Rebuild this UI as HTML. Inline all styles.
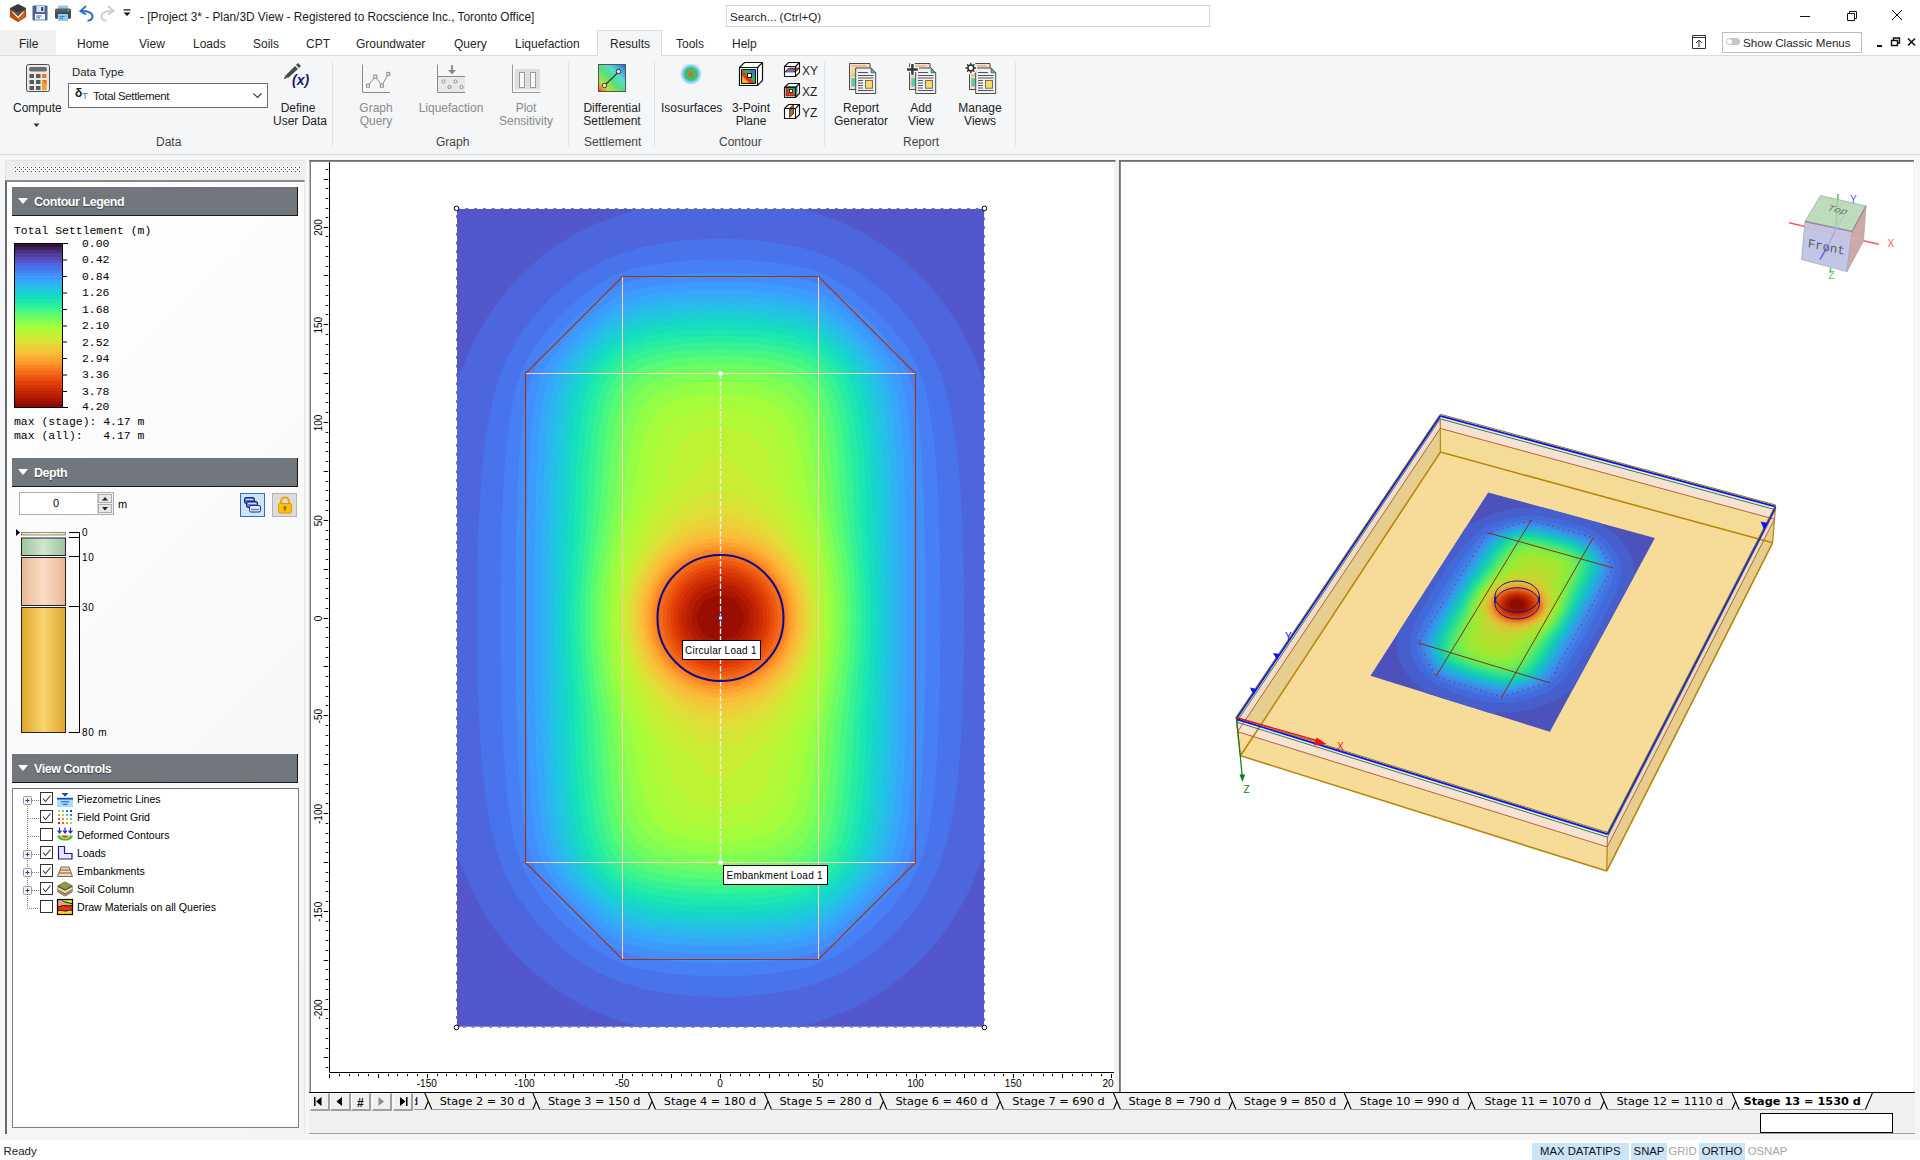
<!DOCTYPE html>
<html><head><meta charset="utf-8"><title>Settle3 - Project 3</title>
<style>
*{box-sizing:border-box;margin:0;padding:0}
html,body{width:1920px;height:1160px;overflow:hidden;background:#fff}
body{position:relative;font-family:"Liberation Sans",sans-serif;font-size:12px;color:#1e1e1e}
.a{position:absolute}
.t{position:absolute;white-space:nowrap;line-height:14px}
svg{position:absolute;overflow:visible}
#title{left:0;top:0;width:1920px;height:32px;background:#fff}
#tabs{left:0;top:32px;width:1920px;height:24px;background:#fff}
#ribbon{left:0;top:55px;width:1920px;height:105px;background:#f5f6f7;border-top:1px solid #dadbdc}
.rl{font-size:12px;text-align:center;line-height:13px;color:#222}
.dis{color:#8a8a8a}
.grp{color:#444}
.hdr{left:12px;width:286px;height:29px;background:#72767d;border-bottom:1px solid #1b1b1b;border-right:1px solid #111;color:#fff;font-weight:bold;font-size:12.500px;letter-spacing:-0.45px;line-height:30px;padding-left:22px;text-shadow:0 1px 1px rgba(0,0,0,.45)}
.hdr:before{content:"";position:absolute;left:6px;top:11px;border:5px solid transparent;border-top:6px solid #fff;border-bottom:0}
.mono{font-family:"Liberation Mono",monospace;font-size:11.45px;line-height:12px;color:#000;white-space:pre}
.tree{font-size:11px;color:#000;line-height:14px}
.stab{font-family:"DejaVu Sans","Liberation Sans",sans-serif;font-size:11.300px;line-height:14px;color:#000;white-space:nowrap;position:absolute;top:1095px}
</style></head><body>
<div id="title" class="a">
<svg style="left:9px;top:3px" width="130" height="22" viewBox="0 0 130 22">
 <!-- app logo -->
 <path d="M9 1 L17 5 L17 14 L9 19 L1 14 L1 5Z" fill="#3a3a3a"/>
 <path d="M1.5 6 L9 14.5 L16.500 6 L16.500 14 L9 18.500 L1.500 14Z" fill="#e8590c"/>
 <path d="M1.500 6 L9 14.500 L9 18.500 L1.500 14Z" fill="#c84a08"/>
 <path d="M3.500 7.500 L9 13 L14.500 7.500 L14.500 9.500 L9 15.500 L3.500 9.500Z" fill="#f0f0f0"/>
 <path d="M3.500 7 L9 9.500 L14.500 7 L14.500 8 L9 13.200 L3.500 8Z" fill="#555"/>
 <!-- save -->
 <rect x="23.500" y="2.500" width="15" height="15" rx="1" fill="#52638c"/>
 <rect x="27.500" y="3" width="8" height="6" fill="#d8e2f2"/><rect x="32.200" y="4" width="2" height="4" fill="#2d3a5e"/>
 <rect x="26" y="11" width="10" height="6.500" fill="#f2f6fb"/><rect x="26" y="16" width="10" height="1.500" fill="#8ec3f0"/>
 <rect x="27.500" y="12.500" width="5" height="1" fill="#52638c"/><rect x="27.500" y="14.300" width="3.500" height="1" fill="#52638c"/>
 <!-- print -->
 <rect x="49" y="2.500" width="10" height="4" fill="#8ec8f6"/>
 <rect x="46" y="5.500" width="16" height="10" rx="1.500" fill="#5b5b5b"/><rect x="46" y="9" width="16" height="6.500" rx="1" fill="#4a4a4a"/>
 <circle cx="59" cy="7.300" r="1" fill="#1fbf5f"/>
 <rect x="49" y="11" width="10" height="7" fill="#8ec8f6"/><rect x="50.500" y="13" width="5" height="1" fill="#2f7fd1"/><rect x="50.500" y="15" width="3.500" height="1" fill="#2f7fd1"/>
 <!-- undo -->
 <path d="M77 3 L71.500 8 L77 11.500 M72 8 C79 7.500 84 10 83.500 14 C83 16.500 81 17.500 78.500 17.800" fill="none" stroke="#2f72c4" stroke-width="2"/>
 <!-- redo -->
 <path d="M99 3 L104.500 8 L99 11.500 M104 8 C97 7.500 92 10 92.500 14 C93 16.500 95 17.500 97.500 17.800" fill="none" stroke="#cfcfcf" stroke-width="2"/>
 <!-- qat arrow -->
 <rect x="114.500" y="6.300" width="7" height="1.200" fill="#111"/><path d="M114.500 9.500 h7 l-3.500 3.500z" fill="#111"/>
</svg>
<div class="t" style="left:140px;top:10px;font-size:11.850px;color:#1a1a1a" id="ttl">- [Project 3* - Plan/3D View - Registered to Rocscience Inc., Toronto Office]</div>
<div class="a" style="left:726px;top:5px;width:484px;height:22px;border:1px solid #d2d2d2;background:#fff"></div>
<div class="t" style="left:730px;top:10px;font-size:11.600px;color:#222" id="srch">Search... (Ctrl+Q)</div>
<svg style="left:1790px;top:4px" width="124" height="24" viewBox="0 0 124 24">
 <path d="M10 12.500 h10" stroke="#111" stroke-width="1"/>
 <path d="M57.500 9.500 h7 v7 h-7z M59.500 9.500 v-2 h7 v7 h-2" fill="none" stroke="#111" stroke-width="1"/>
 <path d="M102 6 l10 10 M112 6 l-10 10" stroke="#111" stroke-width="1"/>
</svg>
</div>
<div id="tabs" class="a">
<div class="a" style="left:0;top:-2px;width:56px;height:26px;background:#f0f0f0"></div>
<div class="a" style="left:597px;top:-2px;width:65px;height:27px;background:#f5f6f7;border:1px solid #dadbdc;border-bottom:0;z-index:2"></div>
<div class="t mt" style="left:19px">File</div>
<div class="t mt" style="left:77px">Home</div>
<div class="t mt" style="left:139px">View</div>
<div class="t mt" style="left:193px">Loads</div>
<div class="t mt" style="left:253px">Soils</div>
<div class="t mt" style="left:306px">CPT</div>
<div class="t mt" style="left:356px">Groundwater</div>
<div class="t mt" style="left:454px">Query</div>
<div class="t mt" style="left:515px">Liquefaction</div>
<div class="t mt" style="left:610px;z-index:3">Results</div>
<div class="t mt" style="left:676px">Tools</div>
<div class="t mt" style="left:732px">Help</div>
<svg style="left:1690px;top:1px" width="18" height="18" viewBox="0 0 18 18"><path d="M2.500 2.500 h13 v13 h-13z M2.500 4.500 h13 M9 14 v-7 M6 10 l3 -3 l3 3" fill="none" stroke="#333" stroke-width="1"/></svg>
<div class="a" style="left:1722px;top:0px;width:140px;height:21px;border:1px solid #bdbdbd;background:#fff"></div>
<div class="a" style="left:1726px;top:6px;width:14px;height:7px;border-radius:4px;background:#c8c8c8"></div><div class="a" style="left:1727px;top:7px;width:5px;height:5px;border-radius:3px;background:#fff"></div>
<div class="t" style="left:1743px;top:4px;font-size:11.600px" id="scm">Show Classic Menus</div>
<svg style="left:1872px;top:2px" width="46" height="16" viewBox="0 0 46 16">
 <rect x="5" y="11" width="5" height="2" fill="#111"/>
 <path d="M19.500 6.500 h6 v5 h-6z M21.500 6.500 v-2.500 h6 v5 h-2" fill="none" stroke="#111" stroke-width="1.400"/>
 <path d="M36 4.500 l7 7 M43 4.500 l-7 7" stroke="#111" stroke-width="1.600"/>
</svg>
</div>
<style>.mt{top:5px;font-size:12px;color:#262626}</style>
<div id="ribbon" class="a">
<div class="a" style="left:0;top:1px;width:1920px;height:0">
<div class="a" style="left:0;top:97px;width:1920px;height:1px;background:#dcdcde"></div>
<!-- group separators -->
<div class="a sep" style="left:332px"></div><div class="a sep" style="left:568px"></div><div class="a sep" style="left:654px"></div><div class="a sep" style="left:824px"></div><div class="a sep" style="left:1015px"></div>
<style>.sep{top:5px;width:1px;height:84px;background:#e1e2e4}</style>
<!-- Compute -->
<svg style="left:26px;top:7px" width="24" height="28" viewBox="0 0 24 28">
 <rect x="0.500" y="0.500" width="23" height="27" rx="2" fill="#e9e9e9" stroke="#4d4d4d"/>
 <rect x="3" y="3" width="18" height="4.500" rx="2" fill="#6d6d6d"/>
 <g fill="#5a5a5a"><rect x="3.500" y="10" width="4.500" height="4"/><rect x="10" y="10" width="4.500" height="4"/><rect x="3.500" y="16" width="4.500" height="4"/><rect x="10" y="16" width="4.500" height="4"/><rect x="3.500" y="22" width="4.500" height="4"/><rect x="10" y="22" width="4.500" height="4"/></g>
 <rect x="16" y="10" width="4.500" height="4" fill="#ee7a1e"/><rect x="16" y="16" width="4.500" height="10" fill="#f3a032"/><path d="M16 16h4.500v5z" fill="#e8701a"/>
</svg>
<div class="t rl" style="left:13px;top:45px" id="cmp">Compute</div>
<svg style="left:33px;top:66px" width="8" height="5"><path d="M0.500 0.500 h6 l-3 3.500z" fill="#333"/></svg>
<!-- Data type -->
<div class="t" style="left:72px;top:8px;font-size:11.400px" id="dt">Data Type</div>
<div class="a" style="left:68px;top:26px;width:200px;height:25px;border:1px solid #6e6e6e;background:#fff"></div>
<div class="t" style="left:75px;top:29px;font-size:12px;font-weight:bold;color:#222">&#948;<span style="font-size:9px;color:#0d8a8a;font-weight:normal;position:relative;top:2px">T</span></div>
<div class="t" style="left:93px;top:32px;font-size:11.500px;letter-spacing:-0.4px" id="ts">Total Settlement</div>
<svg style="left:252px;top:35px" width="12" height="8"><path d="M1.500 1.500 l4 4 l4 -4" fill="none" stroke="#333" stroke-width="1.100"/></svg>
<!-- Define User Data -->
<svg style="left:283px;top:5px" width="30" height="30" viewBox="0 0 30 30">
 <path d="M2 14 L12 4 L15 7 L5 16 Z" fill="#4a4a4a"/><path d="M13 3 l2 -2 l3 3 l-2 2z" fill="#4a4a4a"/><path d="M1 17 l1 -3 l2 2z" fill="#333"/>
 <text x="9" y="23" font-family="Liberation Sans, sans-serif" font-size="14" font-weight="bold" font-style="italic" fill="#1a1a80">(x)</text>
</svg>
<div class="t rl" style="left:273px;top:45px;width:50px">Define<br>User Data</div>
<div class="t grp" style="left:156px;top:78px">Data</div>
<!-- Graph Query -->
<svg style="left:361px;top:7px" width="30" height="30" viewBox="0 0 30 30" fill="none" stroke="#8a8a8a">
 <path d="M1.500 0.500 v28 h27.500"/><path d="M7 21.700 L14.300 12.600 L20.800 21.700 L27.300 9.900"/>
 <g fill="#f5f6f7"><rect x="5.500" y="20.200" width="3" height="3"/><rect x="12.800" y="11.100" width="3" height="3"/><rect x="19.300" y="20.200" width="3" height="3"/><rect x="25.800" y="8.400" width="3" height="3"/></g>
</svg>
<div class="t rl dis" style="left:351px;top:45px;width:50px">Graph<br>Query</div>
<!-- Liquefaction -->
<svg style="left:436px;top:7px" width="30" height="30" viewBox="0 0 30 30" fill="none" stroke="#8a8a8a">
 <rect x="2" y="12.500" width="27" height="16" fill="#e8e8e8" stroke="none"/>
 <path d="M1.500 0.500 v28 h27.500"/><path d="M16 1 v6" stroke-width="1.800"/><path d="M12 6 h8 l-4 4.500z" fill="#8a8a8a" stroke="none"/><path d="M2 12.500 h27"/>
 <circle cx="7.500" cy="17.500" r="1.600" fill="#f5f6f7"/><circle cx="13.500" cy="23" r="1.600" fill="#f5f6f7"/><circle cx="19.500" cy="17.500" r="1.600" fill="#f5f6f7"/><circle cx="25.500" cy="23" r="1.600" fill="#f5f6f7"/>
</svg>
<div class="t rl dis" style="left:418px;top:45px;width:66px">Liquefaction</div>
<!-- Plot Sensitivity -->
<svg style="left:511px;top:7px" width="30" height="30" viewBox="0 0 30 30" fill="none" stroke="#9a9a9a">
 <path d="M1.500 0.500 v28 h28"/><rect x="4" y="5" width="25" height="20.500" fill="#dedede" stroke="none"/>
 <rect x="8.500" y="8.500" width="5" height="15" fill="#f5f6f7"/><rect x="19.500" y="8.500" width="5" height="15" fill="#f5f6f7"/>
</svg>
<div class="t rl dis" style="left:496px;top:45px;width:60px">Plot<br>Sensitivity</div>
<div class="t grp" style="left:436px;top:78px">Graph</div>
<!-- Differential Settlement -->
<svg style="left:598px;top:7px" width="28" height="28" viewBox="0 0 28 28">
 <defs><linearGradient id="dsg" x1="0" y1="1" x2="1" y2="0"><stop offset="0" stop-color="#d8301c"/><stop offset="0.100" stop-color="#f09020"/><stop offset="0.220" stop-color="#b0e040"/><stop offset="0.450" stop-color="#58e078"/><stop offset="0.680" stop-color="#50dcd0"/><stop offset="0.880" stop-color="#3a90e8"/><stop offset="1" stop-color="#2a58c8"/></linearGradient></defs>
 <rect x="0.500" y="0.500" width="27" height="27" fill="url(#dsg)" stroke="#555"/>
 <path d="M7 21 L20.500 8" stroke="#333" stroke-width="1.100"/><circle cx="6.500" cy="21.500" r="2.200" fill="#fde6b4" stroke="#333"/><circle cx="20.500" cy="7.500" r="2.200" fill="#fde6b4" stroke="#333"/>
</svg>
<div class="t rl" style="left:578px;top:45px;width:68px">Differential<br>Settlement</div>
<div class="t grp" style="left:584px;top:78px">Settlement</div>
<!-- Isosurfaces -->
<svg style="left:680px;top:6px" width="22" height="22" viewBox="0 0 22 22"><circle cx="11" cy="11" r="10.500" fill="#bfe3fa"/><circle cx="11" cy="11" r="9" fill="#7fc7f3"/><circle cx="11" cy="11" r="7" fill="#35c46a"/><circle cx="11" cy="11" r="4" fill="#7da64a"/><circle cx="11" cy="11" r="2.500" fill="#b07a3a"/></svg>
<div class="t rl" style="left:661px;top:45px;width:60px">Isosurfaces</div>
<!-- 3 point plane -->
<svg style="left:738px;top:4px" width="26" height="26" viewBox="0 0 26 26">
 <path d="M1.500 6.500 L6.500 1.500 H24.500 V19.500 L19.500 24.500 H1.500Z" fill="#fff" stroke="#111" stroke-width="1.200"/>
 <rect x="3.500" y="8.500" width="14" height="14" fill="#e03a1c"/><path d="M3.500 8.500h14v14z" fill="#2fb64f"/><path d="M10 8.500h7.500v8z" fill="#2f7fe0"/><path d="M3.500 14 v8.500h8z" fill="#f2b21e"/>
 <path d="M1.500 6.500 H19.500 V24.500 M19.500 6.500 L24.500 1.500" fill="none" stroke="#111" stroke-width="1.200"/>
 <path d="M3.500 8.500 h14 v14 h-14z" fill="none" stroke="#111" stroke-width="1"/>
 <rect x="9.500" y="12.500" width="4" height="4" fill="#fff" stroke="#111"/>
</svg>
<div class="t rl" style="left:726px;top:45px;width:50px">3-Point<br>Plane</div>
<!-- XY XZ YZ -->
<svg style="left:783px;top:4px" width="18" height="60" viewBox="0 0 18 60">
 <g fill="none" stroke="#111" stroke-width="1.100">
 <path d="M1.500 5.500 L5.500 1.500 H16.500 V11.500 L12.500 15.500 H1.500Z" fill="#fff"/><path d="M1.500 11 L6 7 H16.500 L12.500 11Z" fill="#e03a1c" stroke-width="0.600"/><path d="M5 8.500 l7 0 l-2 2.500 h-6z" fill="#2f7fe0" stroke="none"/><path d="M1.500 5.500 H12.500 V15.500 M12.500 5.500 L16.500 1.500"/>
 <g transform="translate(0,21)"><path d="M1.500 5.500 L5.500 1.500 H16.500 V11.500 L12.500 15.500 H1.500Z" fill="#fff"/><rect x="3" y="4.500" width="11" height="9.500" fill="#e03a1c" stroke-width="0.600"/><path d="M3 4.500h11v9.500z" fill="#2fb64f" stroke="none"/><path d="M8 4.500h6v6z" fill="#2f7fe0" stroke="none"/><rect x="6.500" y="7.500" width="3" height="3" fill="#fff" stroke-width="0.800"/><path d="M1.500 5.500 H12.500 V15.500 M12.500 5.500 L16.500 1.500"/></g>
 <g transform="translate(0,42)"><path d="M1.500 5.500 L5.500 1.500 H16.500 V11.500 L12.500 15.500 H1.500Z" fill="#fff"/><path d="M6.500 14.500 V5 L10.500 1.500 V11Z" fill="#e03a1c" stroke-width="0.600"/><path d="M7.500 8 l2 -2 v4 l-2 2z" fill="#2fb64f" stroke="none"/><path d="M1.500 5.500 H12.500 V15.500 M12.500 5.500 L16.500 1.500"/></g>
 </g>
</svg>
<div class="t" style="left:802px;top:7px">XY</div><div class="t" style="left:802px;top:28px">XZ</div><div class="t" style="left:802px;top:49px">YZ</div>
<div class="t grp" style="left:719px;top:78px">Contour</div>
<!-- Report icons -->
<svg style="left:848px;top:4px" width="30" height="34" viewBox="0 0 30 34"><use href="#rep"/></svg>
<svg style="left:908.200px;top:4px" width="30" height="34" viewBox="0 0 30 34"><use href="#rep"/><path d="M4.400 1.500 v13 M-2 8.400 h13" stroke="#f5f6f7" stroke-width="5"/><path d="M4.400 3 v10.800 M-1 8.400 h10.800" stroke="#3a3a42" stroke-width="2.500"/></svg>
<svg style="left:968px;top:4px" width="30" height="34" viewBox="0 0 30 34"><use href="#rep"/><circle cx="2.800" cy="7" r="6.500" fill="#f5f6f7"/><circle cx="2.800" cy="7" r="2.900" fill="#fff" stroke="#2a2a2a" stroke-width="1.500"/><path d="M2.800 1.800v10.400M-2.400 7h10.400M-0.900 3.300l7.400 7.400M6.500 3.300l-7.400 7.400" stroke="#2a2a2a" stroke-width="1.300" stroke-dasharray="1.900 6.600"/></svg>
<svg width="0" height="0"><defs><g id="rep">
 <path d="M1.500 2.500 h20.500 v26 h-20.500z" fill="#fbdcbc" stroke="#4a4a4a"/><path d="M3.500 5h15M3.500 13h4M3.500 14.800h4" stroke="#c8a888"/>
 <rect x="3.300" y="8" width="3.800" height="4.300" fill="#fcd860"/><rect x="3.300" y="17" width="3.800" height="8.500" fill="#4fd0b0"/>
 <path d="M7.700 7 h15.500 l4.500 4.800 v20.700 h-20z" fill="#eef0f4" stroke="#4a4a4a"/><path d="M23.200 7.300 v4.500 h4.200z" fill="#4fd0b0" stroke="#4a4a4a" stroke-width="0.800"/>
 <path d="M10 11.500h10M10 14.500h15.500M10 17h15.500M10 19.500h5M10 22h5M10 24.500h5M10 27h5M10 29.500h15.500" stroke="#555"/>
 <rect x="17.400" y="19.400" width="7.200" height="7.800" fill="#fcd860" stroke="#555" stroke-width="0.800"/>
</g></defs></svg>
<div class="t rl" style="left:831px;top:45px;width:60px">Report<br>Generator</div>
<div class="t rl" style="left:896px;top:45px;width:50px">Add<br>View</div>
<div class="t rl" style="left:950px;top:45px;width:60px">Manage<br>Views</div>
<div class="t grp" style="left:903px;top:78px">Report</div>
</div></div>
<!-- main bg -->
<div class="a" style="left:0;top:160px;width:1920px;height:980px;background:#f5f6f7"></div>
<div class="a" style="left:5px;top:160px;width:300px;height:21px;background:#eeeef0;border-top:1px solid #e2e2e6;border-left:1px solid #e2e2e6"></div>
<svg style="left:15px;top:167px" width="286" height="5"><defs><pattern id="dots" width="4" height="4" patternUnits="userSpaceOnUse"><rect width="4" height="4" fill="#f7f7f8"/><rect x="0" y="0" width="1" height="1" fill="#3a3a3a"/><rect x="2" y="2" width="1" height="1" fill="#3a3a3a"/></pattern></defs><rect x="-1" y="-1" width="288" height="7" fill="#f7f7f8"/><rect width="286" height="5" fill="url(#dots)"/></svg>
<div class="a" style="left:5px;top:180px;width:300px;height:954px;background:linear-gradient(135deg,#fff 0%,#f4f4f4 100%);border-left:2px solid #6b6b6b;border-top:2px solid #8a8a8a;border-right:1px solid #e6e6e6"></div>
<div class="a hdr" style="top:187px">Contour Legend</div>
<div class="t mono" style="left:14px;top:225px">Total Settlement (m)</div>
<svg style="left:14px;top:243px" width="60" height="166" viewBox="0 0 60 166">
<defs><linearGradient id="lg" x1="0" y1="0" x2="0" y2="1">
<stop offset="0.000" stop-color="#37123b"/><stop offset="0.020" stop-color="#37123b"/><stop offset="0.020" stop-color="#3e215f"/><stop offset="0.040" stop-color="#3e215f"/><stop offset="0.040" stop-color="#4b2f7f"/><stop offset="0.060" stop-color="#4b2f7f"/><stop offset="0.060" stop-color="#553d9c"/><stop offset="0.080" stop-color="#553d9c"/><stop offset="0.080" stop-color="#554bb5"/><stop offset="0.100" stop-color="#554bb5"/><stop offset="0.100" stop-color="#5258cb"/><stop offset="0.120" stop-color="#5258cb"/><stop offset="0.120" stop-color="#4d66dd"/><stop offset="0.140" stop-color="#4d66dd"/><stop offset="0.140" stop-color="#4873eb"/><stop offset="0.160" stop-color="#4873eb"/><stop offset="0.160" stop-color="#467ff6"/><stop offset="0.180" stop-color="#467ff6"/><stop offset="0.180" stop-color="#438efd"/><stop offset="0.200" stop-color="#438efd"/><stop offset="0.200" stop-color="#3e9bfe"/><stop offset="0.220" stop-color="#3e9bfe"/><stop offset="0.220" stop-color="#36a8f9"/><stop offset="0.240" stop-color="#36a8f9"/><stop offset="0.240" stop-color="#2db4f1"/><stop offset="0.260" stop-color="#2db4f1"/><stop offset="0.260" stop-color="#25c0e6"/><stop offset="0.280" stop-color="#25c0e6"/><stop offset="0.280" stop-color="#1dcbda"/><stop offset="0.300" stop-color="#1dcbda"/><stop offset="0.300" stop-color="#18d5cc"/><stop offset="0.320" stop-color="#18d5cc"/><stop offset="0.320" stop-color="#17debf"/><stop offset="0.340" stop-color="#17debf"/><stop offset="0.340" stop-color="#1de7b1"/><stop offset="0.360" stop-color="#1de7b1"/><stop offset="0.360" stop-color="#27eda3"/><stop offset="0.380" stop-color="#27eda3"/><stop offset="0.380" stop-color="#35f394"/><stop offset="0.400" stop-color="#35f394"/><stop offset="0.400" stop-color="#46f783"/><stop offset="0.420" stop-color="#46f783"/><stop offset="0.420" stop-color="#59fb72"/><stop offset="0.440" stop-color="#59fb72"/><stop offset="0.440" stop-color="#6dfd62"/><stop offset="0.460" stop-color="#6dfd62"/><stop offset="0.460" stop-color="#80fe53"/><stop offset="0.480" stop-color="#80fe53"/><stop offset="0.480" stop-color="#92fe46"/><stop offset="0.500" stop-color="#92fe46"/><stop offset="0.500" stop-color="#a4fc3b"/><stop offset="0.520" stop-color="#a4fc3b"/><stop offset="0.520" stop-color="#b1f836"/><stop offset="0.540" stop-color="#b1f836"/><stop offset="0.540" stop-color="#bef334"/><stop offset="0.560" stop-color="#bef334"/><stop offset="0.560" stop-color="#caed33"/><stop offset="0.580" stop-color="#caed33"/><stop offset="0.580" stop-color="#d6e535"/><stop offset="0.600" stop-color="#d6e535"/><stop offset="0.600" stop-color="#e1dc37"/><stop offset="0.620" stop-color="#e1dc37"/><stop offset="0.620" stop-color="#ead339"/><stop offset="0.640" stop-color="#ead339"/><stop offset="0.640" stop-color="#f2c83a"/><stop offset="0.660" stop-color="#f2c83a"/><stop offset="0.660" stop-color="#f8be39"/><stop offset="0.680" stop-color="#f8be39"/><stop offset="0.680" stop-color="#fcb035"/><stop offset="0.700" stop-color="#fcb035"/><stop offset="0.700" stop-color="#fda330"/><stop offset="0.720" stop-color="#fda330"/><stop offset="0.720" stop-color="#fd952b"/><stop offset="0.740" stop-color="#fd952b"/><stop offset="0.740" stop-color="#fc8624"/><stop offset="0.760" stop-color="#fc8624"/><stop offset="0.760" stop-color="#f9771e"/><stop offset="0.780" stop-color="#f9771e"/><stop offset="0.780" stop-color="#f56817"/><stop offset="0.800" stop-color="#f56817"/><stop offset="0.800" stop-color="#ef5a11"/><stop offset="0.820" stop-color="#ef5a11"/><stop offset="0.820" stop-color="#e94d0d"/><stop offset="0.840" stop-color="#e94d0d"/><stop offset="0.840" stop-color="#e04008"/><stop offset="0.860" stop-color="#e04008"/><stop offset="0.860" stop-color="#d73606"/><stop offset="0.880" stop-color="#d73606"/><stop offset="0.880" stop-color="#ce2d04"/><stop offset="0.900" stop-color="#ce2d04"/><stop offset="0.900" stop-color="#c32402"/><stop offset="0.920" stop-color="#c32402"/><stop offset="0.920" stop-color="#b61c01"/><stop offset="0.940" stop-color="#b61c01"/><stop offset="0.940" stop-color="#a91501"/><stop offset="0.960" stop-color="#a91501"/><stop offset="0.960" stop-color="#9a0e01"/><stop offset="0.980" stop-color="#9a0e01"/><stop offset="0.980" stop-color="#8b0901"/><stop offset="1.000" stop-color="#8b0901"/>
</linearGradient></defs>
<rect x="0.500" y="0.500" width="48" height="164" fill="url(#lg)" stroke="#000"/>
<path d="M48 0.500h6M48 17h5M48 33.500h5M48 50h5M48 66.500h5M48 83h5M48 99h5M48 115.500h5M48 132h5M48 148.500h5M48 164.500h6" stroke="#000"/>
</svg>
<div class="t mono" style="left:82px;top:236px;line-height:16.420px">0.00
0.42
0.84
1.26
1.68
2.10
2.52
2.94
3.36
3.78</div>
<div class="t mono" style="left:82px;top:401px">4.20</div>
<div class="t mono" style="left:14px;top:415px;line-height:14px">max (stage): 4.17 m
max (all):   4.17 m</div>
<div class="a hdr" style="top:458px">Depth</div>
<div class="a" style="left:19px;top:492px;width:95px;height:23px;border:1px solid #abadb3;background:#fff"></div>
<div class="t" style="left:53px;top:496px;font-size:11px;color:#000">0</div>
<div class="a" style="left:97px;top:493px;width:16px;height:21px;background:#f0f0f0;border-left:1px solid #d0d0d0"></div>
<div class="a" style="left:98px;top:494px;width:14px;height:9px;border:1px solid #adadad;background:#e8e8e8"></div>
<div class="a" style="left:98px;top:504px;width:14px;height:9px;border:1px solid #adadad;background:#e8e8e8"></div>
<svg style="left:101px;top:496px" width="8" height="16"><path d="M1 4.500 l3 -3.500 l3 3.500z M1 11 l3 3.500 l3 -3.500z" fill="#222"/></svg>
<div class="t" style="left:118px;top:497px;font-size:11px;color:#000">m</div>
<div class="a" style="left:240px;top:493px;width:25px;height:24px;border:1px solid #2a6fc9;background:#cfe4f7"></div>
<svg style="left:243px;top:496px" width="20" height="18" viewBox="0 0 20 18">
 <g stroke="#1c2e70" stroke-width="1"><rect x="1.500" y="1.500" width="10" height="6" rx="1.500" fill="#4f6fd0"/><rect x="3.500" y="5.500" width="11" height="6" rx="1.500" fill="#5b7be0"/><rect x="6.500" y="9.500" width="11" height="6.500" rx="1.500" fill="#e8eefc"/></g>
 <path d="M3 3.500h7M5 7.500h8" stroke="#cfd9ff" stroke-width="1"/><path d="M8 13.500h8" stroke="#5b7be0" stroke-width="1.500"/>
</svg>
<div class="a" style="left:272px;top:493px;width:25px;height:24px;border:1px solid #b4b4b4;background:#dcdcdc"></div>
<svg style="left:277px;top:496px" width="16" height="18" viewBox="0 0 16 18">
 <path d="M4 8 V5.500 a4 4 0 0 1 8 0 V8" fill="none" stroke="#f0a800" stroke-width="2.200"/><rect x="1.500" y="7.500" width="13" height="9.500" rx="1.500" fill="#fcbf10" stroke="#e09a00"/><circle cx="8" cy="11.500" r="1.500" fill="#8a6a2a"/><rect x="7.300" y="12" width="1.400" height="3" fill="#8a6a2a"/>
</svg>
<!-- soil column -->
<svg style="left:14px;top:528px" width="110" height="212" viewBox="0 0 110 212">
<defs>
<linearGradient id="sg1" x1="0" x2="1"><stop offset="0" stop-color="#9ec49e"/><stop offset="0.500" stop-color="#cfe6cf"/><stop offset="1" stop-color="#9ec49e"/></linearGradient>
<linearGradient id="sg2" x1="0" x2="1"><stop offset="0" stop-color="#e6b894"/><stop offset="0.500" stop-color="#fbdcc3"/><stop offset="1" stop-color="#e6b894"/></linearGradient>
<linearGradient id="sg3" x1="0" x2="1"><stop offset="0" stop-color="#dba62c"/><stop offset="0.500" stop-color="#fbd56e"/><stop offset="1" stop-color="#dba62c"/></linearGradient>
<linearGradient id="sg0" x1="0" x2="1"><stop offset="0" stop-color="#e6dc9a"/><stop offset="0.500" stop-color="#fbf4c8"/><stop offset="1" stop-color="#e6dc9a"/></linearGradient>
</defs>
<path d="M2 1 l4 3.500 l-4 3.500z" fill="#000"/>
<rect x="7.500" y="4.300" width="44" height="2.700" fill="url(#sg0)" stroke="#666" stroke-width="0.700"/>
<rect x="7.500" y="10" width="44" height="17.500" fill="url(#sg1)" stroke="#222"/>
<rect x="7.500" y="29.500" width="44" height="48" fill="url(#sg2)" stroke="#222"/>
<rect x="7.500" y="79.500" width="44" height="125" fill="url(#sg3)" stroke="#222"/>
<path d="M55 4.500 h10.500 v200 h-10.500 M55 9.500 h10.500 M55 28.500 h10.500 M55 78.500 h10.500" fill="none" stroke="#000"/>
<g font-family="Liberation Sans, sans-serif" font-size="10" fill="#000" letter-spacing="0.800"><text x="68" y="8">0</text><text x="68" y="33">10</text><text x="68" y="83">30</text><text x="68" y="208">80 m</text></g>
</svg>
<div class="a hdr" style="top:754px">View Controls</div>
<div class="a" style="left:12px;top:788px;width:287px;height:340px;border:1px solid #7a7f8a;border-top-color:#6a6f7a;background:#fff"></div>
<!-- tree -->
<svg style="left:20px;top:789px" width="60" height="126" viewBox="0 0 60 126">
 <path d="M7.500 15 V119.500 H19 M8 29.500 H19 M8 47.500 H19 M12 11.500 H19 M12 65.500 H19 M12 83.500 H19 M12 101.500 H19" fill="none" stroke="#7a7a7a" stroke-dasharray="1 1"/>
 <g fill="#f4f4f4" stroke="#9a9a9a"><rect x="3.500" y="7.500" width="8" height="8" rx="1"/><rect x="3.500" y="61.500" width="8" height="8" rx="1"/><rect x="3.500" y="79.500" width="8" height="8" rx="1"/><rect x="3.500" y="97.500" width="8" height="8" rx="1"/></g>
 <path d="M5.500 11.500h4M7.500 9.500v4M5.500 65.500h4M7.500 63.500v4M5.500 83.500h4M7.500 81.500v4M5.500 101.500h4M7.500 99.500v4" stroke="#1f3f98"/>
 <g fill="#fff" stroke="#333"><rect x="20.500" y="3.500" width="12" height="12"/><rect x="20.500" y="21.500" width="12" height="12"/><rect x="20.500" y="39.500" width="12" height="12"/><rect x="20.500" y="57.500" width="12" height="12"/><rect x="20.500" y="75.500" width="12" height="12"/><rect x="20.500" y="93.500" width="12" height="12"/><rect x="20.500" y="111.500" width="12" height="12"/></g>
 <path d="M23 9.500l2.500 3l5-6M23 27.500l2.500 3l5-6M23 63.500l2.500 3l5-6M23 81.500l2.500 3l5-6M23 99.500l2.500 3l5-6" fill="none" stroke="#333" stroke-width="1.100"/>
 <g transform="translate(37,3)"><rect x="0" y="7" width="16" height="8" fill="#a8dcf8"/><path d="M4.500 1 h7 l-3.500 3.800z" fill="#1546c0"/><rect x="0" y="5.800" width="16" height="1.700" fill="#1546c0"/><rect x="4" y="9.300" width="8" height="1.100" fill="#1a6ad8"/><rect x="5.500" y="11.800" width="5" height="1.100" fill="#1a6ad8"/></g>
 <g transform="translate(37,19)"><rect x="1" y="2" width="2" height="2" fill="#a8e820"/><rect x="5" y="2" width="2" height="2" fill="#20d8c8"/><rect x="9" y="2" width="2" height="2" fill="#2878e8"/><rect x="13" y="2" width="2" height="2" fill="#1a3aa8"/><rect x="1" y="6" width="2" height="2" fill="#f89820"/><rect x="5" y="6" width="2" height="2" fill="#a8e820"/><rect x="9" y="6" width="2" height="2" fill="#20d8c8"/><rect x="13" y="6" width="2" height="2" fill="#2878e8"/><rect x="1" y="10" width="2" height="2" fill="#f05018"/><rect x="5" y="10" width="2" height="2" fill="#f89820"/><rect x="9" y="10" width="2" height="2" fill="#a8e820"/><rect x="13" y="10" width="2" height="2" fill="#20d8c8"/><rect x="1" y="14" width="2" height="2" fill="#e81818"/><rect x="5" y="14" width="2" height="2" fill="#f05018"/><rect x="9" y="14" width="2" height="2" fill="#f89820"/><rect x="13" y="14" width="2" height="2" fill="#a8e820"/></g>
 <g transform="translate(37,38)"><path d="M2.500 0.500v5M8 0.500v5M13.500 0.500v5M0.500 3.500l2 2.500l2-2.500M6 3.500l2 2.500l2-2.500M11.500 3.500l2 2.500l2-2.500" fill="none" stroke="#1a2ad8" stroke-width="1.200"/><path d="M0 8.500h16c-0.500 3-3.500 5-8 5s-7.500-2-8-5z" fill="#30b858"/><path d="M2.500 8.500h11c-0.500 2.200-2.500 3.600-5.500 3.600s-5-1.400-5.500-3.600z" fill="#f0d020"/><path d="M5 8.500h6c-0.300 1.300-1.300 2.200-3 2.200s-2.700-0.900-3-2.200z" fill="#e83818"/><path d="M0 8.500h16" stroke="#c8d0d8" stroke-width="0.600"/></g>
 <g transform="translate(37,56)"><path d="M1.500 1.500h6v7h7.500v5.500h-13.500z" fill="#e8e8fa" stroke="#1a1a9a" stroke-width="1.200"/></g>
 <g transform="translate(37,74)"><path d="M4 4h8l3.500 9.500h-15z" fill="#f8d8b0" stroke="#6a5a4a" stroke-width="0.900"/><path d="M3 7h10M1.800 10h12.400" stroke="#6a5a4a" stroke-width="0.900"/></g>
 <g transform="translate(37,92)"><path d="M8 0.500l7.500 4v6.500l-7.500 4.500l-7.500-4.500v-6.500z" fill="#5a4a32"/><path d="M8 0.800l7 3.800l-7 3.800l-7-3.800z" fill="#8a9a48"/><path d="M1 6l7 3.800l7-3.800v2.500l-7 4l-7-4z" fill="#e8dcb0"/><path d="M1 9l7 4l7-4v2l-7 4.200l-7-4.200z" fill="#a88a60"/></g>
 <g transform="translate(37,110)"><rect x="0.500" y="0.500" width="15" height="15" fill="#d8a878" stroke="#000"/><path d="M5 1h10.500v3.500c-3 0.500-5-1.500-7-1.500s-2.500-1-3.500-2z" fill="#c8f020"/><path d="M0.500 8c3 0 4-2 7-1.500s5 0.500 8 0v5c-3-1.500-5 1-8 0.500s-4-1-7-0.500z" fill="#e83018"/><path d="M0.500 11.500c3-0.500 4 0 7 0.500s5-2 8-0.500v4h-15z" fill="#f8d820"/><path d="M5 1c1 1 1.500 2 3.500 2s4 2 7 1.500M0.500 8c3 0 4-2 7-1.500s5 0.500 8 0M0.500 11.500c3-0.500 4 0 7 0.500s5-2 8-0.500" fill="none" stroke="#000" stroke-width="0.900"/><rect x="0.500" y="0.500" width="15" height="15" fill="none" stroke="#000" stroke-width="1.200"/></g>
</svg>
<div class="t tree" style="left:77px;top:790px;line-height:18px;font-size:10.600px">Piezometric Lines<br>Field Point Grid<br>Deformed Contours<br>Loads<br>Embankments<br>Soil Column<br>Draw Materials on all Queries</div>
<svg style="left:0;top:0" width="1920" height="1160" viewBox="0 0 1920 1160" id="plan">
<rect x="309" y="160" width="808" height="933" fill="#fff"/>
<rect x="309.500" y="160" width="1.500" height="932" fill="#7a7a7a"/><rect x="309.500" y="160" width="806" height="1.800" fill="#6e6e6e"/>
<rect x="1114.500" y="162" width="1" height="930" fill="#ececec"/><rect x="1116" y="160" width="3" height="932" fill="#f0f0f0"/>
<path d="M329.500 162 V1072.500 H1114" fill="none" stroke="#000"/>
<path d="M325.7 1067.5h2.5M323.7 1057.5h4.5M325.7 1048.5h2.5M325.7 1038.5h2.5M325.7 1028.5h2.5M325.7 1018.5h2.5M323.7 1009.5h4.5M325.7 999.5h2.5M325.7 989.5h2.5M325.7 979.5h2.5M325.7 969.5h2.5M323.7 960.5h4.5M325.7 950.5h2.5M325.7 940.5h2.5M325.7 930.5h2.5M325.7 921.5h2.5M323.7 911.5h4.5M325.7 901.5h2.5M325.7 891.5h2.5M325.7 881.5h2.5M325.7 872.5h2.5M323.7 862.5h4.5M325.7 852.5h2.5M325.7 842.5h2.5M325.7 833.5h2.5M325.7 823.5h2.5M323.7 813.5h4.5M325.7 803.5h2.5M325.7 793.5h2.5M325.7 784.5h2.5M325.7 774.5h2.5M323.7 764.5h4.5M325.7 754.5h2.5M325.7 745.5h2.5M325.7 735.5h2.5M325.7 725.5h2.5M323.7 715.5h4.5M325.7 705.5h2.5M325.7 696.5h2.5M325.7 686.5h2.5M325.7 676.5h2.5M323.7 666.5h4.5M325.7 657.5h2.5M325.7 647.5h2.5M325.7 637.5h2.5M325.7 627.5h2.5M323.7 618.5h4.5M325.7 608.5h2.5M325.7 598.5h2.5M325.7 588.5h2.5M325.7 578.5h2.5M323.7 569.5h4.5M325.7 559.5h2.5M325.7 549.5h2.5M325.7 539.5h2.5M325.7 530.5h2.5M323.7 520.5h4.5M325.7 510.5h2.5M325.7 500.5h2.5M325.7 490.5h2.5M325.7 481.5h2.5M323.7 471.5h4.5M325.7 461.5h2.5M325.7 451.5h2.5M325.7 442.5h2.5M325.7 432.5h2.5M323.7 422.5h4.5M325.7 412.5h2.5M325.7 402.5h2.5M325.7 393.5h2.5M325.7 383.5h2.5M323.7 373.5h4.5M325.7 363.5h2.5M325.7 354.5h2.5M325.7 344.5h2.5M325.7 334.5h2.5M323.7 324.5h4.5M325.7 314.5h2.5M325.7 305.5h2.5M325.7 295.5h2.5M325.7 285.5h2.5M323.7 275.5h4.5M325.7 266.5h2.5M325.7 256.5h2.5M325.7 246.5h2.5M325.7 236.5h2.5M323.7 227.5h4.5M325.7 217.5h2.5M325.7 208.5h2.5M325.7 198.5h2.5M325.7 188.5h2.5M323.7 179.5h4.5M325.7 169.5h2.5M329.5 1074v4.2M339.5 1074v2.2M349.5 1074v2.2M358.5 1074v2.2M368.5 1074v2.2M378.5 1074v4.2M388.5 1074v2.2M397.5 1074v2.2M407.5 1074v2.2M417.5 1074v2.2M427.5 1074v4.2M437.5 1074v2.2M446.5 1074v2.2M456.5 1074v2.2M466.5 1074v2.2M476.5 1074v4.2M485.5 1074v2.2M495.5 1074v2.2M505.5 1074v2.2M515.5 1074v2.2M525.5 1074v4.2M534.5 1074v2.2M544.5 1074v2.2M554.5 1074v2.2M564.5 1074v2.2M573.5 1074v4.2M583.5 1074v2.2M593.5 1074v2.2M603.5 1074v2.2M612.5 1074v2.2M622.5 1074v4.2M632.5 1074v2.2M642.5 1074v2.2M652.5 1074v2.2M661.5 1074v2.2M671.5 1074v4.2M681.5 1074v2.2M691.5 1074v2.2M700.5 1074v2.2M710.5 1074v2.2M720.5 1074v4.2M730.5 1074v2.2M740.5 1074v2.2M749.5 1074v2.2M759.5 1074v2.2M769.5 1074v4.2M779.5 1074v2.2M788.5 1074v2.2M798.5 1074v2.2M808.5 1074v2.2M818.5 1074v4.2M828.5 1074v2.2M837.5 1074v2.2M847.5 1074v2.2M857.5 1074v2.2M867.5 1074v4.2M876.5 1074v2.2M886.5 1074v2.2M896.5 1074v2.2M906.5 1074v2.2M916.5 1074v4.2M925.5 1074v2.2M935.5 1074v2.2M945.5 1074v2.2M955.5 1074v2.2M964.5 1074v4.2M974.5 1074v2.2M984.5 1074v2.2M994.5 1074v2.2M1003.5 1074v2.2M1013.5 1074v4.2M1023.5 1074v2.2M1033.5 1074v2.2M1043.5 1074v2.2M1052.5 1074v2.2M1062.5 1074v4.2M1072.5 1074v2.2M1082.5 1074v2.2M1091.5 1074v2.2M1101.5 1074v2.2M1111.5 1074v4.2" stroke="#000" fill="none"/>
<g font-family="Liberation Sans, sans-serif" font-size="10" fill="#000" text-anchor="middle">
<text transform="translate(321.500,1009.5) rotate(-90)">-200</text><text transform="translate(321.500,911.8) rotate(-90)">-150</text><text transform="translate(321.500,814.0) rotate(-90)">-100</text><text transform="translate(321.500,716.2) rotate(-90)">-50</text><text transform="translate(321.500,618.5) rotate(-90)">0</text><text transform="translate(321.500,520.8) rotate(-90)">50</text><text transform="translate(321.500,423.0) rotate(-90)">100</text><text transform="translate(321.500,325.2) rotate(-90)">150</text><text transform="translate(321.500,227.5) rotate(-90)">200</text><text x="426.8" y="1087">-150</text><text x="524.5" y="1087">-100</text><text x="622.2" y="1087">-50</text><text x="720.0" y="1087">0</text><text x="817.8" y="1087">50</text><text x="915.5" y="1087">100</text><text x="1013.2" y="1087">150</text><text x="1108" y="1087">20</text></g>
<g transform="translate(457,209)"><g id="cont"><rect width="527" height="817.700" fill="#5258cb"/><path fill="#4d66dd" d="M175.4,815.4 177.6,817.7 183,817.7 185.4,817.7 193.2,817.7 201,817.7 208.8,817.7 216.7,817.7 224.5,817.7 232.3,817.7 240.1,817.7 247.9,817.7 255.7,817.7 263.5,817.7 271.3,817.7 279.1,817.7 286.9,817.7 294.7,817.7 302.5,817.7 310.3,817.7 318.2,817.7 326,817.7 333.8,817.7 341.6,817.7 344,817.7 349.4,817.7 351.6,815.4 357.2,813.9 365,811.5 372.8,808.8 375.9,807.5 380.6,805.8 388.4,802.6 394.4,799.7 396.2,798.9 404,795 409.5,791.9 411.8,790.6 419.6,786 422.5,784.1 427.5,780.9 433.8,776.3 435.3,775.2 443.1,769.2 444,768.5 450.9,762.7 453.1,760.6 458.7,755.5 461.5,752.8 466.5,747.7 469,745 474.3,739.1 476,737.2 482.1,729.7 482.3,729.4 488.3,721.5 489.9,719.2 493.8,713.7 497.7,707.5 498.7,705.9 503.4,698.1 505.5,694 507.6,690.3 511.5,682.5 513.3,678.4 515.1,674.6 518.4,666.8 521.1,659.5 521.4,659 525.2,651.2 527,643.4 527,642.1 527,635.6 527,627.7 527,619.9 527,612.1 527,604.3 527,596.5 527,588.7 527,580.8 527,573 527,565.2 527,557.4 527,549.6 527,541.7 527,533.9 527,526.1 527,518.3 527,510.5 527,502.7 527,494.8 527,487 527,479.2 527,471.4 527,463.6 527,455.8 527,447.9 527,440.1 527,432.3 527,424.5 527,416.7 527,408.9 527,401 527,393.2 527,385.4 527,377.6 527,369.8 527,361.9 527,354.1 527,346.3 527,338.5 527,330.7 527,322.9 527,315 527,307.2 527,299.4 527,291.6 527,283.8 527,276 527,268.1 527,260.3 527,252.5 527,244.7 527,236.9 527,229 527,221.2 527,213.4 527,205.6 527,197.8 527,190 527,182.1 527,175.6 527,174.3 525.2,166.5 521.4,158.7 521.1,158.2 518.4,150.9 515.1,143.1 513.3,139.3 511.5,135.2 507.6,127.4 505.5,123.7 503.4,119.6 498.7,111.8 497.7,110.2 493.8,104 489.9,98.5 488.3,96.2 482.3,88.3 482.1,88 476,80.5 474.3,78.6 469,72.7 466.5,70 461.5,64.9 458.7,62.2 453.1,57.1 450.9,55 444,49.2 443.1,48.5 435.3,42.5 433.8,41.4 427.5,36.8 422.5,33.6 419.6,31.7 411.8,27.1 409.5,25.8 404,22.7 396.2,18.8 394.4,18 388.4,15.1 380.6,11.9 375.9,10.2 372.8,8.9 365,6.2 357.2,3.8 351.6,2.3 349.4,0 344,0 341.6,0 333.8,0 326,0 318.2,0 310.3,0 302.5,0 294.7,0 286.9,0 279.1,0 271.3,0 263.5,0 255.7,0 247.9,0 240.1,0 232.3,0 224.5,0 216.7,0 208.8,0 201,0 193.2,0 185.4,0 183,0 177.6,0 175.4,2.3 169.8,3.8 162,6.2 154.2,8.9 151.1,10.2 146.4,11.9 138.6,15.1 132.6,18 130.8,18.8 123,22.7 117.5,25.8 115.2,27.1 107.4,31.7 104.5,33.6 99.5,36.8 93.2,41.4 91.7,42.5 83.9,48.5 83,49.2 76.1,55 73.9,57.1 68.3,62.2 65.5,64.9 60.5,70 58,72.7 52.7,78.6 51,80.5 44.9,88 44.7,88.3 38.7,96.2 37.1,98.5 33.2,104 29.3,110.2 28.3,111.8 23.6,119.6 21.5,123.7 19.4,127.4 15.5,135.2 13.7,139.3 11.9,143.1 8.6,150.9 5.9,158.2 5.6,158.7 1.8,166.5 0,174.3 0,175.6 0,182.1 0,190 0,197.8 0,205.6 0,213.4 0,221.2 0,229 0,236.9 0,244.7 0,252.5 0,260.3 0,268.1 0,276 0,283.8 0,291.6 0,299.4 0,307.2 0,315 0,322.9 0,330.7 0,338.5 0,346.3 0,354.1 0,361.9 0,369.8 0,377.6 0,385.4 0,393.2 0,401 0,408.9 0,416.7 0,424.5 0,432.3 0,440.1 0,447.9 0,455.8 0,463.6 0,471.4 0,479.2 0,487 0,494.8 0,502.7 0,510.5 0,518.3 0,526.1 0,533.9 0,541.7 0,549.6 0,557.4 0,565.2 0,573 0,580.8 0,588.7 0,596.5 0,604.3 0,612.1 0,619.9 0,627.7 0,635.6 0,642.1 0,643.4 1.8,651.2 5.6,659 5.9,659.5 8.6,666.8 11.9,674.6 13.7,678.4 15.5,682.5 19.4,690.3 21.5,694 23.6,698.1 28.3,705.9 29.3,707.5 33.2,713.7 37.1,719.2 38.7,721.5 44.7,729.4 44.9,729.7 51,737.2 52.7,739.1 58,745 60.5,747.7 65.5,752.8 68.3,755.5 73.9,760.6 76.1,762.7 83,768.5 83.9,769.2 91.7,775.2 93.2,776.3 99.5,780.9 104.5,784.1 107.4,786 115.2,790.6 117.5,791.9 123,795 130.8,798.9 132.6,799.7 138.6,802.6 146.4,805.8 151.1,807.5 154.2,808.8 162,811.5 169.8,813.9Z"/><path fill="#4873eb" d="M210.3,784.1 216.7,785 224.5,786 232.3,786.7 240.1,787.2 247.9,787.6 255.7,787.9 263.5,787.9 271.3,787.9 279.1,787.6 286.9,787.2 294.7,786.7 302.5,786 310.3,785 316.7,784.1 318.2,783.9 326,782.7 333.8,781.3 341.6,779.6 349.4,777.5 353.3,776.3 357.2,775.2 365,772.6 372.8,769.4 374.9,768.5 380.6,766 388.4,761.9 390.5,760.6 396.2,757.4 403.2,752.8 404,752.3 411.8,746.8 414.1,745 419.6,740.7 423.8,737.2 427.5,734 432.4,729.4 435.3,726.6 440.2,721.5 443.1,718.4 447.2,713.7 450.9,709.3 453.6,705.9 458.7,699.1 459.4,698.1 464.8,690.3 466.5,687.4 469.6,682.5 473.8,674.6 474.3,673.5 477.7,666.8 481,659 482.1,655.8 483.9,651.2 486.6,643.4 488.8,635.6 489.9,630.9 490.8,627.7 492.7,619.9 494.4,612.1 495.8,604.3 497,596.5 497.7,591.4 498.2,588.7 499.3,580.8 500.3,573 501.1,565.2 501.9,557.4 502.6,549.6 503.1,541.7 503.7,533.9 504.1,526.1 504.5,518.3 504.9,510.5 505.2,502.7 505.5,494.8 505.5,493.8 505.8,487 506,479.2 506.2,471.4 506.4,463.6 506.6,455.8 506.7,447.9 506.8,440.1 506.9,432.3 506.9,424.5 507,416.7 507,408.9 507,401 506.9,393.2 506.9,385.4 506.8,377.6 506.7,369.8 506.6,361.9 506.4,354.1 506.2,346.3 506,338.5 505.8,330.7 505.5,323.9 505.5,322.9 505.2,315 504.9,307.2 504.5,299.4 504.1,291.6 503.7,283.8 503.1,276 502.6,268.1 501.9,260.3 501.1,252.5 500.3,244.7 499.3,236.9 498.2,229 497.7,226.3 497,221.2 495.8,213.4 494.4,205.6 492.7,197.8 490.8,190 489.9,186.8 488.8,182.1 486.6,174.3 483.9,166.5 482.1,161.9 481,158.7 477.7,150.9 474.3,144.2 473.8,143.1 469.6,135.2 466.5,130.3 464.8,127.4 459.4,119.6 458.7,118.6 453.6,111.8 450.9,108.4 447.2,104 443.1,99.3 440.2,96.2 435.3,91.1 432.4,88.3 427.5,83.7 423.8,80.5 419.6,77 414.1,72.7 411.8,70.9 404,65.4 403.2,64.9 396.2,60.3 390.5,57.1 388.4,55.8 380.6,51.7 374.9,49.2 372.8,48.3 365,45.1 357.2,42.5 353.3,41.4 349.4,40.2 341.6,38.1 333.8,36.4 326,35 318.2,33.8 316.7,33.6 310.3,32.7 302.5,31.7 294.7,31 286.9,30.5 279.1,30.1 271.3,29.8 263.5,29.8 255.7,29.8 247.9,30.1 240.1,30.5 232.3,31 224.5,31.7 216.7,32.7 210.3,33.6 208.8,33.8 201,35 193.2,36.4 185.4,38.1 177.6,40.2 173.7,41.4 169.8,42.5 162,45.1 154.2,48.3 152.1,49.2 146.4,51.7 138.6,55.8 136.5,57.1 130.8,60.3 123.8,64.9 123,65.4 115.2,70.9 112.9,72.7 107.4,77 103.2,80.5 99.5,83.7 94.6,88.3 91.7,91.1 86.8,96.2 83.9,99.3 79.8,104 76.1,108.4 73.4,111.8 68.3,118.6 67.6,119.6 62.2,127.4 60.5,130.3 57.4,135.2 53.2,143.1 52.7,144.2 49.3,150.9 46,158.7 44.9,161.9 43.1,166.5 40.4,174.3 38.2,182.1 37.1,186.8 36.2,190 34.3,197.8 32.6,205.6 31.2,213.4 30,221.2 29.3,226.3 28.8,229 27.7,236.9 26.7,244.7 25.9,252.5 25.1,260.3 24.4,268.1 23.9,276 23.3,283.8 22.9,291.6 22.5,299.4 22.1,307.2 21.8,315 21.5,322.9 21.5,323.9 21.2,330.7 21,338.5 20.8,346.3 20.6,354.1 20.4,361.9 20.3,369.8 20.2,377.6 20.1,385.4 20.1,393.2 20,401 20,408.9 20,416.7 20.1,424.5 20.1,432.3 20.2,440.1 20.3,447.9 20.4,455.8 20.6,463.6 20.8,471.4 21,479.2 21.2,487 21.5,493.8 21.5,494.8 21.8,502.7 22.1,510.5 22.5,518.3 22.9,526.1 23.3,533.9 23.9,541.7 24.4,549.6 25.1,557.4 25.9,565.2 26.7,573 27.7,580.8 28.8,588.7 29.3,591.4 30,596.5 31.2,604.3 32.6,612.1 34.3,619.9 36.2,627.7 37.1,630.9 38.2,635.6 40.4,643.4 43.1,651.2 44.9,655.8 46,659 49.3,666.8 52.7,673.5 53.2,674.6 57.4,682.5 60.5,687.4 62.2,690.3 67.6,698.1 68.3,699.1 73.4,705.9 76.1,709.3 79.8,713.7 83.9,718.4 86.8,721.5 91.7,726.6 94.6,729.4 99.5,734 103.2,737.2 107.4,740.7 112.9,745 115.2,746.8 123,752.3 123.8,752.8 130.8,757.4 136.5,760.6 138.6,761.9 146.4,766 152.1,768.5 154.2,769.4 162,772.6 169.8,775.2 173.7,776.3 177.6,777.5 185.4,779.6 193.2,781.3 201,782.7 208.8,783.9Z"/><path fill="#467ff6" d="M188.6,760.6 193.2,761.6 201,763 208.8,764.1 216.7,765 224.5,765.7 232.3,766.3 240.1,766.7 247.9,767 255.7,767.2 263.5,767.2 271.3,767.2 279.1,767 286.9,766.7 294.7,766.3 302.5,765.7 310.3,765 318.2,764.1 326,763 333.8,761.6 338.4,760.6 341.6,760.1 349.4,758.4 357.2,756.2 365,753.1 365.6,752.8 372.8,749.8 380.6,745.4 381.2,745 388.4,740.6 393.3,737.2 396.2,735.1 403.5,729.4 404,728.9 411.8,722.3 412.7,721.5 419.6,715.1 421,713.7 427.5,707.1 428.6,705.9 435.3,698.3 435.4,698.1 441.8,690.3 443.1,688.6 447.6,682.5 450.9,677.4 452.7,674.6 457.2,666.8 458.7,663.6 461,659 464.2,651.2 466.5,643.4 468.8,635.6 470.6,627.7 472.1,619.9 473.3,612.1 474.3,605.1 474.4,604.3 475.6,596.5 476.6,588.7 477.5,580.8 478.3,573 478.9,565.2 479.5,557.4 480,549.6 480.5,541.7 480.9,533.9 481.2,526.1 481.5,518.3 481.8,510.5 482,502.7 482.1,500.3 482.3,494.8 482.5,487 482.7,479.2 482.9,471.4 483,463.6 483.1,455.8 483.2,447.9 483.3,440.1 483.3,432.3 483.4,424.5 483.4,416.7 483.4,408.9 483.4,401 483.4,393.2 483.3,385.4 483.3,377.6 483.2,369.8 483.1,361.9 483,354.1 482.9,346.3 482.7,338.5 482.5,330.7 482.3,322.9 482.1,317.4 482,315 481.8,307.2 481.5,299.4 481.2,291.6 480.9,283.8 480.5,276 480,268.1 479.5,260.3 478.9,252.5 478.3,244.7 477.5,236.9 476.6,229 475.6,221.2 474.4,213.4 474.3,212.6 473.3,205.6 472.1,197.8 470.6,190 468.8,182.1 466.5,174.3 464.2,166.5 461,158.7 458.7,154.1 457.2,150.9 452.7,143.1 450.9,140.3 447.6,135.2 443.1,129.1 441.8,127.4 435.4,119.6 435.3,119.4 428.6,111.8 427.5,110.6 421,104 419.6,102.6 412.7,96.2 411.8,95.4 404,88.8 403.5,88.3 396.2,82.6 393.3,80.5 388.4,77.1 381.2,72.7 380.6,72.3 372.8,67.9 365.6,64.9 365,64.6 357.2,61.5 349.4,59.3 341.6,57.6 338.4,57.1 333.8,56.1 326,54.7 318.2,53.6 310.3,52.7 302.5,52 294.7,51.4 286.9,51 279.1,50.7 271.3,50.5 263.5,50.5 255.7,50.5 247.9,50.7 240.1,51 232.3,51.4 224.5,52 216.7,52.7 208.8,53.6 201,54.7 193.2,56.1 188.6,57.1 185.4,57.6 177.6,59.3 169.8,61.5 162,64.6 161.4,64.9 154.2,67.9 146.4,72.3 145.8,72.7 138.6,77.1 133.7,80.5 130.8,82.6 123.5,88.3 123,88.8 115.2,95.4 114.3,96.2 107.4,102.6 106,104 99.5,110.6 98.4,111.8 91.7,119.4 91.6,119.6 85.2,127.4 83.9,129.1 79.4,135.2 76.1,140.3 74.3,143.1 69.8,150.9 68.3,154.1 66,158.7 62.8,166.5 60.5,174.3 58.2,182.1 56.4,190 54.9,197.8 53.7,205.6 52.7,212.6 52.6,213.4 51.4,221.2 50.4,229 49.5,236.9 48.7,244.7 48.1,252.5 47.5,260.3 47,268.1 46.5,276 46.1,283.8 45.8,291.6 45.5,299.4 45.2,307.2 45,315 44.9,317.4 44.7,322.9 44.5,330.7 44.3,338.5 44.1,346.3 44,354.1 43.9,361.9 43.8,369.8 43.7,377.6 43.7,385.4 43.6,393.2 43.6,401 43.6,408.9 43.6,416.7 43.6,424.5 43.7,432.3 43.7,440.1 43.8,447.9 43.9,455.8 44,463.6 44.1,471.4 44.3,479.2 44.5,487 44.7,494.8 44.9,500.3 45,502.7 45.2,510.5 45.5,518.3 45.8,526.1 46.1,533.9 46.5,541.7 47,549.6 47.5,557.4 48.1,565.2 48.7,573 49.5,580.8 50.4,588.7 51.4,596.5 52.6,604.3 52.7,605.1 53.7,612.1 54.9,619.9 56.4,627.7 58.2,635.6 60.5,643.4 62.8,651.2 66,659 68.3,663.6 69.8,666.8 74.3,674.6 76.1,677.4 79.4,682.5 83.9,688.6 85.2,690.3 91.6,698.1 91.7,698.3 98.4,705.9 99.5,707.1 106,713.7 107.4,715.1 114.3,721.5 115.2,722.3 123,728.9 123.5,729.4 130.8,735.1 133.7,737.2 138.6,740.6 145.8,745 146.4,745.4 154.2,749.8 161.4,752.8 162,753.1 169.8,756.2 177.6,758.4 185.4,760.1Z"/><path fill="#438efd" d="M224.9,752.8 232.3,753.3 240.1,753.7 247.9,754 255.7,754.2 263.5,754.3 271.3,754.2 279.1,754 286.9,753.7 294.7,753.3 302.1,752.8 302.5,752.8 310.3,752.2 318.2,751.5 326,750.7 333.8,749.6 341.6,748.2 349.4,746.4 353.7,745 357.2,744 365,741 372.2,737.2 372.8,736.9 380.6,732.2 384.5,729.4 388.4,726.6 394.7,721.5 396.2,720.3 403.8,713.7 404,713.5 411.8,706.2 412.1,705.9 419.6,698.1 419.7,698.1 426.7,690.3 427.5,689.4 433.2,682.5 435.3,679.7 439.1,674.6 443.1,668.4 444.1,666.8 448.4,659 450.9,653.1 451.8,651.2 454.5,643.4 456.4,635.6 457.9,627.7 458.7,622.8 459.2,619.9 460.5,612.1 461.5,604.3 462.4,596.5 463.2,588.7 463.8,580.8 464.4,573 464.9,565.2 465.3,557.4 465.7,549.6 466.1,541.7 466.4,533.9 466.5,530.1 466.7,526.1 466.9,518.3 467.2,510.5 467.4,502.7 467.6,494.8 467.8,487 467.9,479.2 468,471.4 468.1,463.6 468.2,455.8 468.3,447.9 468.4,440.1 468.4,432.3 468.4,424.5 468.5,416.7 468.5,408.9 468.5,401 468.4,393.2 468.4,385.4 468.4,377.6 468.3,369.8 468.2,361.9 468.1,354.1 468,346.3 467.9,338.5 467.8,330.7 467.6,322.9 467.4,315 467.2,307.2 466.9,299.4 466.7,291.6 466.5,287.6 466.4,283.8 466.1,276 465.7,268.1 465.3,260.3 464.9,252.5 464.4,244.7 463.8,236.9 463.2,229 462.4,221.2 461.5,213.4 460.5,205.6 459.2,197.8 458.7,194.9 457.9,190 456.4,182.1 454.5,174.3 451.8,166.5 450.9,164.6 448.4,158.7 444.1,150.9 443.1,149.3 439.1,143.1 435.3,138 433.2,135.2 427.5,128.3 426.7,127.4 419.7,119.6 419.6,119.6 412.1,111.8 411.8,111.5 404,104.2 403.8,104 396.2,97.4 394.7,96.2 388.4,91.1 384.5,88.3 380.6,85.5 372.8,80.8 372.2,80.5 365,76.7 357.2,73.7 353.7,72.7 349.4,71.3 341.6,69.5 333.8,68.1 326,67 318.2,66.2 310.3,65.5 302.5,64.9 302.1,64.9 294.7,64.4 286.9,64 279.1,63.7 271.3,63.5 263.5,63.4 255.7,63.5 247.9,63.7 240.1,64 232.3,64.4 224.9,64.9 224.5,64.9 216.7,65.5 208.8,66.2 201,67 193.2,68.1 185.4,69.5 177.6,71.3 173.3,72.7 169.8,73.7 162,76.7 154.8,80.5 154.2,80.8 146.4,85.5 142.5,88.3 138.6,91.1 132.3,96.2 130.8,97.4 123.2,104 123,104.2 115.2,111.5 114.9,111.8 107.4,119.6 107.3,119.6 100.3,127.4 99.5,128.3 93.8,135.2 91.7,138 87.9,143.1 83.9,149.3 82.9,150.9 78.6,158.7 76.1,164.6 75.2,166.5 72.5,174.3 70.6,182.1 69.1,190 68.3,194.9 67.8,197.8 66.5,205.6 65.5,213.4 64.6,221.2 63.8,229 63.2,236.9 62.6,244.7 62.1,252.5 61.7,260.3 61.3,268.1 60.9,276 60.6,283.8 60.5,287.6 60.3,291.6 60.1,299.4 59.8,307.2 59.6,315 59.4,322.9 59.2,330.7 59.1,338.5 59,346.3 58.9,354.1 58.8,361.9 58.7,369.8 58.6,377.6 58.6,385.4 58.6,393.2 58.5,401 58.5,408.9 58.5,416.7 58.6,424.5 58.6,432.3 58.6,440.1 58.7,447.9 58.8,455.8 58.9,463.6 59,471.4 59.1,479.2 59.2,487 59.4,494.8 59.6,502.7 59.8,510.5 60.1,518.3 60.3,526.1 60.5,530.1 60.6,533.9 60.9,541.7 61.3,549.6 61.7,557.4 62.1,565.2 62.6,573 63.2,580.8 63.8,588.7 64.6,596.5 65.5,604.3 66.5,612.1 67.8,619.9 68.3,622.8 69.1,627.7 70.6,635.6 72.5,643.4 75.2,651.2 76.1,653.1 78.6,659 82.9,666.8 83.9,668.4 87.9,674.6 91.7,679.7 93.8,682.5 99.5,689.4 100.3,690.3 107.3,698.1 107.4,698.1 114.9,705.9 115.2,706.2 123,713.5 123.2,713.7 130.8,720.3 132.3,721.5 138.6,726.6 142.5,729.4 146.4,732.2 154.2,736.9 154.8,737.2 162,741 169.8,744 173.3,745 177.6,746.4 185.4,748.2 193.2,749.6 201,750.7 208.8,751.5 216.7,752.2 224.5,752.8Z"/><path fill="#3e9bfe" d="M178.1,737.2 185.4,739 193.2,740.4 201,741.4 208.8,742.3 216.7,743 224.5,743.5 232.3,743.9 240.1,744.3 247.9,744.5 255.7,744.6 263.5,744.7 271.3,744.6 279.1,744.5 286.9,744.3 294.7,743.9 302.5,743.5 310.3,743 318.2,742.3 326,741.4 333.8,740.4 341.6,739 348.9,737.2 349.4,737.1 357.2,734.7 365,731.4 368.6,729.4 372.8,727 380.6,721.7 380.8,721.5 388.4,715.8 390.9,713.7 396.2,709.2 399.8,705.9 404,701.9 407.9,698.1 411.8,694.1 415.4,690.3 419.6,685.5 422.3,682.5 427.5,675.9 428.5,674.6 434,666.8 435.3,664.7 438.7,659 442.3,651.2 443.1,648.9 445.1,643.4 447.1,635.6 448.7,627.7 449.9,619.9 450.9,612.1 450.9,612 451.8,604.3 452.7,596.5 453.4,588.7 454,580.8 454.5,573 455,565.2 455.4,557.4 455.7,549.6 456,541.7 456.3,533.9 456.5,526.1 456.7,518.3 456.9,510.5 457.1,502.7 457.2,494.8 457.3,487 457.4,479.2 457.5,471.4 457.6,463.6 457.7,455.8 457.7,447.9 457.8,440.1 457.8,432.3 457.8,424.5 457.8,416.7 457.8,408.9 457.8,401 457.8,393.2 457.8,385.4 457.8,377.6 457.7,369.8 457.7,361.9 457.6,354.1 457.5,346.3 457.4,338.5 457.3,330.7 457.2,322.9 457.1,315 456.9,307.2 456.7,299.4 456.5,291.6 456.3,283.8 456,276 455.7,268.1 455.4,260.3 455,252.5 454.5,244.7 454,236.9 453.4,229 452.7,221.2 451.8,213.4 450.9,205.7 450.9,205.6 449.9,197.8 448.7,190 447.1,182.1 445.1,174.3 443.1,168.8 442.3,166.5 438.7,158.7 435.3,153 434,150.9 428.5,143.1 427.5,141.8 422.3,135.2 419.6,132.2 415.4,127.4 411.8,123.6 407.9,119.6 404,115.8 399.8,111.8 396.2,108.5 390.9,104 388.4,101.9 380.8,96.2 380.6,96 372.8,90.7 368.6,88.3 365,86.3 357.2,83 349.4,80.6 348.9,80.5 341.6,78.7 333.8,77.3 326,76.3 318.2,75.4 310.3,74.7 302.5,74.2 294.7,73.8 286.9,73.4 279.1,73.2 271.3,73.1 263.5,73 255.7,73.1 247.9,73.2 240.1,73.4 232.3,73.8 224.5,74.2 216.7,74.7 208.8,75.4 201,76.3 193.2,77.3 185.4,78.7 178.1,80.5 177.6,80.6 169.8,83 162,86.3 158.4,88.3 154.2,90.7 146.4,96 146.2,96.2 138.6,101.9 136.1,104 130.8,108.5 127.2,111.8 123,115.8 119.1,119.6 115.2,123.6 111.6,127.4 107.4,132.2 104.7,135.2 99.5,141.8 98.5,143.1 93,150.9 91.7,153 88.3,158.7 84.7,166.5 83.9,168.8 81.9,174.3 79.9,182.1 78.3,190 77.1,197.8 76.1,205.6 76.1,205.7 75.2,213.4 74.3,221.2 73.6,229 73,236.9 72.5,244.7 72,252.5 71.6,260.3 71.3,268.1 71,276 70.7,283.8 70.5,291.6 70.3,299.4 70.1,307.2 69.9,315 69.8,322.9 69.7,330.7 69.6,338.5 69.5,346.3 69.4,354.1 69.3,361.9 69.3,369.8 69.2,377.6 69.2,385.4 69.2,393.2 69.2,401 69.2,408.9 69.2,416.7 69.2,424.5 69.2,432.3 69.2,440.1 69.3,447.9 69.3,455.8 69.4,463.6 69.5,471.4 69.6,479.2 69.7,487 69.8,494.8 69.9,502.7 70.1,510.5 70.3,518.3 70.5,526.1 70.7,533.9 71,541.7 71.3,549.6 71.6,557.4 72,565.2 72.5,573 73,580.8 73.6,588.7 74.3,596.5 75.2,604.3 76.1,612 76.1,612.1 77.1,619.9 78.3,627.7 79.9,635.6 81.9,643.4 83.9,648.9 84.7,651.2 88.3,659 91.7,664.7 93,666.8 98.5,674.6 99.5,675.9 104.7,682.5 107.4,685.5 111.6,690.3 115.2,694.1 119.1,698.1 123,701.9 127.2,705.9 130.8,709.2 136.1,713.7 138.6,715.8 146.2,721.5 146.4,721.7 154.2,727 158.4,729.4 162,731.4 169.8,734.7 177.6,737.1Z"/><path fill="#36a8f9" d="M178.8,729.4 185.4,731 193.2,732.4 201,733.5 208.8,734.4 216.7,735.1 224.5,735.6 232.3,736 240.1,736.4 247.9,736.6 255.7,736.7 263.5,736.8 271.3,736.7 279.1,736.6 286.9,736.4 294.7,736 302.5,735.6 310.3,735.1 318.2,734.4 326,733.5 333.8,732.4 341.6,731 348.2,729.4 349.4,729.1 357.2,726.5 365,723 367.4,721.5 372.8,718.4 379.3,713.7 380.6,712.8 388.4,706.5 389.1,705.9 396.2,699.6 397.8,698.1 404,692 405.7,690.3 411.8,683.6 412.9,682.5 419.4,674.6 419.6,674.3 425.2,666.8 427.5,663.3 430.2,659 434,651.2 435.3,647.8 436.9,643.4 439.1,635.6 440.7,627.7 441.9,619.9 442.9,612.1 443.1,610.7 443.8,604.3 444.6,596.5 445.3,588.7 445.9,580.8 446.4,573 446.8,565.2 447.2,557.4 447.5,549.6 447.8,541.7 448.1,533.9 448.3,526.1 448.5,518.3 448.6,510.5 448.8,502.7 448.9,494.8 449,487 449.1,479.2 449.2,471.4 449.3,463.6 449.3,455.8 449.4,447.9 449.5,440.1 449.5,432.3 449.5,424.5 449.6,416.7 449.6,408.9 449.6,401 449.5,393.2 449.5,385.4 449.5,377.6 449.4,369.8 449.3,361.9 449.3,354.1 449.2,346.3 449.1,338.5 449,330.7 448.9,322.9 448.8,315 448.6,307.2 448.5,299.4 448.3,291.6 448.1,283.8 447.8,276 447.5,268.1 447.2,260.3 446.8,252.5 446.4,244.7 445.9,236.9 445.3,229 444.6,221.2 443.8,213.4 443.1,207 442.9,205.6 441.9,197.8 440.7,190 439.1,182.1 436.9,174.3 435.3,169.9 434,166.5 430.2,158.7 427.5,154.4 425.2,150.9 419.6,143.4 419.4,143.1 412.9,135.2 411.8,134.1 405.7,127.4 404,125.7 397.8,119.6 396.2,118.1 389.1,111.8 388.4,111.2 380.6,104.9 379.3,104 372.8,99.3 367.4,96.2 365,94.7 357.2,91.2 349.4,88.6 348.2,88.3 341.6,86.7 333.8,85.3 326,84.2 318.2,83.3 310.3,82.6 302.5,82.1 294.7,81.7 286.9,81.3 279.1,81.1 271.3,81 263.5,80.9 255.7,81 247.9,81.1 240.1,81.3 232.3,81.7 224.5,82.1 216.7,82.6 208.8,83.3 201,84.2 193.2,85.3 185.4,86.7 178.8,88.3 177.6,88.6 169.8,91.2 162,94.7 159.6,96.2 154.2,99.3 147.7,104 146.4,104.9 138.6,111.2 137.9,111.8 130.8,118.1 129.2,119.6 123,125.7 121.3,127.4 115.2,134.1 114.1,135.2 107.6,143.1 107.4,143.4 101.8,150.9 99.5,154.4 96.8,158.7 93,166.5 91.7,169.9 90.1,174.3 87.9,182.1 86.3,190 85.1,197.8 84.1,205.6 83.9,207 83.2,213.4 82.4,221.2 81.7,229 81.1,236.9 80.6,244.7 80.2,252.5 79.8,260.3 79.5,268.1 79.2,276 78.9,283.8 78.7,291.6 78.5,299.4 78.4,307.2 78.2,315 78.1,322.9 78,330.7 77.9,338.5 77.8,346.3 77.7,354.1 77.7,361.9 77.6,369.8 77.5,377.6 77.5,385.4 77.5,393.2 77.4,401 77.4,408.9 77.4,416.7 77.5,424.5 77.5,432.3 77.5,440.1 77.6,447.9 77.7,455.8 77.7,463.6 77.8,471.4 77.9,479.2 78,487 78.1,494.8 78.2,502.7 78.4,510.5 78.5,518.3 78.7,526.1 78.9,533.9 79.2,541.7 79.5,549.6 79.8,557.4 80.2,565.2 80.6,573 81.1,580.8 81.7,588.7 82.4,596.5 83.2,604.3 83.9,610.7 84.1,612.1 85.1,619.9 86.3,627.7 87.9,635.6 90.1,643.4 91.7,647.8 93,651.2 96.8,659 99.5,663.3 101.8,666.8 107.4,674.3 107.6,674.6 114.1,682.5 115.2,683.6 121.3,690.3 123,692 129.2,698.1 130.8,699.6 137.9,705.9 138.6,706.5 146.4,712.8 147.7,713.7 154.2,718.4 159.6,721.5 162,723 169.8,726.5 177.6,729.1Z"/><path fill="#2db4f1" d="M246.2,729.4 247.9,729.4 255.7,729.6 263.5,729.6 271.3,729.6 279.1,729.4 280.8,729.4 286.9,729.2 294.7,728.9 302.5,728.4 310.3,727.9 318.2,727.2 326,726.3 333.8,725.1 341.6,723.7 349.4,721.6 349.7,721.5 357.2,718.9 365,715.2 367.4,713.7 372.8,710.4 378.9,705.9 380.6,704.6 388.4,698.1 396.2,690.8 396.7,690.3 404,682.7 404.3,682.5 411.1,674.6 411.8,673.7 417.2,666.8 419.6,663.1 422.3,659 426.4,651.2 427.5,648.4 429.4,643.4 431.7,635.6 433.3,627.7 434.6,619.9 435.3,615.2 435.7,612.1 436.6,604.3 437.4,596.5 438.1,588.7 438.6,580.8 439.1,573 439.5,565.2 439.9,557.4 440.2,549.6 440.5,541.7 440.8,533.9 441,526.1 441.2,518.3 441.3,510.5 441.5,502.7 441.6,494.8 441.7,487 441.8,479.2 441.9,471.4 442,463.6 442.1,455.8 442.2,447.9 442.3,440.1 442.3,432.3 442.4,424.5 442.4,416.7 442.4,408.9 442.4,401 442.4,393.2 442.3,385.4 442.3,377.6 442.2,369.8 442.1,361.9 442,354.1 441.9,346.3 441.8,338.5 441.7,330.7 441.6,322.9 441.5,315 441.3,307.2 441.2,299.4 441,291.6 440.8,283.8 440.5,276 440.2,268.1 439.9,260.3 439.5,252.5 439.1,244.7 438.6,236.9 438.1,229 437.4,221.2 436.6,213.4 435.7,205.6 435.3,202.5 434.6,197.8 433.3,190 431.7,182.1 429.4,174.3 427.5,169.3 426.4,166.5 422.3,158.7 419.6,154.6 417.2,150.9 411.8,144 411.1,143.1 404.3,135.2 404,135 396.7,127.4 396.2,126.9 388.4,119.6 380.6,113.1 378.9,111.8 372.8,107.3 367.4,104 365,102.5 357.2,98.8 349.7,96.2 349.4,96.1 341.6,94 333.8,92.6 326,91.4 318.2,90.5 310.3,89.8 302.5,89.3 294.7,88.8 286.9,88.5 280.8,88.3 279.1,88.3 271.3,88.1 263.5,88.1 255.7,88.1 247.9,88.3 246.2,88.3 240.1,88.5 232.3,88.8 224.5,89.3 216.7,89.8 208.8,90.5 201,91.4 193.2,92.6 185.4,94 177.6,96.1 177.3,96.2 169.8,98.8 162,102.5 159.6,104 154.2,107.3 148.1,111.8 146.4,113.1 138.6,119.6 130.8,126.9 130.3,127.4 123,135 122.7,135.2 115.9,143.1 115.2,144 109.8,150.9 107.4,154.6 104.7,158.7 100.6,166.5 99.5,169.3 97.6,174.3 95.3,182.1 93.7,190 92.4,197.8 91.7,202.5 91.3,205.6 90.4,213.4 89.6,221.2 88.9,229 88.4,236.9 87.9,244.7 87.5,252.5 87.1,260.3 86.8,268.1 86.5,276 86.2,283.8 86,291.6 85.8,299.4 85.7,307.2 85.5,315 85.4,322.9 85.3,330.7 85.2,338.5 85.1,346.3 85,354.1 84.9,361.9 84.8,369.8 84.7,377.6 84.7,385.4 84.6,393.2 84.6,401 84.6,408.9 84.6,416.7 84.6,424.5 84.7,432.3 84.7,440.1 84.8,447.9 84.9,455.8 85,463.6 85.1,471.4 85.2,479.2 85.3,487 85.4,494.8 85.5,502.7 85.7,510.5 85.8,518.3 86,526.1 86.2,533.9 86.5,541.7 86.8,549.6 87.1,557.4 87.5,565.2 87.9,573 88.4,580.8 88.9,588.7 89.6,596.5 90.4,604.3 91.3,612.1 91.7,615.2 92.4,619.9 93.7,627.7 95.3,635.6 97.6,643.4 99.5,648.4 100.6,651.2 104.7,659 107.4,663.1 109.8,666.8 115.2,673.7 115.9,674.6 122.7,682.5 123,682.7 130.3,690.3 130.8,690.8 138.6,698.1 146.4,704.6 148.1,705.9 154.2,710.4 159.6,713.7 162,715.2 169.8,718.9 177.3,721.5 177.6,721.6 185.4,723.7 193.2,725.1 201,726.3 208.8,727.2 216.7,727.9 224.5,728.4 232.3,728.9 240.1,729.2Z"/><path fill="#25c0e6" d="M223.5,721.5 224.5,721.6 232.3,722.1 240.1,722.4 247.9,722.7 255.7,722.8 263.5,722.9 271.3,722.8 279.1,722.7 286.9,722.4 294.7,722.1 302.5,721.6 303.5,721.5 310.3,721 318.2,720.3 326,719.4 333.8,718.2 341.6,716.6 349.4,714.5 351.6,713.7 357.2,711.7 365,707.8 368,705.9 372.8,702.8 379,698.1 380.6,696.8 388.1,690.3 388.4,690 396.1,682.5 396.2,682.3 403.2,674.6 404,673.6 409.5,666.8 411.8,663.4 414.8,659 419.1,651.2 419.6,649.8 422.3,643.4 424.6,635.6 426.3,627.7 427.5,621.4 427.7,619.9 428.8,612.1 429.8,604.3 430.6,596.5 431.2,588.7 431.8,580.8 432.3,573 432.8,565.2 433.1,557.4 433.5,549.6 433.7,541.7 434,533.9 434.2,526.1 434.4,518.3 434.5,510.5 434.7,502.7 434.8,494.8 434.9,487 435.1,479.2 435.2,471.4 435.3,467.8 435.3,463.6 435.5,455.8 435.6,447.9 435.7,440.1 435.7,432.3 435.8,424.5 435.8,416.7 435.9,408.9 435.8,401 435.8,393.2 435.7,385.4 435.7,377.6 435.6,369.8 435.5,361.9 435.3,354.1 435.3,349.9 435.2,346.3 435.1,338.5 434.9,330.7 434.8,322.9 434.7,315 434.5,307.2 434.4,299.4 434.2,291.6 434,283.8 433.7,276 433.5,268.1 433.1,260.3 432.8,252.5 432.3,244.7 431.8,236.9 431.2,229 430.6,221.2 429.8,213.4 428.8,205.6 427.7,197.8 427.5,196.3 426.3,190 424.6,182.1 422.3,174.3 419.6,167.9 419.1,166.5 414.8,158.7 411.8,154.3 409.5,150.9 404,144.1 403.2,143.1 396.2,135.4 396.1,135.2 388.4,127.7 388.1,127.4 380.6,120.9 379,119.6 372.8,114.9 368,111.8 365,109.9 357.2,106 351.6,104 349.4,103.2 341.6,101.1 333.8,99.5 326,98.3 318.2,97.4 310.3,96.7 303.5,96.2 302.5,96.1 294.7,95.6 286.9,95.3 279.1,95 271.3,94.9 263.5,94.8 255.7,94.9 247.9,95 240.1,95.3 232.3,95.6 224.5,96.1 223.5,96.2 216.7,96.7 208.8,97.4 201,98.3 193.2,99.5 185.4,101.1 177.6,103.2 175.4,104 169.8,106 162,109.9 159,111.8 154.2,114.9 148,119.6 146.4,120.9 138.9,127.4 138.6,127.7 130.9,135.2 130.8,135.4 123.8,143.1 123,144.1 117.5,150.9 115.2,154.3 112.2,158.7 107.9,166.5 107.4,167.9 104.7,174.3 102.4,182.1 100.7,190 99.5,196.3 99.3,197.8 98.2,205.6 97.2,213.4 96.4,221.2 95.8,229 95.2,236.9 94.7,244.7 94.2,252.5 93.9,260.3 93.5,268.1 93.3,276 93,283.8 92.8,291.6 92.6,299.4 92.5,307.2 92.3,315 92.2,322.9 92.1,330.7 91.9,338.5 91.8,346.3 91.7,349.9 91.7,354.1 91.5,361.9 91.4,369.8 91.3,377.6 91.3,385.4 91.2,393.2 91.2,401 91.1,408.9 91.2,416.7 91.2,424.5 91.3,432.3 91.3,440.1 91.4,447.9 91.5,455.8 91.7,463.6 91.7,467.8 91.8,471.4 91.9,479.2 92.1,487 92.2,494.8 92.3,502.7 92.5,510.5 92.6,518.3 92.8,526.1 93,533.9 93.3,541.7 93.5,549.6 93.9,557.4 94.2,565.2 94.7,573 95.2,580.8 95.8,588.7 96.4,596.5 97.2,604.3 98.2,612.1 99.3,619.9 99.5,621.4 100.7,627.7 102.4,635.6 104.7,643.4 107.4,649.8 107.9,651.2 112.2,659 115.2,663.4 117.5,666.8 123,673.6 123.8,674.6 130.8,682.3 130.9,682.5 138.6,690 138.9,690.3 146.4,696.8 148,698.1 154.2,702.8 159,705.9 162,707.8 169.8,711.7 175.4,713.7 177.6,714.5 185.4,716.6 193.2,718.2 201,719.4 208.8,720.3 216.7,721Z"/><path fill="#1dcbda" d="M209.7,713.7 216.7,714.4 224.5,715.1 232.3,715.5 240.1,715.9 247.9,716.2 255.7,716.3 263.5,716.4 271.3,716.3 279.1,716.2 286.9,715.9 294.7,715.5 302.5,715.1 310.3,714.4 317.3,713.7 318.2,713.6 326,712.7 333.8,711.4 341.6,709.8 349.4,707.6 353.8,705.9 357.2,704.6 365,700.6 368.8,698.1 372.8,695.4 379.2,690.3 380.6,689.1 387.9,682.5 388.4,681.9 395.4,674.6 396.2,673.7 402,666.8 404,664 407.5,659 411.8,651.4 411.9,651.2 415.3,643.4 417.7,635.6 419.6,627.7 419.6,627.2 421,619.9 422.2,612.1 423.2,604.3 424,596.5 424.7,588.7 425.3,580.8 425.8,573 426.2,565.2 426.6,557.4 426.9,549.6 427.2,541.7 427.5,534.7 427.5,533.9 427.7,526.1 427.9,518.3 428.1,510.5 428.2,502.7 428.4,494.8 428.6,487 428.7,479.2 428.9,471.4 429.1,463.6 429.2,455.8 429.3,447.9 429.5,440.1 429.5,432.3 429.6,424.5 429.7,416.7 429.7,408.9 429.7,401 429.6,393.2 429.5,385.4 429.5,377.6 429.3,369.8 429.2,361.9 429.1,354.1 428.9,346.3 428.7,338.5 428.6,330.7 428.4,322.9 428.2,315 428.1,307.2 427.9,299.4 427.7,291.6 427.5,283.8 427.5,283 427.2,276 426.9,268.1 426.6,260.3 426.2,252.5 425.8,244.7 425.3,236.9 424.7,229 424,221.2 423.2,213.4 422.2,205.6 421,197.8 419.6,190.5 419.6,190 417.7,182.1 415.3,174.3 411.9,166.5 411.8,166.3 407.5,158.7 404,153.7 402,150.9 396.2,144 395.4,143.1 388.4,135.8 387.9,135.2 380.6,128.6 379.2,127.4 372.8,122.3 368.8,119.6 365,117.1 357.2,113.1 353.8,111.8 349.4,110.1 341.6,107.9 333.8,106.3 326,105 318.2,104.1 317.3,104 310.3,103.3 302.5,102.6 294.7,102.2 286.9,101.8 279.1,101.5 271.3,101.4 263.5,101.3 255.7,101.4 247.9,101.5 240.1,101.8 232.3,102.2 224.5,102.6 216.7,103.3 209.7,104 208.8,104.1 201,105 193.2,106.3 185.4,107.9 177.6,110.1 173.2,111.8 169.8,113.1 162,117.1 158.2,119.6 154.2,122.3 147.8,127.4 146.4,128.6 139.1,135.2 138.6,135.8 131.6,143.1 130.8,144 125,150.9 123,153.7 119.5,158.7 115.2,166.3 115.1,166.5 111.7,174.3 109.3,182.1 107.4,190 107.4,190.5 106,197.8 104.8,205.6 103.8,213.4 103,221.2 102.3,229 101.7,236.9 101.2,244.7 100.8,252.5 100.4,260.3 100.1,268.1 99.8,276 99.5,283 99.5,283.8 99.3,291.6 99.1,299.4 98.9,307.2 98.8,315 98.6,322.9 98.4,330.7 98.3,338.5 98.1,346.3 97.9,354.1 97.8,361.9 97.7,369.8 97.5,377.6 97.5,385.4 97.4,393.2 97.3,401 97.3,408.9 97.3,416.7 97.4,424.5 97.5,432.3 97.5,440.1 97.7,447.9 97.8,455.8 97.9,463.6 98.1,471.4 98.3,479.2 98.4,487 98.6,494.8 98.8,502.7 98.9,510.5 99.1,518.3 99.3,526.1 99.5,533.9 99.5,534.7 99.8,541.7 100.1,549.6 100.4,557.4 100.8,565.2 101.2,573 101.7,580.8 102.3,588.7 103,596.5 103.8,604.3 104.8,612.1 106,619.9 107.4,627.2 107.4,627.7 109.3,635.6 111.7,643.4 115.1,651.2 115.2,651.4 119.5,659 123,664 125,666.8 130.8,673.7 131.6,674.6 138.6,681.9 139.1,682.5 146.4,689.1 147.8,690.3 154.2,695.4 158.2,698.1 162,700.6 169.8,704.6 173.2,705.9 177.6,707.6 185.4,709.8 193.2,711.4 201,712.7 208.8,713.6Z"/><path fill="#18d5cc" d="M200.1,705.9 201,706.1 208.8,707.1 216.7,707.9 224.5,708.6 232.3,709.1 240.1,709.5 247.9,709.7 255.7,709.9 263.5,709.9 271.3,709.9 279.1,709.7 286.9,709.5 294.7,709.1 302.5,708.6 310.3,707.9 318.2,707.1 326,706.1 326.9,705.9 333.8,704.7 341.6,703 349.4,700.7 356,698.1 357.2,697.6 365,693.4 369.5,690.3 372.8,688 379.4,682.5 380.6,681.4 387.6,674.6 388.4,673.7 394.5,666.8 396.2,664.5 400.3,659 404,652.7 404.9,651.2 408.3,643.4 410.9,635.6 411.8,631.9 412.9,627.7 414.4,619.9 415.6,612.1 416.6,604.3 417.5,596.5 418.2,588.7 418.8,580.8 419.4,573 419.6,568.5 419.8,565.2 420.3,557.4 420.6,549.6 420.9,541.7 421.2,533.9 421.4,526.1 421.6,518.3 421.8,510.5 422,502.7 422.2,494.8 422.4,487 422.6,479.2 422.8,471.4 423,463.6 423.2,455.8 423.4,447.9 423.6,440.1 423.8,432.3 424,424.5 424.1,416.7 424.1,408.9 424.1,401 424,393.2 423.8,385.4 423.6,377.6 423.4,369.8 423.2,361.9 423,354.1 422.8,346.3 422.6,338.5 422.4,330.7 422.2,322.9 422,315 421.8,307.2 421.6,299.4 421.4,291.6 421.2,283.8 420.9,276 420.6,268.1 420.3,260.3 419.8,252.5 419.6,249.2 419.4,244.7 418.8,236.9 418.2,229 417.5,221.2 416.6,213.4 415.6,205.6 414.4,197.8 412.9,190 411.8,185.8 410.9,182.1 408.3,174.3 404.9,166.5 404,165 400.3,158.7 396.2,153.2 394.5,150.9 388.4,144 387.6,143.1 380.6,136.3 379.4,135.2 372.8,129.7 369.5,127.4 365,124.3 357.2,120.1 356,119.6 349.4,117 341.6,114.7 333.8,113 326.9,111.8 326,111.6 318.2,110.6 310.3,109.8 302.5,109.1 294.7,108.6 286.9,108.2 279.1,108 271.3,107.8 263.5,107.8 255.7,107.8 247.9,108 240.1,108.2 232.3,108.6 224.5,109.1 216.7,109.8 208.8,110.6 201,111.6 200.1,111.8 193.2,113 185.4,114.7 177.6,117 171,119.6 169.8,120.1 162,124.3 157.5,127.4 154.2,129.7 147.6,135.2 146.4,136.3 139.4,143.1 138.6,144 132.5,150.9 130.8,153.2 126.7,158.7 123,165 122.1,166.5 118.7,174.3 116.1,182.1 115.2,185.8 114.1,190 112.6,197.8 111.4,205.6 110.4,213.4 109.5,221.2 108.8,229 108.2,236.9 107.6,244.7 107.4,249.2 107.2,252.5 106.7,260.3 106.4,268.1 106.1,276 105.8,283.8 105.6,291.6 105.4,299.4 105.2,307.2 105,315 104.8,322.9 104.6,330.7 104.4,338.5 104.2,346.3 104,354.1 103.8,361.9 103.6,369.8 103.4,377.6 103.2,385.4 103,393.2 102.9,401 102.9,408.9 102.9,416.7 103,424.5 103.2,432.3 103.4,440.1 103.6,447.9 103.8,455.8 104,463.6 104.2,471.4 104.4,479.2 104.6,487 104.8,494.8 105,502.7 105.2,510.5 105.4,518.3 105.6,526.1 105.8,533.9 106.1,541.7 106.4,549.6 106.7,557.4 107.2,565.2 107.4,568.5 107.6,573 108.2,580.8 108.8,588.7 109.5,596.5 110.4,604.3 111.4,612.1 112.6,619.9 114.1,627.7 115.2,631.9 116.1,635.6 118.7,643.4 122.1,651.2 123,652.7 126.7,659 130.8,664.5 132.5,666.8 138.6,673.7 139.4,674.6 146.4,681.4 147.6,682.5 154.2,688 157.5,690.3 162,693.4 169.8,697.6 171,698.1 177.6,700.7 185.4,703 193.2,704.7Z"/><path fill="#17debf" d="M193.2,698.1 201,699.5 208.8,700.6 216.7,701.5 224.5,702.2 232.3,702.7 240.1,703.1 247.9,703.4 255.7,703.5 263.5,703.6 271.3,703.5 279.1,703.4 286.9,703.1 294.7,702.7 302.5,702.2 310.3,701.5 318.2,700.6 326,699.5 333.8,698.1 341.6,696.3 349.4,693.9 357.2,690.6 357.8,690.3 365,686.1 370.1,682.5 372.8,680.5 379.4,674.6 380.6,673.5 386.8,666.8 388.4,664.9 393,659 396.2,653.8 397.8,651.2 401.4,643.4 404,635.9 404.1,635.6 406.2,627.7 407.8,619.9 409.1,612.1 410.2,604.3 411.1,596.5 411.8,588.7 412.5,580.8 413.1,573 413.5,565.2 414,557.4 414.3,549.6 414.6,541.7 414.9,533.9 415.2,526.1 415.4,518.3 415.6,510.5 415.9,502.7 416.1,494.8 416.3,487 416.6,479.2 416.9,471.4 417.2,463.6 417.5,455.8 417.8,447.9 418.2,440.1 418.4,432.3 418.6,424.5 418.8,416.7 418.8,408.9 418.8,401 418.6,393.2 418.4,385.4 418.2,377.6 417.8,369.8 417.5,361.9 417.2,354.1 416.9,346.3 416.6,338.5 416.3,330.7 416.1,322.9 415.9,315 415.6,307.2 415.4,299.4 415.2,291.6 414.9,283.8 414.6,276 414.3,268.1 414,260.3 413.5,252.5 413.1,244.7 412.5,236.9 411.8,229 411.1,221.2 410.2,213.4 409.1,205.6 407.8,197.8 406.2,190 404.1,182.1 404,181.8 401.4,174.3 397.8,166.5 396.2,163.9 393,158.7 388.4,152.8 386.8,150.9 380.6,144.2 379.4,143.1 372.8,137.2 370.1,135.2 365,131.6 357.8,127.4 357.2,127.1 349.4,123.8 341.6,121.4 333.8,119.6 326,118.2 318.2,117.1 310.3,116.2 302.5,115.5 294.7,115 286.9,114.6 279.1,114.3 271.3,114.2 263.5,114.1 255.7,114.2 247.9,114.3 240.1,114.6 232.3,115 224.5,115.5 216.7,116.2 208.8,117.1 201,118.2 193.2,119.6 185.4,121.4 177.6,123.8 169.8,127.1 169.2,127.4 162,131.6 156.9,135.2 154.2,137.2 147.6,143.1 146.4,144.2 140.2,150.9 138.6,152.8 134,158.7 130.8,163.9 129.2,166.5 125.6,174.3 123,181.8 122.9,182.1 120.8,190 119.2,197.8 117.9,205.6 116.8,213.4 115.9,221.2 115.2,229 114.5,236.9 113.9,244.7 113.5,252.5 113,260.3 112.7,268.1 112.4,276 112.1,283.8 111.8,291.6 111.6,299.4 111.4,307.2 111.1,315 110.9,322.9 110.7,330.7 110.4,338.5 110.1,346.3 109.8,354.1 109.5,361.9 109.2,369.8 108.8,377.6 108.6,385.4 108.4,393.2 108.2,401 108.2,408.9 108.2,416.7 108.4,424.5 108.6,432.3 108.8,440.1 109.2,447.9 109.5,455.8 109.8,463.6 110.1,471.4 110.4,479.2 110.7,487 110.9,494.8 111.1,502.7 111.4,510.5 111.6,518.3 111.8,526.1 112.1,533.9 112.4,541.7 112.7,549.6 113,557.4 113.5,565.2 113.9,573 114.5,580.8 115.2,588.7 115.9,596.5 116.8,604.3 117.9,612.1 119.2,619.9 120.8,627.7 122.9,635.6 123,635.9 125.6,643.4 129.2,651.2 130.8,653.8 134,659 138.6,664.9 140.2,666.8 146.4,673.5 147.6,674.6 154.2,680.5 156.9,682.5 162,686.1 169.2,690.3 169.8,690.6 177.6,693.9 185.4,696.3Z"/><path fill="#1de7b1" d="M188.5,690.3 193.2,691.4 201,692.9 208.8,694.1 216.7,695 224.5,695.7 232.3,696.3 240.1,696.7 247.9,697 255.7,697.2 263.5,697.2 271.3,697.2 279.1,697 286.9,696.7 294.7,696.3 302.5,695.7 310.3,695 318.2,694.1 326,692.9 333.8,691.4 338.5,690.3 341.6,689.5 349.4,686.9 357.2,683.5 358.9,682.5 365,678.8 370.4,674.6 372.8,672.7 378.8,666.8 380.6,664.9 385.5,659 388.4,654.6 390.6,651.2 394.4,643.4 396.2,638.6 397.3,635.6 399.5,627.7 401.2,619.9 402.6,612.1 403.7,604.3 404,601.6 404.7,596.5 405.5,588.7 406.2,580.8 406.7,573 407.2,565.2 407.7,557.4 408.1,549.6 408.4,541.7 408.7,533.9 409,526.1 409.2,518.3 409.5,510.5 409.8,502.7 410,494.8 410.3,487 410.7,479.2 411.1,471.4 411.6,463.6 411.8,460.5 412.2,455.8 412.6,447.9 413,440.1 413.4,432.3 413.6,424.5 413.8,416.7 413.8,408.9 413.8,401 413.6,393.2 413.4,385.4 413,377.6 412.6,369.8 412.2,361.9 411.8,357.2 411.6,354.1 411.1,346.3 410.7,338.5 410.3,330.7 410,322.9 409.8,315 409.5,307.2 409.2,299.4 409,291.6 408.7,283.8 408.4,276 408.1,268.1 407.7,260.3 407.2,252.5 406.7,244.7 406.2,236.9 405.5,229 404.7,221.2 404,216.1 403.7,213.4 402.6,205.6 401.2,197.8 399.5,190 397.3,182.1 396.2,179.1 394.4,174.3 390.6,166.5 388.4,163.1 385.5,158.7 380.6,152.8 378.8,150.9 372.8,145 370.4,143.1 365,138.9 358.9,135.2 357.2,134.2 349.4,130.8 341.6,128.2 338.5,127.4 333.8,126.3 326,124.8 318.2,123.6 310.3,122.7 302.5,122 294.7,121.4 286.9,121 279.1,120.7 271.3,120.5 263.5,120.5 255.7,120.5 247.9,120.7 240.1,121 232.3,121.4 224.5,122 216.7,122.7 208.8,123.6 201,124.8 193.2,126.3 188.5,127.4 185.4,128.2 177.6,130.8 169.8,134.2 168.1,135.2 162,138.9 156.6,143.1 154.2,145 148.2,150.9 146.4,152.8 141.5,158.7 138.6,163.1 136.4,166.5 132.6,174.3 130.8,179.1 129.7,182.1 127.5,190 125.8,197.8 124.4,205.6 123.3,213.4 123,216.1 122.3,221.2 121.5,229 120.8,236.9 120.3,244.7 119.8,252.5 119.3,260.3 118.9,268.1 118.6,276 118.3,283.8 118,291.6 117.8,299.4 117.5,307.2 117.2,315 117,322.9 116.7,330.7 116.3,338.5 115.9,346.3 115.4,354.1 115.2,357.2 114.8,361.9 114.4,369.8 114,377.6 113.6,385.4 113.4,393.2 113.2,401 113.2,408.9 113.2,416.7 113.4,424.5 113.6,432.3 114,440.1 114.4,447.9 114.8,455.8 115.2,460.5 115.4,463.6 115.9,471.4 116.3,479.2 116.7,487 117,494.8 117.2,502.7 117.5,510.5 117.8,518.3 118,526.1 118.3,533.9 118.6,541.7 118.9,549.6 119.3,557.4 119.8,565.2 120.3,573 120.8,580.8 121.5,588.7 122.3,596.5 123,601.6 123.3,604.3 124.4,612.1 125.8,619.9 127.5,627.7 129.7,635.6 130.8,638.6 132.6,643.4 136.4,651.2 138.6,654.6 141.5,659 146.4,664.9 148.2,666.8 154.2,672.7 156.6,674.6 162,678.8 168.1,682.5 169.8,683.5 177.6,686.9 185.4,689.5Z"/><path fill="#27eda3" d="M240,690.3 240.1,690.3 247.9,690.6 255.7,690.8 263.5,690.8 271.3,690.8 279.1,690.6 286.9,690.3 287,690.3 294.7,689.8 302.5,689.2 310.3,688.4 318.2,687.4 326,686.2 333.8,684.6 341.6,682.6 342,682.5 349.4,679.8 357.2,676.1 359.6,674.6 365,671 370.1,666.8 372.8,664.2 377.6,659 380.6,654.9 383.2,651.2 387.3,643.4 388.4,640.6 390.3,635.6 392.7,627.7 394.5,619.9 396,612.1 396.2,610.4 397.2,604.3 398.2,596.5 399,588.7 399.7,580.8 400.4,573 400.9,565.2 401.4,557.4 401.8,549.6 402.1,541.7 402.4,533.9 402.8,526.1 403.1,518.3 403.4,510.5 403.7,502.7 404,494.8 404,494.4 404.5,487 405.1,479.2 405.8,471.4 406.4,463.6 407,455.8 407.6,447.9 408.1,440.1 408.5,432.3 408.7,424.5 408.9,416.7 409,408.9 408.9,401 408.7,393.2 408.5,385.4 408.1,377.6 407.6,369.8 407,361.9 406.4,354.1 405.8,346.3 405.1,338.5 404.5,330.7 404,323.3 404,322.9 403.7,315 403.4,307.2 403.1,299.4 402.8,291.6 402.4,283.8 402.1,276 401.8,268.1 401.4,260.3 400.9,252.5 400.4,244.7 399.7,236.9 399,229 398.2,221.2 397.2,213.4 396.2,207.3 396,205.6 394.5,197.8 392.7,190 390.3,182.1 388.4,177.1 387.3,174.3 383.2,166.5 380.6,162.8 377.6,158.7 372.8,153.5 370.1,150.9 365,146.7 359.6,143.1 357.2,141.6 349.4,137.9 342,135.2 341.6,135.1 333.8,133.1 326,131.5 318.2,130.3 310.3,129.3 302.5,128.5 294.7,127.9 287,127.4 286.9,127.4 279.1,127.1 271.3,126.9 263.5,126.9 255.7,126.9 247.9,127.1 240.1,127.4 240,127.4 232.3,127.9 224.5,128.5 216.7,129.3 208.8,130.3 201,131.5 193.2,133.1 185.4,135.1 185,135.2 177.6,137.9 169.8,141.6 167.4,143.1 162,146.7 156.9,150.9 154.2,153.5 149.4,158.7 146.4,162.8 143.8,166.5 139.7,174.3 138.6,177.1 136.7,182.1 134.3,190 132.5,197.8 131,205.6 130.8,207.3 129.8,213.4 128.8,221.2 128,229 127.3,236.9 126.6,244.7 126.1,252.5 125.6,260.3 125.2,268.1 124.9,276 124.6,283.8 124.2,291.6 123.9,299.4 123.6,307.2 123.3,315 123,322.9 123,323.3 122.5,330.7 121.9,338.5 121.2,346.3 120.6,354.1 120,361.9 119.4,369.8 118.9,377.6 118.5,385.4 118.3,393.2 118.1,401 118,408.9 118.1,416.7 118.3,424.5 118.5,432.3 118.9,440.1 119.4,447.9 120,455.8 120.6,463.6 121.2,471.4 121.9,479.2 122.5,487 123,494.4 123,494.8 123.3,502.7 123.6,510.5 123.9,518.3 124.2,526.1 124.6,533.9 124.9,541.7 125.2,549.6 125.6,557.4 126.1,565.2 126.6,573 127.3,580.8 128,588.7 128.8,596.5 129.8,604.3 130.8,610.4 131,612.1 132.5,619.9 134.3,627.7 136.7,635.6 138.6,640.6 139.7,643.4 143.8,651.2 146.4,654.9 149.4,659 154.2,664.2 156.9,666.8 162,671 167.4,674.6 169.8,676.1 177.6,679.8 185,682.5 185.4,682.6 193.2,684.6 201,686.2 208.8,687.4 216.7,688.4 224.5,689.2 232.3,689.8Z"/><path fill="#35f394" d="M223.1,682.5 224.5,682.6 232.3,683.2 240.1,683.7 247.9,684 255.7,684.2 263.5,684.3 271.3,684.2 279.1,684 286.9,683.7 294.7,683.2 302.5,682.6 303.9,682.5 310.3,681.8 318.2,680.7 326,679.3 333.8,677.6 341.6,675.5 343.9,674.6 349.4,672.5 357.2,668.4 359.6,666.8 365,662.7 368.8,659 372.8,654.5 375.3,651.2 379.9,643.4 380.6,641.7 383.1,635.6 385.6,627.7 387.6,619.9 388.4,616 389.2,612.1 390.5,604.3 391.5,596.5 392.5,588.7 393.2,580.8 393.9,573 394.5,565.2 395,557.4 395.4,549.6 395.8,541.7 396.2,533.9 396.2,532.6 396.5,526.1 396.9,518.3 397.2,510.5 397.6,502.7 398.2,494.8 398.9,487 399.7,479.2 400.4,471.4 401.2,463.6 401.9,455.8 402.5,447.9 403.1,440.1 403.6,432.3 403.9,424.5 404,420.2 404.1,416.7 404.2,408.9 404.1,401 404,397.5 403.9,393.2 403.6,385.4 403.1,377.6 402.5,369.8 401.9,361.9 401.2,354.1 400.4,346.3 399.7,338.5 398.9,330.7 398.2,322.9 397.6,315 397.2,307.2 396.9,299.4 396.5,291.6 396.2,285.1 396.2,283.8 395.8,276 395.4,268.1 395,260.3 394.5,252.5 393.9,244.7 393.2,236.9 392.5,229 391.5,221.2 390.5,213.4 389.2,205.6 388.4,201.7 387.6,197.8 385.6,190 383.1,182.1 380.6,176 379.9,174.3 375.3,166.5 372.8,163.2 368.8,158.7 365,155 359.6,150.9 357.2,149.3 349.4,145.2 343.9,143.1 341.6,142.2 333.8,140.1 326,138.4 318.2,137 310.3,135.9 303.9,135.2 302.5,135.1 294.7,134.5 286.9,134 279.1,133.7 271.3,133.5 263.5,133.4 255.7,133.5 247.9,133.7 240.1,134 232.3,134.5 224.5,135.1 223.1,135.2 216.7,135.9 208.8,137 201,138.4 193.2,140.1 185.4,142.2 183.1,143.1 177.6,145.2 169.8,149.3 167.4,150.9 162,155 158.2,158.7 154.2,163.2 151.7,166.5 147.1,174.3 146.4,176 143.9,182.1 141.4,190 139.4,197.8 138.6,201.7 137.8,205.6 136.5,213.4 135.5,221.2 134.5,229 133.8,236.9 133.1,244.7 132.5,252.5 132,260.3 131.6,268.1 131.2,276 130.8,283.8 130.8,285.1 130.5,291.6 130.1,299.4 129.8,307.2 129.4,315 128.8,322.9 128.1,330.7 127.3,338.5 126.6,346.3 125.8,354.1 125.1,361.9 124.5,369.8 123.9,377.6 123.4,385.4 123.1,393.2 123,397.5 122.9,401 122.8,408.9 122.9,416.7 123,420.2 123.1,424.5 123.4,432.3 123.9,440.1 124.5,447.9 125.1,455.8 125.8,463.6 126.6,471.4 127.3,479.2 128.1,487 128.8,494.8 129.4,502.7 129.8,510.5 130.1,518.3 130.5,526.1 130.8,532.6 130.8,533.9 131.2,541.7 131.6,549.6 132,557.4 132.5,565.2 133.1,573 133.8,580.8 134.5,588.7 135.5,596.5 136.5,604.3 137.8,612.1 138.6,616 139.4,619.9 141.4,627.7 143.9,635.6 146.4,641.7 147.1,643.4 151.7,651.2 154.2,654.5 158.2,659 162,662.7 167.4,666.8 169.8,668.4 177.6,672.5 183.1,674.6 185.4,675.5 193.2,677.6 201,679.3 208.8,680.7 216.7,681.8Z"/><path fill="#46f783" d="M215,674.6 216.7,674.9 224.5,675.8 232.3,676.5 240.1,677 247.9,677.3 255.7,677.5 263.5,677.6 271.3,677.5 279.1,677.3 286.9,677 294.7,676.5 302.5,675.8 310.3,674.9 312,674.6 318.2,673.7 326,672.2 333.8,670.4 341.6,668 344.4,666.8 349.4,664.6 357.2,659.9 358.4,659 365,652.9 366.5,651.2 371.8,643.4 372.8,641.5 375.5,635.6 378.3,627.7 380.5,619.9 380.6,619.4 382.2,612.1 383.6,604.3 384.7,596.5 385.7,588.7 386.6,580.8 387.3,573 387.9,565.2 388.4,557.7 388.4,557.4 388.9,549.6 389.3,541.7 389.7,533.9 390.1,526.1 390.5,518.3 391,510.5 391.7,502.7 392.5,494.8 393.4,487 394.3,479.2 395.1,471.4 396.1,463.6 396.2,462.2 396.9,455.8 397.6,447.9 398.1,440.1 398.5,432.3 398.8,424.5 399,416.7 399,408.9 399,401 398.8,393.2 398.5,385.4 398.1,377.6 397.6,369.8 396.9,361.9 396.2,355.5 396.1,354.1 395.1,346.3 394.3,338.5 393.4,330.7 392.5,322.9 391.7,315 391,307.2 390.5,299.4 390.1,291.6 389.7,283.8 389.3,276 388.9,268.1 388.4,260.3 388.4,260 387.9,252.5 387.3,244.7 386.6,236.9 385.7,229 384.7,221.2 383.6,213.4 382.2,205.6 380.6,198.3 380.5,197.8 378.3,190 375.5,182.1 372.8,176.2 371.8,174.3 366.5,166.5 365,164.8 358.4,158.7 357.2,157.8 349.4,153.1 344.4,150.9 341.6,149.7 333.8,147.3 326,145.5 318.2,144 312,143.1 310.3,142.8 302.5,141.9 294.7,141.2 286.9,140.7 279.1,140.4 271.3,140.2 263.5,140.1 255.7,140.2 247.9,140.4 240.1,140.7 232.3,141.2 224.5,141.9 216.7,142.8 215,143.1 208.8,144 201,145.5 193.2,147.3 185.4,149.7 182.6,150.9 177.6,153.1 169.8,157.8 168.6,158.7 162,164.8 160.5,166.5 155.2,174.3 154.2,176.2 151.5,182.1 148.7,190 146.5,197.8 146.4,198.3 144.8,205.6 143.4,213.4 142.3,221.2 141.3,229 140.4,236.9 139.7,244.7 139.1,252.5 138.6,260 138.6,260.3 138.1,268.1 137.7,276 137.3,283.8 136.9,291.6 136.5,299.4 136,307.2 135.3,315 134.5,322.9 133.6,330.7 132.7,338.5 131.9,346.3 130.9,354.1 130.8,355.5 130.1,361.9 129.4,369.8 128.9,377.6 128.5,385.4 128.2,393.2 128,401 128,408.9 128,416.7 128.2,424.5 128.5,432.3 128.9,440.1 129.4,447.9 130.1,455.8 130.8,462.2 130.9,463.6 131.9,471.4 132.7,479.2 133.6,487 134.5,494.8 135.3,502.7 136,510.5 136.5,518.3 136.9,526.1 137.3,533.9 137.7,541.7 138.1,549.6 138.6,557.4 138.6,557.7 139.1,565.2 139.7,573 140.4,580.8 141.3,588.7 142.3,596.5 143.4,604.3 144.8,612.1 146.4,619.4 146.5,619.9 148.7,627.7 151.5,635.6 154.2,641.5 155.2,643.4 160.5,651.2 162,652.9 168.6,659 169.8,659.9 177.6,664.6 182.6,666.8 185.4,668 193.2,670.4 201,672.2 208.8,673.7Z"/><path fill="#59fb72" d="M211.6,666.8 216.7,667.6 224.5,668.6 232.3,669.3 240.1,669.9 247.9,670.3 255.7,670.5 263.5,670.6 271.3,670.5 279.1,670.3 286.9,669.9 294.7,669.3 302.5,668.6 310.3,667.6 315.4,666.8 318.2,666.4 326,664.7 333.8,662.5 341.6,659.8 343.2,659 349.4,655.7 355.6,651.2 357.2,649.7 362.6,643.4 365,639.6 367.2,635.6 370.4,627.7 372.8,620.3 372.9,619.9 374.8,612.1 376.3,604.3 377.6,596.5 378.7,588.7 379.6,580.8 380.4,573 380.6,570.9 381.1,565.2 381.6,557.4 382.2,549.6 382.6,541.7 383.1,533.9 383.5,526.1 384.1,518.3 384.8,510.5 385.7,502.7 386.7,494.8 387.7,487 388.4,482.3 388.8,479.2 389.9,471.4 390.8,463.6 391.6,455.8 392.3,447.9 392.9,440.1 393.3,432.3 393.7,424.5 393.9,416.7 393.9,408.9 393.9,401 393.7,393.2 393.3,385.4 392.9,377.6 392.3,369.8 391.6,361.9 390.8,354.1 389.9,346.3 388.8,338.5 388.4,335.4 387.7,330.7 386.7,322.9 385.7,315 384.8,307.2 384.1,299.4 383.5,291.6 383.1,283.8 382.6,276 382.2,268.1 381.6,260.3 381.1,252.5 380.6,246.8 380.4,244.7 379.6,236.9 378.7,229 377.6,221.2 376.3,213.4 374.8,205.6 372.9,197.8 372.8,197.4 370.4,190 367.2,182.1 365,178.1 362.6,174.3 357.2,168 355.6,166.5 349.4,162 343.2,158.7 341.6,157.9 333.8,155.2 326,153 318.2,151.3 315.4,150.9 310.3,150.1 302.5,149.1 294.7,148.4 286.9,147.8 279.1,147.4 271.3,147.2 263.5,147.1 255.7,147.2 247.9,147.4 240.1,147.8 232.3,148.4 224.5,149.1 216.7,150.1 211.6,150.9 208.8,151.3 201,153 193.2,155.2 185.4,157.9 183.8,158.7 177.6,162 171.4,166.5 169.8,168 164.4,174.3 162,178.1 159.8,182.1 156.6,190 154.2,197.4 154.1,197.8 152.2,205.6 150.7,213.4 149.4,221.2 148.3,229 147.4,236.9 146.6,244.7 146.4,246.8 145.9,252.5 145.4,260.3 144.8,268.1 144.4,276 143.9,283.8 143.5,291.6 142.9,299.4 142.2,307.2 141.3,315 140.3,322.9 139.3,330.7 138.6,335.4 138.2,338.5 137.1,346.3 136.2,354.1 135.4,361.9 134.7,369.8 134.1,377.6 133.7,385.4 133.3,393.2 133.1,401 133.1,408.9 133.1,416.7 133.3,424.5 133.7,432.3 134.1,440.1 134.7,447.9 135.4,455.8 136.2,463.6 137.1,471.4 138.2,479.2 138.6,482.3 139.3,487 140.3,494.8 141.3,502.7 142.2,510.5 142.9,518.3 143.5,526.1 143.9,533.9 144.4,541.7 144.8,549.6 145.4,557.4 145.9,565.2 146.4,570.9 146.6,573 147.4,580.8 148.3,588.7 149.4,596.5 150.7,604.3 152.2,612.1 154.1,619.9 154.2,620.3 156.6,627.7 159.8,635.6 162,639.6 164.4,643.4 169.8,649.7 171.4,651.2 177.6,655.7 183.8,659 185.4,659.8 193.2,662.5 201,664.7 208.8,666.4Z"/><path fill="#6dfd62" d="M212.5,659 216.7,659.7 224.5,660.8 232.3,661.7 240.1,662.3 247.9,662.8 255.7,663.1 263.5,663.1 271.3,663.1 279.1,662.8 286.9,662.3 294.7,661.7 302.5,660.8 310.3,659.7 314.5,659 318.2,658.3 326,656.2 333.8,653.7 339.6,651.2 341.6,650.1 349.4,644.7 350.8,643.4 357.2,635.8 357.3,635.6 361.3,627.7 364.4,619.9 365,618.2 366.7,612.1 368.4,604.3 369.9,596.5 371.2,588.7 372.2,580.8 372.8,576 373.1,573 373.8,565.2 374.5,557.4 375.1,549.6 375.6,541.7 376.1,533.9 376.8,526.1 377.6,518.3 378.6,510.5 379.6,502.7 380.6,496.3 380.8,494.8 382.1,487 383.3,479.2 384.4,471.4 385.3,463.6 386.2,455.8 386.9,447.9 387.6,440.1 388.1,432.3 388.4,425.8 388.5,424.5 388.7,416.7 388.8,408.9 388.7,401 388.5,393.2 388.4,391.9 388.1,385.4 387.6,377.6 386.9,369.8 386.2,361.9 385.3,354.1 384.4,346.3 383.3,338.5 382.1,330.7 380.8,322.9 380.6,321.4 379.6,315 378.6,307.2 377.6,299.4 376.8,291.6 376.1,283.8 375.6,276 375.1,268.1 374.5,260.3 373.8,252.5 373.1,244.7 372.8,241.7 372.2,236.9 371.2,229 369.9,221.2 368.4,213.4 366.7,205.6 365,199.5 364.4,197.8 361.3,190 357.3,182.1 357.2,181.9 350.8,174.3 349.4,173 341.6,167.6 339.6,166.5 333.8,164 326,161.5 318.2,159.4 314.5,158.7 310.3,158 302.5,156.9 294.7,156 286.9,155.4 279.1,154.9 271.3,154.6 263.5,154.6 255.7,154.6 247.9,154.9 240.1,155.4 232.3,156 224.5,156.9 216.7,158 212.5,158.7 208.8,159.4 201,161.5 193.2,164 187.4,166.5 185.4,167.6 177.6,173 176.2,174.3 169.8,181.9 169.7,182.1 165.7,190 162.6,197.8 162,199.5 160.3,205.6 158.6,213.4 157.1,221.2 155.8,229 154.8,236.9 154.2,241.7 153.9,244.7 153.2,252.5 152.5,260.3 151.9,268.1 151.4,276 150.9,283.8 150.2,291.6 149.4,299.4 148.4,307.2 147.4,315 146.4,321.4 146.2,322.9 144.9,330.7 143.7,338.5 142.6,346.3 141.7,354.1 140.8,361.9 140.1,369.8 139.4,377.6 138.9,385.4 138.6,391.9 138.5,393.2 138.3,401 138.2,408.9 138.3,416.7 138.5,424.5 138.6,425.8 138.9,432.3 139.4,440.1 140.1,447.9 140.8,455.8 141.7,463.6 142.6,471.4 143.7,479.2 144.9,487 146.2,494.8 146.4,496.3 147.4,502.7 148.4,510.5 149.4,518.3 150.2,526.1 150.9,533.9 151.4,541.7 151.9,549.6 152.5,557.4 153.2,565.2 153.9,573 154.2,576 154.8,580.8 155.8,588.7 157.1,596.5 158.6,604.3 160.3,612.1 162,618.2 162.6,619.9 165.7,627.7 169.7,635.6 169.8,635.8 176.2,643.4 177.6,644.7 185.4,650.1 187.4,651.2 193.2,653.7 201,656.2 208.8,658.3Z"/><path fill="#80fe53" d="M218.8,651.2 224.5,652.1 232.3,653.1 240.1,653.9 247.9,654.4 255.7,654.7 263.5,654.8 271.3,654.7 279.1,654.4 286.9,653.9 294.7,653.1 302.5,652.1 308.2,651.2 310.3,650.8 318.2,648.8 326,646.3 332.8,643.4 333.8,642.9 341.6,637.5 343.8,635.6 349.4,628.9 350.1,627.7 354.2,619.9 357.2,612.5 357.3,612.1 359.5,604.3 361.2,596.5 362.7,588.7 364,580.8 365,573.7 365.1,573 365.9,565.2 366.7,557.4 367.4,549.6 368,541.7 368.7,533.9 369.6,526.1 370.7,518.3 371.9,510.5 372.8,505.7 373.3,502.7 374.8,494.8 376.1,487 377.4,479.2 378.6,471.4 379.7,463.6 380.6,456.8 380.7,455.8 381.7,447.9 382.4,440.1 383,432.3 383.4,424.5 383.6,416.7 383.7,408.9 383.6,401 383.4,393.2 383,385.4 382.4,377.6 381.7,369.8 380.7,361.9 380.6,360.9 379.7,354.1 378.6,346.3 377.4,338.5 376.1,330.7 374.8,322.9 373.3,315 372.8,312 371.9,307.2 370.7,299.4 369.6,291.6 368.7,283.8 368,276 367.4,268.1 366.7,260.3 365.9,252.5 365.1,244.7 365,244 364,236.9 362.7,229 361.2,221.2 359.5,213.4 357.3,205.6 357.2,205.2 354.2,197.8 350.1,190 349.4,188.8 343.8,182.1 341.6,180.2 333.8,174.8 332.8,174.3 326,171.4 318.2,168.9 310.3,166.9 308.2,166.5 302.5,165.6 294.7,164.6 286.9,163.8 279.1,163.3 271.3,163 263.5,162.9 255.7,163 247.9,163.3 240.1,163.8 232.3,164.6 224.5,165.6 218.8,166.5 216.7,166.9 208.8,168.9 201,171.4 194.2,174.3 193.2,174.8 185.4,180.2 183.2,182.1 177.6,188.8 176.9,190 172.8,197.8 169.8,205.2 169.7,205.6 167.5,213.4 165.8,221.2 164.3,229 163,236.9 162,244 161.9,244.7 161.1,252.5 160.3,260.3 159.6,268.1 159,276 158.3,283.8 157.4,291.6 156.3,299.4 155.1,307.2 154.2,312 153.7,315 152.2,322.9 150.9,330.7 149.6,338.5 148.4,346.3 147.3,354.1 146.4,360.9 146.3,361.9 145.3,369.8 144.6,377.6 144,385.4 143.6,393.2 143.4,401 143.3,408.9 143.4,416.7 143.6,424.5 144,432.3 144.6,440.1 145.3,447.9 146.3,455.8 146.4,456.8 147.3,463.6 148.4,471.4 149.6,479.2 150.9,487 152.2,494.8 153.7,502.7 154.2,505.7 155.1,510.5 156.3,518.3 157.4,526.1 158.3,533.9 159,541.7 159.6,549.6 160.3,557.4 161.1,565.2 161.9,573 162,573.7 163,580.8 164.3,588.7 165.8,596.5 167.5,604.3 169.7,612.1 169.8,612.5 172.8,619.9 176.9,627.7 177.6,628.9 183.2,635.6 185.4,637.5 193.2,642.9 194.2,643.4 201,646.3 208.8,648.8 216.7,650.8Z"/><path fill="#92fe46" d="M234.9,643.4 240.1,644 247.9,644.6 255.7,645 263.5,645.1 271.3,645 279.1,644.6 286.9,644 292.1,643.4 294.7,643 302.5,641.6 310.3,639.7 318.2,637.2 322.1,635.6 326,633.6 333.8,628.2 334.3,627.7 341,619.9 341.6,619.1 345.3,612.1 348.5,604.3 349.4,601.8 350.9,596.5 352.7,588.7 354.3,580.8 355.6,573 356.8,565.2 357.2,562.4 357.8,557.4 358.6,549.6 359.4,541.7 360.5,533.9 361.7,526.1 363.2,518.3 364.8,510.5 365,509.9 366.6,502.7 368.3,494.8 369.8,487 371.3,479.2 372.8,471.4 372.8,471.3 374.1,463.6 375.3,455.8 376.2,447.9 377,440.1 377.6,432.3 378.1,424.5 378.4,416.7 378.5,408.9 378.4,401 378.1,393.2 377.6,385.4 377,377.6 376.2,369.8 375.3,361.9 374.1,354.1 372.8,346.4 372.8,346.3 371.3,338.5 369.8,330.7 368.3,322.9 366.6,315 365,307.8 364.8,307.2 363.2,299.4 361.7,291.6 360.5,283.8 359.4,276 358.6,268.1 357.8,260.3 357.2,255.3 356.8,252.5 355.6,244.7 354.3,236.9 352.7,229 350.9,221.2 349.4,215.9 348.5,213.4 345.3,205.6 341.6,198.6 341,197.8 334.3,190 333.8,189.5 326,184.1 322.1,182.1 318.2,180.5 310.3,178 302.5,176.1 294.7,174.7 292.1,174.3 286.9,173.7 279.1,173.1 271.3,172.7 263.5,172.6 255.7,172.7 247.9,173.1 240.1,173.7 234.9,174.3 232.3,174.7 224.5,176.1 216.7,178 208.8,180.5 204.9,182.1 201,184.1 193.2,189.5 192.7,190 186,197.8 185.4,198.6 181.7,205.6 178.5,213.4 177.6,215.9 176.1,221.2 174.3,229 172.7,236.9 171.4,244.7 170.2,252.5 169.8,255.3 169.2,260.3 168.4,268.1 167.6,276 166.5,283.8 165.3,291.6 163.8,299.4 162.2,307.2 162,307.8 160.4,315 158.7,322.9 157.2,330.7 155.7,338.5 154.2,346.3 154.2,346.4 152.9,354.1 151.7,361.9 150.8,369.8 150,377.6 149.4,385.4 148.9,393.2 148.6,401 148.5,408.9 148.6,416.7 148.9,424.5 149.4,432.3 150,440.1 150.8,447.9 151.7,455.8 152.9,463.6 154.2,471.3 154.2,471.4 155.7,479.2 157.2,487 158.7,494.8 160.4,502.7 162,509.9 162.2,510.5 163.8,518.3 165.3,526.1 166.5,533.9 167.6,541.7 168.4,549.6 169.2,557.4 169.8,562.4 170.2,565.2 171.4,573 172.7,580.8 174.3,588.7 176.1,596.5 177.6,601.8 178.5,604.3 181.7,612.1 185.4,619.1 186,619.9 192.7,627.7 193.2,628.2 201,633.6 204.9,635.6 208.8,637.2 216.7,639.7 224.5,641.6 232.3,643Z"/><path fill="#a4fc3b" d="M221.8,627.7 224.5,628.6 232.3,630.3 240.1,631.6 247.9,632.5 255.7,633 263.5,633.2 271.3,633 279.1,632.5 286.9,631.6 294.7,630.3 302.5,628.6 305.2,627.7 310.3,625.9 318.2,622.1 321.3,619.9 326,615.9 329.3,612.1 333.8,605.4 334.4,604.3 337.7,596.5 340.3,588.7 341.6,584.2 342.4,580.8 344,573 345.5,565.2 346.8,557.4 348,549.6 349.4,542.2 349.5,541.7 350.9,533.9 352.5,526.1 354.6,518.3 357.1,510.5 357.2,510 359.1,502.7 361.2,494.8 363.1,487 365,479.5 365.1,479.2 366.7,471.4 368.2,463.6 369.5,455.8 370.6,447.9 371.5,440.1 372.2,432.3 372.7,424.5 372.8,420.4 373,416.7 373.1,408.9 373,401 372.8,397.3 372.7,393.2 372.2,385.4 371.5,377.6 370.6,369.8 369.5,361.9 368.2,354.1 366.7,346.3 365.1,338.5 365,338.2 363.1,330.7 361.2,322.9 359.1,315 357.2,307.7 357.1,307.2 354.6,299.4 352.5,291.6 350.9,283.8 349.5,276 349.4,275.5 348,268.1 346.8,260.3 345.5,252.5 344,244.7 342.4,236.9 341.6,233.5 340.3,229 337.7,221.2 334.4,213.4 333.8,212.3 329.3,205.6 326,201.8 321.3,197.8 318.2,195.6 310.3,191.8 305.2,190 302.5,189.1 294.7,187.4 286.9,186.1 279.1,185.2 271.3,184.7 263.5,184.5 255.7,184.7 247.9,185.2 240.1,186.1 232.3,187.4 224.5,189.1 221.8,190 216.7,191.8 208.8,195.6 205.7,197.8 201,201.8 197.7,205.6 193.2,212.3 192.6,213.4 189.3,221.2 186.7,229 185.4,233.5 184.6,236.9 183,244.7 181.5,252.5 180.2,260.3 179,268.1 177.6,275.5 177.5,276 176.1,283.8 174.5,291.6 172.4,299.4 169.9,307.2 169.8,307.7 167.9,315 165.8,322.9 163.9,330.7 162,338.2 161.9,338.5 160.3,346.3 158.8,354.1 157.5,361.9 156.4,369.8 155.5,377.6 154.8,385.4 154.3,393.2 154.2,397.3 154,401 153.9,408.9 154,416.7 154.2,420.4 154.3,424.5 154.8,432.3 155.5,440.1 156.4,447.9 157.5,455.8 158.8,463.6 160.3,471.4 161.9,479.2 162,479.5 163.9,487 165.8,494.8 167.9,502.7 169.8,510 169.9,510.5 172.4,518.3 174.5,526.1 176.1,533.9 177.5,541.7 177.6,542.2 179,549.6 180.2,557.4 181.5,565.2 183,573 184.6,580.8 185.4,584.2 186.7,588.7 189.3,596.5 192.6,604.3 193.2,605.4 197.7,612.1 201,615.9 205.7,619.9 208.8,622.1 216.7,625.9Z"/><path fill="#b1f836" d="M225.2,612.1 232.3,614.5 240.1,616.4 247.9,617.6 255.7,618.3 263.5,618.5 271.3,618.3 279.1,617.6 286.9,616.4 294.7,614.5 301.8,612.1 302.5,611.8 310.3,607.2 313.8,604.3 318.2,599.4 320.2,596.5 324.2,588.7 326,584.5 327.2,580.8 329.5,573 331.5,565.2 333.3,557.4 333.8,555.4 335,549.6 336.9,541.7 339,533.9 341.6,527.2 341.9,526.1 345,518.3 348,510.5 349.4,506.8 350.7,502.7 353.4,494.8 356,487 357.2,483.1 358.3,479.2 360.2,471.4 361.9,463.6 363.5,455.8 364.8,447.9 365,446.6 366,440.1 367.1,432.3 367.8,424.5 368.3,416.7 368.4,408.9 368.3,401 367.8,393.2 367.1,385.4 366,377.6 365,371.1 364.8,369.8 363.5,361.9 361.9,354.1 360.2,346.3 358.3,338.5 357.2,334.6 356,330.7 353.4,322.9 350.7,315 349.4,310.9 348,307.2 345,299.4 341.9,291.6 341.6,290.5 339,283.8 336.9,276 335,268.1 333.8,262.3 333.3,260.3 331.5,252.5 329.5,244.7 327.2,236.9 326,233.2 324.2,229 320.2,221.2 318.2,218.3 313.8,213.4 310.3,210.5 302.5,205.9 301.8,205.6 294.7,203.2 286.9,201.3 279.1,200.1 271.3,199.4 263.5,199.2 255.7,199.4 247.9,200.1 240.1,201.3 232.3,203.2 225.2,205.6 224.5,205.9 216.7,210.5 213.2,213.4 208.8,218.3 206.8,221.2 202.8,229 201,233.2 199.8,236.9 197.5,244.7 195.5,252.5 193.7,260.3 193.2,262.3 192,268.1 190.1,276 188,283.8 185.4,290.5 185.1,291.6 182,299.4 179,307.2 177.6,310.9 176.3,315 173.6,322.9 171,330.7 169.8,334.6 168.7,338.5 166.8,346.3 165.1,354.1 163.5,361.9 162.2,369.8 162,371.1 161,377.6 159.9,385.4 159.2,393.2 158.7,401 158.6,408.9 158.7,416.7 159.2,424.5 159.9,432.3 161,440.1 162,446.6 162.2,447.9 163.5,455.8 165.1,463.6 166.8,471.4 168.7,479.2 169.8,483.1 171,487 173.6,494.8 176.3,502.7 177.6,506.8 179,510.5 182,518.3 185.1,526.1 185.4,527.2 188,533.9 190.1,541.7 192,549.6 193.2,555.4 193.7,557.4 195.5,565.2 197.5,573 199.8,580.8 201,584.5 202.8,588.7 206.8,596.5 208.8,599.4 213.2,604.3 216.7,607.2 224.5,611.8Z"/><path fill="#bef334" d="M243.1,596.5 247.9,597.7 255.7,598.8 263.5,599.2 271.3,598.8 279.1,597.7 283.9,596.5 286.9,595.5 294.7,591.6 298.6,588.7 302.5,584.7 305.4,580.8 309.7,573 310.3,571.7 312.8,565.2 315.5,557.4 318.2,549.8 318.2,549.6 320.9,541.7 325.1,533.9 326,532.6 329.5,526.1 333.8,518.3 337.6,510.5 341.5,502.7 341.6,502.5 344.9,494.8 348,487 349.4,483.3 350.7,479.2 353.3,471.4 355.6,463.6 357.2,457.7 357.7,455.8 359.7,447.9 361.2,440.1 362.5,432.3 363.4,424.5 363.9,416.7 364.1,408.9 363.9,401 363.4,393.2 362.5,385.4 361.2,377.6 359.7,369.8 357.7,361.9 357.2,360 355.6,354.1 353.3,346.3 350.7,338.5 349.4,334.4 348,330.7 344.9,322.9 341.6,315.2 341.5,315 337.6,307.2 333.8,299.4 329.5,291.6 326,285.1 325.1,283.8 320.9,276 318.2,268.1 318.2,267.9 315.5,260.3 312.8,252.5 310.3,246 309.7,244.7 305.4,236.9 302.5,233 298.6,229 294.7,226.1 286.9,222.2 283.9,221.2 279.1,220 271.3,218.9 263.5,218.5 255.7,218.9 247.9,220 243.1,221.2 240.1,222.2 232.3,226.1 228.4,229 224.5,233 221.6,236.9 217.3,244.7 216.7,246 214.2,252.5 211.5,260.3 208.8,267.9 208.8,268.1 206.1,276 201.9,283.8 201,285.1 197.5,291.6 193.2,299.4 189.4,307.2 185.5,315 185.4,315.2 182.1,322.9 179,330.7 177.6,334.4 176.3,338.5 173.7,346.3 171.4,354.1 169.8,360 169.3,361.9 167.3,369.8 165.8,377.6 164.5,385.4 163.6,393.2 163.1,401 162.9,408.9 163.1,416.7 163.6,424.5 164.5,432.3 165.8,440.1 167.3,447.9 169.3,455.8 169.8,457.7 171.4,463.6 173.7,471.4 176.3,479.2 177.6,483.3 179,487 182.1,494.8 185.4,502.5 185.5,502.7 189.4,510.5 193.2,518.3 197.5,526.1 201,532.6 201.9,533.9 206.1,541.7 208.8,549.6 208.8,549.8 211.5,557.4 214.2,565.2 216.7,571.7 217.3,573 221.6,580.8 224.5,584.7 228.4,588.7 232.3,591.6 240.1,595.5Z"/><path fill="#caed33" d="M253.2,565.2 255.7,566.3 263.5,567.5 271.3,566.3 273.8,565.2 279.1,562.1 283.8,557.4 286.9,554.6 290.6,549.6 294.7,546.7 299.7,541.7 302.5,539.4 307.8,533.9 310.3,531.3 314.4,526.1 318.2,521.8 320.6,518.3 326,510.9 326.2,510.5 331.1,502.7 333.8,498.1 335.5,494.8 339.5,487 341.6,482.9 343.2,479.2 346.7,471.4 349.4,464.5 349.7,463.6 352.5,455.8 355,447.9 356.7,440.1 357.2,437.5 358.3,432.3 359.5,424.5 360.3,416.7 360.5,408.9 360.3,401 359.5,393.2 358.3,385.4 357.2,380.2 356.7,377.6 355,369.8 352.5,361.9 349.7,354.1 349.4,353.2 346.7,346.3 343.2,338.5 341.6,334.8 339.5,330.7 335.5,322.9 333.8,319.6 331.1,315 326.2,307.2 326,306.8 320.6,299.4 318.2,295.9 314.4,291.6 310.3,286.4 307.8,283.8 302.5,278.3 299.7,276 294.7,271 290.6,268.1 286.9,263.1 283.8,260.3 279.1,255.6 273.8,252.5 271.3,251.4 263.5,250.2 255.7,251.4 253.2,252.5 247.9,255.6 243.2,260.3 240.1,263.1 236.4,268.1 232.3,271 227.3,276 224.5,278.3 219.2,283.8 216.7,286.4 212.6,291.6 208.8,295.9 206.4,299.4 201,306.8 200.8,307.2 195.9,315 193.2,319.6 191.5,322.9 187.5,330.7 185.4,334.8 183.8,338.5 180.3,346.3 177.6,353.2 177.3,354.1 174.5,361.9 172,369.8 170.3,377.6 169.8,380.2 168.7,385.4 167.5,393.2 166.7,401 166.5,408.9 166.7,416.7 167.5,424.5 168.7,432.3 169.8,437.5 170.3,440.1 172,447.9 174.5,455.8 177.3,463.6 177.6,464.5 180.3,471.4 183.8,479.2 185.4,482.9 187.5,487 191.5,494.8 193.2,498.1 195.9,502.7 200.8,510.5 201,510.9 206.4,518.3 208.8,521.8 212.6,526.1 216.7,531.3 219.2,533.9 224.5,539.4 227.3,541.7 232.3,546.7 236.4,549.6 240.1,554.6 243.2,557.4 247.9,562.1Z"/><path fill="#d6e535" d="M249.4,533.9 255.7,535.8 263.5,536.6 271.3,535.8 277.6,533.9 279.1,533.6 286.9,530.4 293.9,526.1 294.7,525.7 302.5,520.1 304.5,518.3 310.3,513.1 312.7,510.5 318.2,504.7 319.7,502.7 325.8,494.8 326,494.6 331.2,487 333.8,483.2 336.1,479.2 340.5,471.4 341.6,469.4 344.5,463.6 347.8,455.8 349.4,451.3 350.7,447.9 353.1,440.1 354.7,432.3 355.9,424.5 356.7,416.7 357,408.9 356.7,401 355.9,393.2 354.7,385.4 353.1,377.6 350.7,369.8 349.4,366.4 347.8,361.9 344.5,354.1 341.6,348.3 340.5,346.3 336.1,338.5 333.8,334.5 331.2,330.7 326,323.1 325.8,322.9 319.7,315 318.2,313 312.7,307.2 310.3,304.6 304.5,299.4 302.5,297.6 294.7,292 293.9,291.6 286.9,287.3 279.1,284.1 277.6,283.8 271.3,281.9 263.5,281.1 255.7,281.9 249.4,283.8 247.9,284.1 240.1,287.3 233.1,291.6 232.3,292 224.5,297.6 222.5,299.4 216.7,304.6 214.3,307.2 208.8,313 207.3,315 201.2,322.9 201,323.1 195.8,330.7 193.2,334.5 190.9,338.5 186.5,346.3 185.4,348.3 182.5,354.1 179.2,361.9 177.6,366.4 176.3,369.8 173.9,377.6 172.3,385.4 171.1,393.2 170.3,401 170,408.9 170.3,416.7 171.1,424.5 172.3,432.3 173.9,440.1 176.3,447.9 177.6,451.3 179.2,455.8 182.5,463.6 185.4,469.4 186.5,471.4 190.9,479.2 193.2,483.2 195.8,487 201,494.6 201.2,494.8 207.3,502.7 208.8,504.7 214.3,510.5 216.7,513.1 222.5,518.3 224.5,520.1 232.3,525.7 233.1,526.1 240.1,530.4 247.9,533.6Z"/><path fill="#e1dc37" d="M247.4,518.3 247.9,518.5 255.7,520.5 263.5,521.1 271.3,520.5 279.1,518.5 279.6,518.3 286.9,515.7 294.7,511.6 296.4,510.5 302.5,506.6 307.2,502.7 310.3,500.3 315.8,494.8 318.2,492.8 323.1,487 326,483.9 329.4,479.2 333.8,473.2 334.9,471.4 339.5,463.6 341.6,459.8 343.6,455.8 346.7,447.9 349.4,440.4 349.5,440.1 351.5,432.3 352.8,424.5 353.6,416.7 353.8,408.9 353.6,401 352.8,393.2 351.5,385.4 349.5,377.6 349.4,377.3 346.7,369.8 343.6,361.9 341.6,357.9 339.5,354.1 334.9,346.3 333.8,344.5 329.4,338.5 326,333.8 323.1,330.7 318.2,324.9 315.8,322.9 310.3,317.4 307.2,315 302.5,311.1 296.4,307.2 294.7,306.1 286.9,302 279.6,299.4 279.1,299.2 271.3,297.2 263.5,296.6 255.7,297.2 247.9,299.2 247.4,299.4 240.1,302 232.3,306.1 230.6,307.2 224.5,311.1 219.8,315 216.7,317.4 211.2,322.9 208.8,324.9 203.9,330.7 201,333.8 197.6,338.5 193.2,344.5 192.1,346.3 187.5,354.1 185.4,357.9 183.4,361.9 180.3,369.8 177.6,377.3 177.5,377.6 175.5,385.4 174.2,393.2 173.4,401 173.2,408.9 173.4,416.7 174.2,424.5 175.5,432.3 177.5,440.1 177.6,440.4 180.3,447.9 183.4,455.8 185.4,459.8 187.5,463.6 192.1,471.4 193.2,473.2 197.6,479.2 201,483.9 203.9,487 208.8,492.8 211.2,494.8 216.7,500.3 219.8,502.7 224.5,506.6 230.6,510.5 232.3,511.6 240.1,515.7Z"/><path fill="#ead339" d="M235.4,502.7 240.1,505 247.9,507.7 255.7,509.3 263.5,509.8 271.3,509.3 279.1,507.7 286.9,505 291.6,502.7 294.7,501.3 302.5,496.7 304.9,494.8 310.3,491.2 314.8,487 318.2,484.2 322.8,479.2 326,475.9 329.4,471.4 333.8,465.5 334.9,463.6 339.3,455.8 341.6,451.2 343,447.9 345.7,440.1 348,432.3 349.4,425.7 349.6,424.5 350.4,416.7 350.7,408.9 350.4,401 349.6,393.2 349.4,392 348,385.4 345.7,377.6 343,369.8 341.6,366.5 339.3,361.9 334.9,354.1 333.8,352.2 329.4,346.3 326,341.8 322.8,338.5 318.2,333.5 314.8,330.7 310.3,326.5 304.9,322.9 302.5,321 294.7,316.4 291.6,315 286.9,312.7 279.1,310 271.3,308.4 263.5,307.9 255.7,308.4 247.9,310 240.1,312.7 235.4,315 232.3,316.4 224.5,321 222.1,322.9 216.7,326.5 212.2,330.7 208.8,333.5 204.2,338.5 201,341.8 197.6,346.3 193.2,352.2 192.1,354.1 187.7,361.9 185.4,366.5 184,369.8 181.3,377.6 179,385.4 177.6,392 177.4,393.2 176.6,401 176.3,408.9 176.6,416.7 177.4,424.5 177.6,425.7 179,432.3 181.3,440.1 184,447.9 185.4,451.2 187.7,455.8 192.1,463.6 193.2,465.5 197.6,471.4 201,475.9 204.2,479.2 208.8,484.2 212.2,487 216.7,491.2 222.1,494.8 224.5,496.7 232.3,501.3Z"/><path fill="#f2c83a" d="M235.8,494.8 240.1,496.8 247.9,499.2 255.7,500.7 263.5,501.1 271.3,500.7 279.1,499.2 286.9,496.8 291.2,494.8 294.7,493.5 302.5,489.3 305.8,487 310.3,484 316,479.2 318.2,477.3 323.8,471.4 326,468.9 329.9,463.6 333.8,457.8 334.9,455.8 338.9,447.9 341.6,441.3 342,440.1 344.3,432.3 346,424.5 346.9,416.7 347.3,408.9 346.9,401 346,393.2 344.3,385.4 342,377.6 341.6,376.4 338.9,369.8 334.9,361.9 333.8,359.9 329.9,354.1 326,348.8 323.8,346.3 318.2,340.4 316,338.5 310.3,333.7 305.8,330.7 302.5,328.4 294.7,324.2 291.2,322.9 286.9,320.9 279.1,318.5 271.3,317 263.5,316.6 255.7,317 247.9,318.5 240.1,320.9 235.8,322.9 232.3,324.2 224.5,328.4 221.2,330.7 216.7,333.7 211,338.5 208.8,340.4 203.2,346.3 201,348.8 197.1,354.1 193.2,359.9 192.1,361.9 188.1,369.8 185.4,376.4 185,377.6 182.7,385.4 181,393.2 180.1,401 179.7,408.9 180.1,416.7 181,424.5 182.7,432.3 185,440.1 185.4,441.3 188.1,447.9 192.1,455.8 193.2,457.8 197.1,463.6 201,468.9 203.2,471.4 208.8,477.3 211,479.2 216.7,484 221.2,487 224.5,489.3 232.3,493.5Z"/><path fill="#f8be39" d="M232,487 232.3,487.2 240.1,490.5 247.9,492.7 255.7,493.9 263.5,494.3 271.3,493.9 279.1,492.7 286.9,490.5 294.7,487.2 295,487 302.5,483.2 308.3,479.2 310.3,477.8 317.7,471.4 318.2,470.9 324.7,463.6 326,462 330.3,455.8 333.8,449.6 334.6,447.9 338.1,440.1 340.6,432.3 341.6,427.7 342.3,424.5 343.3,416.7 343.7,408.9 343.3,401 342.3,393.2 341.6,390 340.6,385.4 338.1,377.6 334.6,369.8 333.8,368.1 330.3,361.9 326,355.7 324.7,354.1 318.2,346.8 317.7,346.3 310.3,339.9 308.3,338.5 302.5,334.5 295,330.7 294.7,330.5 286.9,327.2 279.1,325 271.3,323.8 263.5,323.4 255.7,323.8 247.9,325 240.1,327.2 232.3,330.5 232,330.7 224.5,334.5 218.7,338.5 216.7,339.9 209.3,346.3 208.8,346.8 202.3,354.1 201,355.7 196.7,361.9 193.2,368.1 192.4,369.8 188.9,377.6 186.4,385.4 185.4,390 184.7,393.2 183.7,401 183.3,408.9 183.7,416.7 184.7,424.5 185.4,427.7 186.4,432.3 188.9,440.1 192.4,447.9 193.2,449.6 196.7,455.8 201,462 202.3,463.6 208.8,470.9 209.3,471.4 216.7,477.8 218.7,479.2 224.5,483.2Z"/><path fill="#fcb035" d="M246.8,487 247.9,487.3 255.7,488.8 263.5,489.3 271.3,488.8 279.1,487.3 280.2,487 286.9,485.2 294.7,482.1 299.9,479.2 302.5,477.8 310.3,472.2 311.3,471.4 318.2,465 319.4,463.6 325.6,455.8 326,455.2 330.4,447.9 333.8,440.8 334.1,440.1 336.9,432.3 338.8,424.5 339.9,416.7 340.3,408.9 339.9,401 338.8,393.2 336.9,385.4 334.1,377.6 333.8,376.9 330.4,369.8 326,362.5 325.6,361.9 319.4,354.1 318.2,352.7 311.3,346.3 310.3,345.5 302.5,339.9 299.9,338.5 294.7,335.6 286.9,332.5 280.2,330.7 279.1,330.4 271.3,328.9 263.5,328.4 255.7,328.9 247.9,330.4 246.8,330.7 240.1,332.5 232.3,335.6 227.1,338.5 224.5,339.9 216.7,345.5 215.7,346.3 208.8,352.7 207.6,354.1 201.4,361.9 201,362.5 196.6,369.8 193.2,376.9 192.9,377.6 190.1,385.4 188.2,393.2 187.1,401 186.7,408.9 187.1,416.7 188.2,424.5 190.1,432.3 192.9,440.1 193.2,440.8 196.6,447.9 201,455.2 201.4,455.8 207.6,463.6 208.8,465 215.7,471.4 216.7,472.2 224.5,477.8 227.1,479.2 232.3,482.1 240.1,485.2Z"/><path fill="#fda330" d="M236.8,479.2 240.1,480.6 247.9,483 255.7,484.3 263.5,484.8 271.3,484.3 279.1,483 286.9,480.6 290.2,479.2 294.7,477.4 302.5,472.9 304.7,471.4 310.3,467.1 314.1,463.6 318.2,459.3 321.1,455.8 326,448.5 326.3,447.9 330.5,440.1 333.3,432.3 333.8,430.4 335.4,424.5 336.6,416.7 337.1,408.9 336.6,401 335.4,393.2 333.8,387.3 333.3,385.4 330.5,377.6 326.3,369.8 326,369.2 321.1,361.9 318.2,358.4 314.1,354.1 310.3,350.6 304.7,346.3 302.5,344.8 294.7,340.3 290.2,338.5 286.9,337.1 279.1,334.7 271.3,333.4 263.5,332.9 255.7,333.4 247.9,334.7 240.1,337.1 236.8,338.5 232.3,340.3 224.5,344.8 222.3,346.3 216.7,350.6 212.9,354.1 208.8,358.4 205.9,361.9 201,369.2 200.7,369.8 196.5,377.6 193.7,385.4 193.2,387.3 191.6,393.2 190.4,401 189.9,408.9 190.4,416.7 191.6,424.5 193.2,430.4 193.7,432.3 196.5,440.1 200.7,447.9 201,448.5 205.9,455.8 208.8,459.3 212.9,463.6 216.7,467.1 222.3,471.4 224.5,472.9 232.3,477.4Z"/><path fill="#fd952b" d="M250.4,479.2 255.7,480.2 263.5,480.7 271.3,480.2 276.6,479.2 279.1,478.8 286.9,476.6 294.7,473.1 297.7,471.4 302.5,468.7 308.9,463.6 310.3,462.4 316.8,455.8 318.2,454.1 322.8,447.9 326,441.8 326.9,440.1 330.5,432.3 332.4,424.5 333.4,416.7 333.8,410.1 333.8,408.9 333.8,407.6 333.4,401 332.4,393.2 330.5,385.4 326.9,377.6 326,375.9 322.8,369.8 318.2,363.6 316.8,361.9 310.3,355.3 308.9,354.1 302.5,349 297.7,346.3 294.7,344.6 286.9,341.1 279.1,338.9 276.6,338.5 271.3,337.5 263.5,337 255.7,337.5 250.4,338.5 247.9,338.9 240.1,341.1 232.3,344.6 229.3,346.3 224.5,349 218.1,354.1 216.7,355.3 210.2,361.9 208.8,363.6 204.2,369.8 201,375.9 200.1,377.6 196.5,385.4 194.6,393.2 193.6,401 193.2,407.6 193.2,408.9 193.2,410.1 193.6,416.7 194.6,424.5 196.5,432.3 200.1,440.1 201,441.8 204.2,447.9 208.8,454.1 210.2,455.8 216.7,462.4 218.1,463.6 224.5,468.7 229.3,471.4 232.3,473.1 240.1,476.6 247.9,478.8Z"/><path fill="#fc8624" d="M237,471.4 240.1,472.9 247.9,475.4 255.7,476.7 263.5,477.2 271.3,476.7 279.1,475.4 286.9,472.9 290,471.4 294.7,469.3 302.5,464.7 303.9,463.6 310.3,458.4 312.9,455.8 318.2,449.5 319.3,447.9 323.7,440.1 326,435.7 327.6,432.3 329.8,424.5 330.8,416.7 331.2,408.9 330.8,401 329.8,393.2 327.6,385.4 326,382 323.7,377.6 319.3,369.8 318.2,368.2 312.9,361.9 310.3,359.3 303.9,354.1 302.5,353 294.7,348.4 290,346.3 286.9,344.8 279.1,342.3 271.3,341 263.5,340.5 255.7,341 247.9,342.3 240.1,344.8 237,346.3 232.3,348.4 224.5,353 223.1,354.1 216.7,359.3 214.1,361.9 208.8,368.2 207.7,369.8 203.3,377.6 201,382 199.4,385.4 197.2,393.2 196.2,401 195.8,408.9 196.2,416.7 197.2,424.5 199.4,432.3 201,435.7 203.3,440.1 207.7,447.9 208.8,449.5 214.1,455.8 216.7,458.4 223.1,463.6 224.5,464.7 232.3,469.3Z"/><path fill="#f9771e" d="M246.4,471.4 247.9,471.9 255.7,473.4 263.5,473.9 271.3,473.4 279.1,471.9 280.6,471.4 286.9,469.2 294.7,465.9 298.4,463.6 302.5,460.7 308.6,455.8 310.3,454.1 315.5,447.9 318.2,444.4 320.6,440.1 324.3,432.3 326,428.6 327.2,424.5 328.3,416.7 328.6,408.9 328.3,401 327.2,393.2 326,389.1 324.3,385.4 320.6,377.6 318.2,373.3 315.5,369.8 310.3,363.6 308.6,361.9 302.5,357 298.4,354.1 294.7,351.8 286.9,348.5 280.6,346.3 279.1,345.8 271.3,344.3 263.5,343.8 255.7,344.3 247.9,345.8 246.4,346.3 240.1,348.5 232.3,351.8 228.6,354.1 224.5,357 218.4,361.9 216.7,363.6 211.5,369.8 208.8,373.3 206.4,377.6 202.7,385.4 201,389.1 199.8,393.2 198.7,401 198.4,408.9 198.7,416.7 199.8,424.5 201,428.6 202.7,432.3 206.4,440.1 208.8,444.4 211.5,447.9 216.7,454.1 218.4,455.8 224.5,460.7 228.6,463.6 232.3,465.9 240.1,469.2Z"/><path fill="#f56817" d="M235.1,463.6 240.1,465.7 247.9,468.2 255.7,469.9 263.5,470.5 271.3,469.9 279.1,468.2 286.9,465.7 291.9,463.6 294.7,462 302.5,456.7 303.7,455.8 310.3,449.2 311.4,447.9 317.2,440.1 318.2,438.4 320.5,432.3 323.6,424.5 325.4,416.7 326,409 326,408.9 326,408.7 325.4,401 323.6,393.2 320.5,385.4 318.2,379.3 317.2,377.6 311.4,369.8 310.3,368.5 303.7,361.9 302.5,361 294.7,355.7 291.9,354.1 286.9,352 279.1,349.5 271.3,347.8 263.5,347.2 255.7,347.8 247.9,349.5 240.1,352 235.1,354.1 232.3,355.7 224.5,361 223.3,361.9 216.7,368.5 215.6,369.8 209.8,377.6 208.8,379.3 206.5,385.4 203.4,393.2 201.6,401 201,408.7 201,408.9 201,409 201.6,416.7 203.4,424.5 206.5,432.3 208.8,438.4 209.8,440.1 215.6,447.9 216.7,449.2 223.3,455.8 224.5,456.7 232.3,462Z"/><path fill="#ef5a11" d="M244.7,463.6 247.9,464.6 255.7,466.2 263.5,466.7 271.3,466.2 279.1,464.6 282.3,463.6 286.9,461.9 294.7,457.4 297.3,455.8 302.5,451.5 306.2,447.9 310.3,442.6 312.1,440.1 316.5,432.3 318.2,427.2 319.1,424.5 320.9,416.7 321.5,408.9 320.9,401 319.1,393.2 318.2,390.5 316.5,385.4 312.1,377.6 310.3,375.1 306.2,369.8 302.5,366.2 297.3,361.9 294.7,360.3 286.9,355.8 282.3,354.1 279.1,353.1 271.3,351.5 263.5,351 255.7,351.5 247.9,353.1 244.7,354.1 240.1,355.8 232.3,360.3 229.7,361.9 224.5,366.2 220.8,369.8 216.7,375.1 214.9,377.6 210.5,385.4 208.8,390.5 207.9,393.2 206.1,401 205.5,408.9 206.1,416.7 207.9,424.5 208.8,427.2 210.5,432.3 214.9,440.1 216.7,442.6 220.8,447.9 224.5,451.5 229.7,455.8 232.3,457.4 240.1,461.9Z"/><path fill="#e94d0d" d="M236.9,455.8 240.1,457.6 247.9,460.8 255.7,462.4 263.5,463 271.3,462.4 279.1,460.8 286.9,457.6 290.1,455.8 294.7,452.9 300.6,447.9 302.5,446 307.5,440.1 310.3,435.3 312.1,432.3 315.1,424.5 316.8,416.7 317.3,408.9 316.8,401 315.1,393.2 312.1,385.4 310.3,382.4 307.5,377.6 302.5,371.7 300.6,369.8 294.7,364.8 290.1,361.9 286.9,360.1 279.1,356.9 271.3,355.3 263.5,354.7 255.7,355.3 247.9,356.9 240.1,360.1 236.9,361.9 232.3,364.8 226.4,369.8 224.5,371.7 219.5,377.6 216.7,382.4 214.9,385.4 211.9,393.2 210.2,401 209.7,408.9 210.2,416.7 211.9,424.5 214.9,432.3 216.7,435.3 219.5,440.1 224.5,446 226.4,447.9 232.3,452.9Z"/><path fill="#e04008" d="M245.2,455.8 247.9,456.9 255.7,458.8 263.5,459.4 271.3,458.8 279.1,456.9 281.8,455.8 286.9,453.4 294.7,448.4 295.3,447.9 302.5,440.7 303,440.1 307.9,432.3 310.3,427 311.4,424.5 313.2,416.7 313.8,408.9 313.2,401 311.4,393.2 310.3,390.7 307.9,385.4 303,377.6 302.5,377 295.3,369.8 294.7,369.3 286.9,364.3 281.8,361.9 279.1,360.8 271.3,358.9 263.5,358.3 255.7,358.9 247.9,360.8 245.2,361.9 240.1,364.3 232.3,369.3 231.7,369.8 224.5,377 224,377.6 219.1,385.4 216.7,390.7 215.6,393.2 213.8,401 213.2,408.9 213.8,416.7 215.6,424.5 216.7,427 219.1,432.3 224,440.1 224.5,440.7 231.7,447.9 232.3,448.4 240.1,453.4Z"/><path fill="#d73606" d="M263.3,455.8 263.5,455.8 263.7,455.8 271.3,455 279.1,452.7 286.9,449.2 288.9,447.9 294.7,443.4 298,440.1 302.5,434.3 303.8,432.3 307.4,424.5 309.6,416.7 310.3,408.9 309.6,401 307.4,393.2 303.8,385.4 302.5,383.4 298,377.6 294.7,374.3 288.9,369.8 286.9,368.5 279.1,365 271.3,362.7 263.7,361.9 263.5,361.9 263.3,361.9 255.7,362.7 247.9,365 240.1,368.5 238.1,369.8 232.3,374.3 229,377.6 224.5,383.4 223.2,385.4 219.6,393.2 217.4,401 216.7,408.9 217.4,416.7 219.6,424.5 223.2,432.3 224.5,434.3 229,440.1 232.3,443.4 238.1,447.9 240.1,449.2 247.9,452.7 255.7,455Z"/><path fill="#ce2d04" d="M246.9,447.9 247.9,448.4 255.7,450.6 263.5,451.4 271.3,450.6 279.1,448.4 280.1,447.9 286.9,444.4 292.4,440.1 294.7,437.8 299.1,432.3 302.5,426.2 303.3,424.5 305.6,416.7 306.3,408.9 305.6,401 303.3,393.2 302.5,391.5 299.1,385.4 294.7,379.9 292.4,377.6 286.9,373.3 280.1,369.8 279.1,369.3 271.3,367.1 263.5,366.3 255.7,367.1 247.9,369.3 246.9,369.8 240.1,373.3 234.6,377.6 232.3,379.9 227.9,385.4 224.5,391.5 223.7,393.2 221.4,401 220.7,408.9 221.4,416.7 223.7,424.5 224.5,426.2 227.9,432.3 232.3,437.8 234.6,440.1 240.1,444.4Z"/><path fill="#c32402" d="M241.4,440.1 247.9,443.8 255.7,446.2 263.5,447 271.3,446.2 279.1,443.8 285.6,440.1 286.9,439.2 294,432.3 294.7,431.4 298.7,424.5 301.4,416.7 302.3,408.9 301.4,401 298.7,393.2 294.7,386.3 294,385.4 286.9,378.5 285.6,377.6 279.1,373.9 271.3,371.5 263.5,370.7 255.7,371.5 247.9,373.9 241.4,377.6 240.1,378.5 233,385.4 232.3,386.3 228.3,393.2 225.6,401 224.7,408.9 225.6,416.7 228.3,424.5 232.3,431.4 233,432.3 240.1,439.2Z"/><path fill="#b61c01" d="M250.5,440.1 255.7,441.8 263.5,442.6 271.3,441.8 276.5,440.1 279.1,439 286.9,433.4 288.1,432.3 293.8,424.5 294.7,422.2 296.6,416.7 297.5,408.9 296.6,401 294.7,395.5 293.8,393.2 288.1,385.4 286.9,384.3 279.1,378.7 276.5,377.6 271.3,375.9 263.5,375.1 255.7,375.9 250.5,377.6 247.9,378.7 240.1,384.3 238.9,385.4 233.2,393.2 232.3,395.5 230.4,401 229.5,408.9 230.4,416.7 232.3,422.2 233.2,424.5 238.9,432.3 240.1,433.4 247.9,439Z"/><path fill="#a91501" d="M247.1,432.3 247.9,432.9 255.7,436.5 263.5,437.7 271.3,436.5 279.1,432.9 279.9,432.3 286.9,425.4 287.6,424.5 291.3,416.7 292.5,408.9 291.3,401 287.6,393.2 286.9,392.3 279.9,385.4 279.1,384.8 271.3,381.2 263.5,380 255.7,381.2 247.9,384.8 247.1,385.4 240.1,392.3 239.4,393.2 235.7,401 234.5,408.9 235.7,416.7 239.4,424.5 240.1,425.4Z"/><path fill="#9a0e01" d="M263.3,432.3 263.5,432.3 263.7,432.3 271.3,429.9 279.1,426.5 281.2,424.5 285,416.7 286.9,411.6 287.5,408.9 286.9,406.1 285,401 281.2,393.2 279.1,391.2 271.3,387.8 263.7,385.4 263.5,385.4 263.3,385.4 255.7,387.8 247.9,391.2 245.8,393.2 242,401 240.1,406.1 239.5,408.9 240.1,411.6 242,416.7 245.8,424.5 247.9,426.5 255.7,429.9Z"/></g></g>
<rect x="456.500" y="208.500" width="528" height="818.800" fill="none" stroke="#80806e" stroke-dasharray="3 5.800"/>
<path d="M622.5 276.5 L818.5 276.5 L915.5 373.5 L915.5 862.5 L818.5 959.5 L622.5 959.5 L525.5 862.5 L525.5 373.5Z" fill="none" stroke="#aa3200" stroke-width="1.100"/>
<path d="M622.5 277.1V958.9M818.5 277.1V958.9M526.1 373.5H914.9M526.1 862.5H914.9" fill="none" stroke="#ffcdaf" stroke-width="1.050"/>
<path d="M720.500 373.5V862.5" stroke="#f4f4f4" stroke-width="1.300" stroke-dasharray="5.500 2" fill="none"/>
<circle cx="720.500" cy="618" r="63" fill="none" stroke="#0c0c8a" stroke-width="2"/>
<circle cx="720.500" cy="373.5" r="2.300" fill="#fff" stroke="#ddd" stroke-width="0.600"/><circle cx="720.500" cy="862.5" r="2.300" fill="#fff" stroke="#ddd" stroke-width="0.600"/>
<circle cx="720.500" cy="618" r="2.200" fill="#fff" stroke="#0c0c8a" stroke-width="0.900"/>
<circle cx="456.5" cy="208.4" r="2.300" fill="#fff" stroke="#000" stroke-width="1"/><circle cx="984.4" cy="208.4" r="2.300" fill="#fff" stroke="#000" stroke-width="1"/><circle cx="456.5" cy="1027.5" r="2.300" fill="#fff" stroke="#000" stroke-width="1"/><circle cx="984.4" cy="1027.5" r="2.300" fill="#fff" stroke="#000" stroke-width="1"/>
<g font-family="Liberation Sans, sans-serif" font-size="10" fill="#000"><rect x="682.500" y="640.500" width="78" height="19" fill="#fff" stroke="#000"/><text x="685" y="653.500" textLength="71.500" id="cl1">Circular Load 1</text><rect x="723.500" y="865.500" width="104" height="19" fill="#fff" stroke="#000"/><text x="726.500" y="878.500" textLength="96" id="el1">Embankment Load 1</text></g>
</svg>
<svg style="left:0;top:0" width="1920" height="1160" viewBox="0 0 1920 1160" id="v3d">
<rect x="1119" y="160" width="796" height="932" fill="#fff"/>
<rect x="1119" y="160" width="1.800" height="932" fill="#6e6e6e"/><rect x="1119" y="160" width="795" height="1.800" fill="#6e6e6e"/>
<rect x="1913.500" y="162" width="1" height="930" fill="#ececec"/>
<polygon points="1235.9,717.3 1440.2,414.2 1775.7,505.0 1772.6,542.8 1606.7,871.1 1240.5,755.7" fill="#f6dc98"/>
<polygon points="1235.9,717.3 1440.2,414.2 1440.2,418.9 1236.5,722.1" fill="#e4ecd8"/><polygon points="1236.5,722.1 1440.2,418.9 1440.3,428.4 1237.6,731.7" fill="#f1dccb"/><polygon points="1237.6,731.7 1440.3,428.4 1440.4,452.1 1240.5,755.7" fill="#e8ce8e"/><polygon points="1440.2,414.2 1775.7,505.0 1775.3,509.7 1440.2,418.9" fill="#e4ecd8"/><polygon points="1440.2,418.9 1775.3,509.7 1774.5,519.2 1440.3,428.4" fill="#f6e2d2"/><polygon points="1440.3,428.4 1774.5,519.2 1772.6,542.8 1440.4,452.1" fill="#f5dc96"/><polygon points="1235.9,717.3 1607.5,832.4 1607.4,837.2 1236.5,722.1" fill="#e4ecd8"/><polygon points="1236.5,722.1 1607.4,837.2 1607.2,846.9 1237.6,731.7" fill="#f7e3d3"/><polygon points="1237.6,731.7 1607.2,846.9 1606.7,871.1 1240.5,755.7" fill="#f6dc98"/><polygon points="1607.5,832.4 1775.7,505.0 1775.3,509.7 1607.4,837.2" fill="#dfe6d0"/><polygon points="1607.4,837.2 1775.3,509.7 1774.5,519.2 1607.2,846.9" fill="#f0d8c6"/><polygon points="1607.2,846.9 1774.5,519.2 1772.6,542.8 1606.7,871.1" fill="#e8ce8e"/><polygon points="1370.5,675.8 1549.9,731.8 1654.9,538.0 1488.2,492.5" fill="#4c51bc"/><path fill="#475ecd" d="M1422.3,688.9 1423,689.8 1427,693.4 1431.5,694.8 1432.3,695.1 1437.6,696.7 1442.8,698.4 1448.1,700 1453.4,701.7 1458.7,703.3 1464.1,705 1469.4,706.7 1474.7,708.3 1480.1,710 1485.4,711.7 1486.2,711.9 1490.8,713.3 1497.4,712.9 1498.7,712.8 1503.7,712.9 1510.2,712.6 1512.6,712.4 1516.9,712 1523.3,711 1523.9,710.9 1531.1,709.4 1532.2,709.1 1538.6,707.2 1539.9,706.8 1546.6,704.3 1546.7,704.2 1552.9,701.5 1555,700.4 1558.4,698.6 1563.3,695.5 1564.5,694.6 1568.2,692.4 1572.5,689.1 1574.2,686.9 1575,685.3 1577.1,681.5 1579.2,677.6 1581.3,673.7 1583.4,669.9 1585.5,666 1587.6,662.2 1589.6,658.4 1591.7,654.6 1593.7,650.8 1595.8,647.1 1597.8,643.3 1599.8,639.6 1601.9,635.8 1603.9,632.1 1605.9,628.4 1607.9,624.8 1609.9,621.1 1611.8,617.4 1613.8,613.8 1615.8,610.1 1617.7,606.5 1619.7,602.9 1621.6,599.3 1623.6,595.7 1625.5,592.2 1627.4,588.6 1629.4,585.1 1631.3,581.6 1633.2,578 1634,576.6 1634.7,574.4 1634.5,570.3 1633.9,567.2 1633.8,566.1 1633.1,562 1632.3,559.3 1631.8,557.6 1629.9,553.1 1629.8,553.1 1627.4,548.5 1626.9,547.7 1624.1,543.7 1623.6,543.1 1620.1,538.9 1619.8,538.6 1616.4,535.2 1613.8,533.1 1612.4,531.9 1608.3,528.9 1604.9,526.8 1604.1,526.1 1600.1,523 1595.9,521.9 1595.1,521.7 1590.2,520.3 1585.2,518.9 1580.2,517.6 1575.3,516.2 1570.3,514.9 1565.4,513.6 1560.5,512.2 1555.6,510.9 1550.7,509.5 1545.8,508.2 1545,508 1540.9,506.9 1535,507.2 1533.7,507.4 1529.2,507.3 1523.4,507.5 1521.2,507.8 1517.4,508.1 1511.6,508.9 1511.1,509 1504.6,510.3 1503.6,510.5 1497.7,512.1 1496.5,512.4 1490.5,514.5 1490.4,514.6 1484.7,516.8 1482.7,517.8 1479.6,519.3 1475,521.9 1473.9,522.6 1470.4,524.5 1466.3,527.3 1464.7,529.1 1463.8,530.5 1461.7,533.8 1459.6,537.2 1457.4,540.5 1455.2,543.9 1453.1,547.3 1450.9,550.6 1448.7,554 1446.5,557.5 1444.3,560.9 1442.1,564.3 1439.9,567.8 1437.7,571.2 1435.4,574.7 1433.2,578.2 1431,581.7 1428.7,585.2 1426.4,588.7 1424.2,592.3 1421.9,595.8 1419.6,599.4 1417.3,602.9 1415,606.5 1412.7,610.1 1410.4,613.7 1408,617.3 1405.7,621 1403.4,624.6 1401,628.3 1398.7,632 1397.7,633.5 1396.6,635.8 1396.4,640.1 1396.6,643.5 1396.5,644.6 1396.7,649.1 1397.2,652 1397.5,653.9 1398.9,658.8 1399,658.9 1400.9,663.9 1401.3,664.9 1403.7,669.4 1404.2,670.1 1407.4,674.8 1407.8,675.2 1410.9,679.1 1413.4,681.5 1414.8,682.9 1418.8,686.5Z"/><path fill="#426ada" d="M1434.7,683.5 1438,685.6 1442.8,688.1 1447.7,690.3 1452.7,692.3 1457.9,694.2 1463.1,695.9 1468.5,697.5 1473.9,698.9 1479.5,700.2 1485.1,701.3 1491,702.1 1495.5,702.4 1497,702.6 1503.1,702.9 1509.6,702.5 1510.6,702.4 1516.3,701.8 1521,701 1523.4,700.5 1529.5,698.9 1530.8,698.6 1536.8,696.6 1538.6,695.9 1543.3,694 1547,692 1548.9,691.1 1553.9,688 1556.8,685.7 1558.1,684.8 1562.1,681.4 1565.5,677.9 1568.6,674.4 1570.9,671.3 1571.4,670.7 1574.3,667.1 1577,663.5 1579.6,659.8 1582,656.1 1584.3,652.4 1586.6,648.7 1588.8,645 1591,641.3 1593.1,637.6 1595.2,633.9 1597.3,630.2 1599.3,626.5 1601.2,622.8 1603.2,619.1 1605.1,615.5 1607,611.8 1608.8,608.1 1610.5,604.5 1612.2,600.8 1613.8,597.1 1615.3,593.4 1616.7,589.7 1617.9,585.9 1618,585.3 1619.1,582.2 1620.1,578.4 1620.8,574.5 1620.9,570.6 1620.8,569.4 1620.9,566.5 1620.1,562.3 1619.6,560.9 1618.7,558 1617.2,554.6 1616.6,553.4 1614.2,549.5 1613.6,548.7 1610.9,545 1609.7,543.6 1607.3,541 1603.9,538.1 1603.3,537.7 1599.3,534.5 1594.9,532 1593.8,531.5 1590.5,529.7 1585.9,527.6 1581.2,525.7 1576.5,524 1571.6,522.5 1566.7,521.1 1561.7,519.8 1556.7,518.6 1551.5,517.6 1546.3,516.7 1541,516.1 1536.9,515.9 1535.5,515.7 1529.9,515.5 1524,515.8 1523.1,515.9 1517.9,516.4 1513.6,517.1 1511.5,517.5 1505.9,518.9 1504.7,519.2 1499.2,520.9 1497.6,521.5 1493.2,523.1 1489.8,524.7 1488,525.5 1483.3,528.1 1480.6,530.1 1479.4,530.9 1475.6,533.8 1472.3,536.8 1469.3,539.9 1466.9,542.6 1466.4,543.1 1463.6,546.2 1460.9,549.5 1458.3,552.8 1455.8,556.1 1453.3,559.4 1450.9,562.8 1448.6,566.2 1446.3,569.6 1444,573.1 1441.7,576.5 1439.4,580 1437.2,583.5 1435,587 1432.8,590.6 1430.6,594.1 1428.4,597.7 1426.3,601.3 1424.2,605 1422.2,608.7 1420.2,612.4 1418.4,616.1 1416.6,619.9 1415,623.8 1414.8,624.4 1413.4,627.7 1412,631.6 1410.9,635.7 1410.2,639.9 1410.2,641.2 1409.8,644.2 1410.2,648.8 1410.5,650.3 1411.1,653.5 1412.3,657.2 1412.8,658.5 1414.9,662.9 1415.4,663.8 1417.9,668 1419,669.5 1421.3,672.5 1424.5,675.8 1425.1,676.3 1429,680 1433.5,682.9Z"/><path fill="#4176e4" d="M1442.1,681.2 1445.8,683.1 1450.7,685.3 1455.7,687.3 1460.9,689.1 1466.1,690.8 1471.5,692.4 1476.9,693.8 1482.4,695.1 1488.1,696.2 1492.6,696.8 1493.8,697.1 1499.7,697.9 1506,697.9 1509.7,697.5 1512.6,697.2 1519.5,695.9 1519.7,695.8 1527,694 1527.7,693.8 1534.8,691.4 1534.9,691.4 1541.3,688.8 1543,687.9 1546.9,685.9 1551.3,682.7 1553.2,680.9 1555.1,679.3 1558.5,675.8 1561.5,672.2 1564.3,668.6 1566.9,664.9 1569.4,661.2 1571.7,657.5 1574.1,653.8 1576.3,650 1577.8,647.5 1578.5,646.3 1580.8,642.6 1582.9,638.9 1585,635.2 1587.1,631.5 1589.2,627.9 1591.2,624.2 1593.2,620.5 1595.2,616.8 1597.1,613.2 1599,609.5 1600.8,605.8 1601.4,604.6 1602.7,602.2 1604.5,598.6 1606.2,594.9 1607.9,591.3 1609.5,587.6 1610.9,584 1612.3,580.3 1613.3,576.5 1614.1,572.7 1614.1,570.8 1614.5,568.8 1614.2,564.7 1613.3,561.7 1612.9,560.3 1610.7,555.8 1610.7,555.7 1608,551 1607.7,550.6 1604.3,546.2 1604.2,546.1 1600.8,542.2 1599,540.7 1596.9,538.8 1592.6,536 1588.1,533.9 1587,533.5 1583.5,531.9 1578.7,530 1573.9,528.3 1569.1,526.8 1564.1,525.4 1559.1,524.1 1554.1,522.9 1549,521.8 1543.8,521 1539.6,520.4 1538.4,520.3 1533.1,519.6 1527.4,519.6 1524,520 1521.2,520.2 1515,521.4 1514.8,521.4 1508.1,523 1507.4,523.2 1501,525.2 1500.9,525.2 1494.9,527.4 1493.3,528.2 1489.7,529.9 1485.5,532.6 1483.8,534.2 1482,535.6 1478.7,538.6 1475.8,541.7 1473,544.9 1470.4,548.2 1467.9,551.5 1465.5,554.8 1463.1,558.2 1460.8,561.6 1459.2,563.8 1458.5,564.9 1456.1,568.4 1453.8,571.8 1451.5,575.2 1449.3,578.7 1447,582.2 1444.8,585.7 1442.6,589.3 1440.4,592.8 1438.2,596.4 1436.1,600 1434,603.6 1433.3,604.8 1431.8,607.2 1429.7,610.9 1427.6,614.6 1425.6,618.3 1423.7,622 1421.8,625.8 1420.1,629.7 1418.6,633.6 1417.5,637.7 1417.3,639.7 1416.7,641.8 1416.5,646.2 1417.1,649.5 1417.4,651 1419.1,656 1419.2,656 1421.5,661.2 1421.8,661.7 1424.9,666.7 1425,666.8 1428.2,671.2 1430,672.9 1432,675.1 1436.3,678.3 1441,680.7Z"/><path fill="#3e84eb" d="M1439.4,675.8 1442.7,677.9 1447.6,680.2 1452.6,682.2 1457.6,684.1 1462.8,685.9 1468.1,687.6 1473.4,689.2 1478.8,690.6 1484.2,692 1489.8,693.2 1495.5,694.2 1500,694.5 1501.5,694.7 1507.8,694.7 1513,693.9 1514.7,693.6 1521.8,692 1521.9,691.9 1529.4,689.7 1529.5,689.7 1536.4,687.3 1537.4,686.8 1542.4,684.5 1546.4,681.8 1547,681.4 1551,678.1 1554.1,674.5 1556.9,670.9 1559.6,667.2 1562.1,663.5 1564.5,659.7 1566.8,656 1568.5,653.2 1569.1,652.3 1571.4,648.6 1573.6,644.9 1575.8,641.2 1577.9,637.5 1580.1,633.8 1582.1,630.1 1584.2,626.4 1586.2,622.7 1588.2,619.1 1590.2,615.4 1592.2,611.7 1594.1,608.1 1596,604.5 1597.8,600.8 1599.6,597.2 1600,596.3 1601.4,593.5 1603.1,589.9 1604.8,586.3 1606.4,582.7 1607.9,579 1609.1,575.3 1610.1,571.6 1610.3,567.6 1610.3,567.1 1609.9,563.5 1608.5,559.7 1608.2,559 1605.6,554.3 1602.4,549.5 1599,545.3 1598.1,544.4 1595.3,541.5 1591.1,538.7 1589.9,538.2 1586.6,536.4 1582,534.4 1577.2,532.7 1572.3,531.1 1567.4,529.6 1562.5,528.2 1557.5,526.8 1552.5,525.6 1547.4,524.5 1542.2,523.5 1537,522.7 1532.8,522.4 1531.5,522.3 1525.7,522.3 1520.9,523 1519.4,523.2 1512.9,524.7 1512.8,524.7 1505.8,526.6 1499.4,528.7 1498.5,529.1 1493.8,531 1490,533.4 1489.5,533.8 1485.7,536.6 1482.7,539.7 1479.9,542.9 1477.4,546.2 1474.9,549.4 1472.5,552.8 1470.1,556.1 1468.3,558.7 1467.8,559.5 1465.4,562.9 1463.1,566.3 1460.8,569.7 1458.5,573.2 1456.3,576.6 1454,580.1 1451.8,583.6 1449.6,587.1 1447.4,590.7 1445.2,594.2 1443,597.8 1440.8,601.4 1438.7,605 1436.5,608.6 1434.4,612.3 1434,613.2 1432.3,616 1430.3,619.7 1428.2,623.4 1426.3,627.2 1424.5,631 1422.8,634.9 1421.4,638.9 1420.8,643.1 1420.8,643.6 1420.8,647.5 1421.9,651.6 1422.2,652.4 1424.3,657.6 1427.2,662.9 1427.2,663 1430.4,667.7 1431.3,668.7 1434,671.9 1438.2,675.2Z"/><path fill="#3990ec" d="M1436.7,670.4 1439.5,672.9 1444.1,675.6 1449,677.8 1454,679.8 1459.1,681.6 1464.3,683.4 1469.6,685 1474.9,686.6 1480.3,688.1 1485.7,689.5 1491.2,690.8 1496.9,691.8 1502.8,692.4 1507.4,692.2 1509.3,692.1 1516.2,690.9 1517.4,690.6 1523.5,689.1 1525.5,688.5 1531.2,686.6 1532.6,686.1 1538.8,683.4 1539.5,683 1543.9,680.4 1547.6,677.1 1550.7,673.5 1552.2,671.5 1553.5,669.8 1556.2,666.2 1558.8,662.5 1561.2,658.8 1563.5,655 1565.8,651.3 1568.1,647.6 1570.3,643.9 1572.4,640.2 1574.5,636.5 1576.6,632.8 1578.7,629.1 1580.8,625.4 1582.8,621.7 1584.8,618.1 1586.8,614.4 1588.8,610.8 1590.8,607.1 1592.7,603.5 1594.6,599.9 1596.4,596.3 1598.2,592.6 1599.9,589 1601.6,585.4 1603.1,581.7 1604.5,578.1 1605.1,576.4 1605.8,574.4 1606.9,570.7 1607.3,566.8 1606.6,563.1 1606.4,562.5 1604.6,558 1604.1,557 1601.9,553.3 1601,552 1598.3,548.3 1597.7,547.6 1594,543.8 1592.8,542.9 1590,540.7 1585.5,538.4 1580.8,536.5 1575.9,534.8 1571.1,533.2 1566.1,531.8 1561.2,530.3 1556.2,529 1551.2,527.8 1546.1,526.6 1541,525.5 1535.8,524.7 1530.3,524.2 1526.1,524.4 1524.4,524.5 1518,525.5 1516.9,525.8 1511.3,527.1 1509.4,527.6 1504.2,529.2 1502.9,529.7 1497.2,532 1496.5,532.4 1492.3,534.6 1488.8,537.5 1485.9,540.6 1484.4,542.4 1483.1,543.8 1480.5,547 1477.9,550.3 1475.5,553.6 1473.1,557 1470.8,560.4 1468.5,563.8 1466.2,567.2 1464,570.6 1461.7,574.1 1459.5,577.5 1457.3,581 1455,584.5 1452.8,588.1 1450.6,591.6 1448.4,595.2 1446.2,598.7 1444,602.3 1441.8,605.9 1439.7,609.6 1437.5,613.2 1435.4,616.9 1433.4,620.6 1431.4,624.3 1429.5,628.1 1427.8,632 1427,633.7 1426.1,635.9 1424.6,639.8 1423.8,644 1424.2,647.9 1424.3,648.6 1425.8,653.5 1426.2,654.6 1428.1,658.7 1428.9,660.1 1431.5,664.3 1432,665.1 1435.5,669.4Z"/><path fill="#329ce7" d="M1443.7,672.6 1445.3,673.6 1450.2,675.8 1455.2,677.9 1460.3,679.7 1465.4,681.5 1470.7,683.1 1476,684.7 1481.4,686.2 1486.8,687.6 1492.4,688.8 1498.1,689.8 1500.3,690 1504,690.3 1510.5,689.9 1513.4,689.4 1517.5,688.6 1522,687.5 1524.9,686.6 1529.4,685.1 1532.8,683.8 1535.8,682.5 1540.9,679.6 1541.9,678.7 1544.9,676.2 1548.1,672.7 1550.9,669 1553.5,665.3 1555.9,661.6 1558.3,657.9 1560.6,654.2 1562.9,650.5 1565.1,646.7 1567.3,643 1569.4,639.3 1571.5,635.6 1573.7,631.9 1575.7,628.2 1577.8,624.5 1579.8,620.9 1581.9,617.2 1583.9,613.6 1585.8,609.9 1587.8,606.3 1589.7,602.7 1591.6,599 1593.5,595.4 1595.4,591.8 1597.1,588.2 1598.9,584.6 1600.5,581 1602,577.4 1603.3,573.7 1604.3,569.9 1604.4,566.9 1604.5,566 1603.7,561.7 1602.7,559.5 1601.6,557.2 1599.8,554.2 1598.6,552.4 1596.6,549.6 1594.5,547.3 1593,545.6 1588.9,542.5 1586.1,541 1584.5,540.2 1579.8,538.2 1575,536.5 1570.1,534.9 1565.2,533.4 1560.2,532 1555.3,530.6 1550.2,529.4 1545.1,528.2 1540,527.2 1534.7,526.4 1532.7,526.3 1529.2,526 1523.2,526.3 1520.6,526.8 1516.8,527.5 1512.7,528.5 1509.9,529.2 1505.8,530.5 1502.7,531.6 1499.8,532.7 1495.1,535.3 1494.2,536 1491.3,538.2 1488.3,541.3 1485.6,544.5 1483,547.8 1480.6,551.1 1478.2,554.4 1475.9,557.8 1473.6,561.2 1471.3,564.6 1469,568 1466.8,571.4 1464.6,574.9 1462.3,578.4 1460.1,581.9 1457.9,585.4 1455.7,588.9 1453.5,592.4 1451.3,596 1449.1,599.6 1446.9,603.2 1444.7,606.8 1442.5,610.4 1440.4,614 1438.2,617.7 1436.1,621.4 1434.1,625.1 1432.1,628.9 1430.3,632.7 1428.6,636.6 1427.2,640.6 1426.8,643.8 1426.6,644.9 1427.1,649.5 1427.9,651.8 1428.9,654.5 1430.4,657.7 1431.5,659.8 1433.4,662.8 1435.4,665.5 1436.8,667.3 1440.8,670.9Z"/><path fill="#29a7e0" d="M1466.1,679.5 1466.6,679.6 1471.8,681.3 1477.1,682.9 1477.6,683 1482.5,684.3 1487.9,685.7 1493.4,687 1499.1,688 1505.1,688.4 1509.2,688.1 1511.7,687.9 1518.7,686.5 1518.8,686.4 1526.3,684.3 1526.4,684.2 1533,681.7 1534.4,680.9 1538.4,678.8 1542.3,675.4 1545.5,671.9 1546.4,670.7 1548.3,668.3 1551,664.6 1553.5,660.9 1555.9,657.2 1558.2,653.5 1560.5,649.7 1562.7,646 1564.9,642.3 1567,638.6 1569.2,634.9 1571.3,631.2 1573.4,627.5 1575.5,623.9 1577.5,620.2 1579.6,616.5 1581.5,612.9 1583.5,609.2 1585.4,605.6 1587.4,602 1589.3,598.4 1591.2,594.8 1593,591.2 1594.8,587.5 1596.5,583.9 1598.1,580.3 1599.5,576.7 1600.4,574.2 1600.8,573 1601.8,569.2 1602.1,565.3 1601.3,562.1 1601,561 1598.7,556.4 1598.6,556.3 1595.5,551.5 1592,547.4 1590.5,546.2 1588,544.1 1583.5,541.7 1578.8,539.8 1574,538.1 1569.2,536.5 1564.7,535.1 1564.2,535 1559.3,533.6 1554.3,532.2 1553.8,532.1 1549.3,531 1544.2,529.8 1539,528.8 1533.8,528 1528.2,527.6 1524.5,527.9 1522.2,528.1 1515.7,529.3 1515.6,529.3 1508.7,531.2 1508.6,531.3 1502.4,533.5 1501.2,534.1 1497.4,536 1493.7,538.9 1490.7,542 1489.8,543 1487.9,545.2 1485.3,548.4 1482.9,551.7 1480.5,555.1 1478.1,558.4 1475.8,561.8 1473.6,565.2 1471.3,568.6 1469.1,572.1 1466.8,575.5 1464.6,579 1462.3,582.5 1460.1,586 1457.9,589.5 1455.7,593.1 1453.5,596.7 1451.3,600.2 1449.2,603.8 1447,607.5 1444.8,611.1 1442.7,614.7 1440.6,618.4 1438.5,622.1 1436.5,625.9 1434.5,629.6 1432.7,633.5 1431.6,636.1 1431.1,637.4 1429.7,641.4 1429.1,645.6 1429.6,649.1 1429.8,650.3 1431.8,655.3 1431.8,655.4 1434.7,660.7 1438,665.3 1439.5,666.7 1441.9,669 1446.4,671.8 1451.3,674 1456.3,676 1461.4,677.9Z"/><path fill="#22b2d5" d="M1444.8,668.4 1447.5,670 1452.3,672.3 1457.3,674.3 1462.4,676.2 1467.5,678 1472.8,679.6 1478.1,681.2 1483.4,682.7 1488.9,684.1 1494.4,685.3 1500.1,686.2 1503.7,686.4 1506.2,686.6 1512.7,686 1515.5,685.5 1519.9,684.4 1523.6,683.4 1527.6,682 1530.4,680.9 1535.8,678 1536.2,677.7 1539.9,674.7 1543.1,671.2 1546,667.6 1548.6,663.9 1551.1,660.2 1553.5,656.5 1555.8,652.7 1558.1,649 1560.3,645.3 1562.5,641.6 1564.7,637.9 1566.2,635.2 1566.8,634.2 1569,630.5 1571.1,626.8 1573.2,623.2 1575.2,619.5 1577.3,615.9 1579.2,612.2 1581.2,608.6 1581.7,607.6 1583.1,604.9 1585,601.3 1586.9,597.7 1588.8,594.1 1590.7,590.5 1592.5,586.9 1594.2,583.3 1595.8,579.7 1597.3,576 1598.6,572.3 1599.5,568.6 1599.6,565 1599.6,564.6 1598.5,560.3 1597.5,558.3 1596,555.6 1594.5,553.3 1592.4,550.6 1591,549.1 1587.1,545.7 1585.3,544.7 1582.7,543.3 1578,541.3 1573.2,539.5 1568.3,537.9 1563.4,536.4 1558.4,535 1553.5,533.6 1548.4,532.4 1543.3,531.2 1538.2,530.2 1532.9,529.5 1529.5,529.3 1527.3,529.2 1521.2,529.7 1518.7,530.2 1514.6,531 1511.2,532 1507.5,533.2 1504.9,534.1 1499.8,536.6 1499.4,536.9 1495.9,539.5 1492.8,542.6 1490.1,545.8 1487.5,549 1485.1,552.3 1482.7,555.7 1480.4,559 1478.1,562.4 1475.8,565.9 1473.6,569.3 1471.3,572.7 1469.7,575.3 1469,576.2 1466.8,579.7 1464.5,583.1 1462.3,586.7 1460.1,590.2 1457.9,593.7 1455.8,597.3 1453.6,600.9 1453,601.9 1451.4,604.5 1449.3,608.1 1447.1,611.8 1445,615.4 1442.8,619.1 1440.8,622.8 1438.7,626.5 1436.8,630.3 1435,634.1 1433.3,638 1432,642.1 1431.6,645.9 1431.6,646.4 1432.3,651.1 1433.2,653.2 1434.5,656.2 1435.9,658.8 1437.9,661.7 1439.1,663.5 1443,667.2Z"/><path fill="#1abcca" d="M1456.3,671.9 1458.3,672.7 1463.3,674.6 1468.5,676.3 1473.7,678 1479,679.6 1484.4,681 1489.8,682.4 1492,682.8 1495.4,683.6 1501.1,684.5 1507.2,684.8 1511.9,684.4 1513.8,684.1 1520.8,682.5 1521,682.4 1527.8,680.1 1528.9,679.5 1533.4,677.3 1537.5,674 1539.5,671.9 1540.8,670.5 1543.7,666.9 1546.4,663.2 1548.9,659.5 1551.3,655.8 1553.7,652.1 1555.9,648.4 1558.2,644.7 1560.4,641 1562.6,637.3 1564.8,633.6 1567,629.9 1569.1,626.3 1571.3,622.6 1573.3,619 1575.3,615.3 1577.2,611.6 1579.1,608 1581,604.3 1582.9,600.7 1584.8,597.1 1586.7,593.5 1588.6,589.9 1590.3,586.3 1592,582.7 1593.6,579.1 1595.1,575.4 1596.4,571.7 1596.7,570.1 1597.2,567.9 1597.3,563.9 1596.3,560.5 1596,559.6 1593.5,555 1593.4,554.9 1590.1,550.7 1589,549.7 1586.2,547.3 1581.8,544.8 1577.1,542.7 1574.2,541.7 1572.3,541 1567.5,539.3 1562.6,537.8 1557.6,536.4 1552.6,535.1 1547.6,533.8 1542.5,532.7 1540.4,532.3 1537.3,531.7 1532,530.9 1526.4,530.7 1522,531.1 1520.2,531.3 1513.8,532.7 1513.5,532.8 1507.3,534.8 1506.2,535.3 1502,537.3 1498.1,540.1 1496.3,541.9 1495,543.2 1492.2,546.4 1489.6,549.6 1487.1,552.9 1484.7,556.3 1482.4,559.6 1480.1,563 1477.8,566.4 1475.6,569.9 1473.3,573.3 1471,576.8 1468.7,580.2 1466.4,583.7 1464.2,587.2 1462,590.7 1459.8,594.3 1457.7,597.9 1455.6,601.5 1453.5,605.1 1451.3,608.7 1449.2,612.4 1447,616 1444.9,619.7 1442.9,623.4 1440.9,627.2 1438.9,631 1437.1,634.8 1435.5,638.7 1435,640.4 1434.3,642.8 1433.9,647.1 1434.6,650.9 1434.9,651.8 1437.1,656.8 1437.2,657 1440.3,661.7 1441.3,662.8 1444.1,665.5 1448.5,668.4 1453.3,670.7Z"/><path fill="#16c6bd" d="M1445.5,664 1449.5,666.7 1454.3,669 1459.2,671.1 1464.3,673 1469.4,674.8 1474.7,676.4 1480,678 1485.3,679.4 1490.8,680.8 1496.4,681.9 1502.1,682.8 1507.6,683.1 1508.2,683.1 1514.9,682.3 1517.8,681.6 1522.2,680.4 1525.2,679.3 1530.5,676.8 1531,676.5 1535.2,673.3 1538.6,669.8 1541.5,666.2 1544.2,662.6 1546.7,658.9 1547.4,657.7 1549.1,655.2 1551.5,651.5 1553.8,647.7 1556,644 1558.3,640.3 1560.5,636.7 1562.7,633 1564.9,629.3 1567.2,625.7 1569.3,622.1 1571.4,618.4 1573.3,614.7 1575.2,611.1 1577.1,607.4 1579,603.7 1580.9,600.1 1582.7,596.5 1584.6,592.9 1586.4,589.3 1588.2,585.7 1589.4,583.2 1589.9,582.1 1591.5,578.5 1592.9,574.8 1594.2,571.1 1595,567.3 1595,563.3 1594.9,562.9 1593.5,558.9 1592.4,556.9 1590.5,554.1 1589.2,552.3 1585.3,548.8 1584.9,548.6 1581,546.2 1576.3,544.2 1571.5,542.4 1566.7,540.7 1561.8,539.2 1556.8,537.8 1551.8,536.4 1546.7,535.2 1541.6,534.1 1536.4,533.1 1531.1,532.4 1525.9,532.2 1525.4,532.2 1519.2,532.9 1516.5,533.5 1512.4,534.6 1509.6,535.5 1504.7,537.7 1504.3,537.9 1500.3,540.7 1497.1,543.8 1494.3,547 1491.7,550.2 1489.2,553.5 1488.4,554.5 1486.8,556.8 1484.4,560.2 1482.1,563.6 1479.9,567 1477.6,570.4 1475.3,573.9 1473,577.3 1470.6,580.8 1468.3,584.2 1466,587.7 1463.8,591.3 1461.7,594.8 1459.6,598.5 1457.6,602.1 1455.5,605.7 1453.4,609.3 1451.2,613 1449.1,616.6 1447,620.3 1445,624.1 1443.6,626.7 1443,627.8 1441.1,631.6 1439.3,635.4 1437.7,639.4 1436.5,643.4 1436.2,647.8 1436.3,648.2 1437.3,652.6 1438.3,654.8 1440.1,657.9 1441.4,659.9 1445.1,663.8Z"/><path fill="#15ceb1" d="M1453.2,666.4 1455.3,667.4 1460.2,669.5 1465.2,671.4 1470.4,673.2 1475.6,674.9 1480.9,676.4 1486.3,677.9 1491.7,679.2 1497.3,680.3 1499.8,680.7 1503.1,681.1 1509.2,681.3 1514.7,680.6 1515.9,680.4 1522.6,678.5 1523.5,678.2 1528.5,675.8 1532.8,672.7 1532.9,672.6 1536.3,669.1 1539.3,665.5 1542,661.9 1544.6,658.2 1547,654.5 1549.4,650.8 1551.7,647.1 1553.9,643.4 1556.2,639.7 1558.5,636.1 1560.7,632.4 1563,628.8 1565.3,625.2 1567.5,621.5 1569.5,617.9 1571.5,614.2 1573.3,610.5 1575.1,606.8 1577,603.2 1578.8,599.5 1580.7,595.9 1582.5,592.3 1584.4,588.7 1586.1,585.1 1587.8,581.5 1589.4,577.9 1590.8,574.2 1592,570.5 1592.8,566.7 1592.8,566.6 1592.7,562.6 1591.3,558.8 1591.1,558.2 1588.2,554 1587.5,553.3 1584.4,550.3 1580.1,547.7 1577.5,546.5 1575.5,545.6 1570.7,543.8 1565.9,542.1 1560.9,540.6 1556,539.1 1551,537.8 1545.9,536.6 1540.8,535.5 1535.6,534.5 1533.2,534.2 1530.2,533.8 1524.5,533.7 1519.4,534.3 1518.3,534.5 1512.1,536.1 1511.3,536.4 1506.5,538.5 1502.5,541.3 1502.4,541.3 1499.2,544.4 1496.3,547.5 1493.7,550.8 1491.2,554.1 1488.8,557.4 1486.4,560.8 1484.1,564.2 1481.8,567.6 1479.5,571 1477.2,574.4 1474.8,577.9 1472.5,581.3 1470.1,584.8 1467.8,588.3 1465.6,591.8 1463.5,595.4 1461.5,599 1459.5,602.6 1457.4,606.3 1455.4,609.9 1453.3,613.6 1451.2,617.3 1449.1,620.9 1447,624.7 1445,628.4 1443.2,632.2 1441.4,636.1 1439.9,640 1438.8,644.1 1438.8,644.2 1438.6,648.5 1439.6,652.7 1439.9,653.3 1442.5,658 1443.2,658.8 1446.2,662.1 1450.5,665.1Z"/><path fill="#1ad6a4" d="M1446.8,659.9 1447.2,660.4 1451.5,663.4 1456.2,665.8 1461.1,667.9 1466.2,669.8 1471.3,671.6 1476.5,673.3 1481.8,674.8 1487.2,676.3 1492.7,677.6 1498.3,678.7 1504,679.4 1510.2,679.6 1510.9,679.5 1517.1,678.5 1519.8,677.7 1524.9,675.6 1526.1,675 1530.6,671.9 1534.1,668.4 1537.1,664.9 1537.6,664.2 1539.8,661.3 1542.4,657.6 1544.9,653.9 1547.2,650.2 1549.6,646.5 1551.9,642.8 1554.2,639.1 1556.5,635.5 1558.9,631.9 1561.3,628.3 1563.7,624.7 1565.9,621 1567.9,617.4 1569.8,613.7 1571.6,610 1573.4,606.3 1575.1,602.6 1576.8,599 1578.7,595.3 1580.5,591.7 1582.3,588.1 1584.1,584.5 1585.7,580.9 1587.3,577.3 1588.5,574.3 1588.7,573.6 1589.8,569.9 1590.5,566.1 1590.3,562 1590,561.1 1588.4,557.5 1587.2,555.7 1583.9,552.2 1583.5,551.9 1579.2,549.2 1574.6,547 1569.9,545.2 1565,543.5 1560.1,542 1555.2,540.5 1550.2,539.2 1545.1,538 1539.9,536.9 1534.7,535.9 1529.3,535.3 1523.6,535.2 1523,535.3 1517.2,536.2 1514.6,536.9 1509.9,538.7 1508.8,539.2 1504.6,541.9 1501.3,545 1498.4,548.1 1497.9,548.7 1495.7,551.4 1493.2,554.6 1490.8,558 1488.4,561.3 1486.1,564.7 1483.8,568.1 1481.5,571.6 1479,575 1476.6,578.4 1474.1,581.8 1471.7,585.2 1469.4,588.7 1467.2,592.3 1465.1,595.8 1463.1,599.5 1461.2,603.1 1459.3,606.8 1457.3,610.5 1455.2,614.2 1453.2,617.9 1451.1,621.6 1449.1,625.3 1447.1,629 1445.2,632.8 1443.8,636 1443.5,636.7 1442.1,640.7 1441.1,644.8 1440.9,649.2 1441.2,650.2 1442.6,654.2 1443.7,656.1Z"/><path fill="#24dc97" d="M1452.4,661.7 1452.5,661.7 1457.2,664.2 1462.1,666.3 1467.1,668.2 1472.3,670 1477.5,671.7 1482.8,673.2 1488.1,674.7 1493.6,675.9 1499.2,677 1505,677.7 1505.2,677.7 1511.3,677.7 1516.8,676.8 1518.3,676.4 1523.5,674.3 1526.9,672.1 1528.2,671.2 1531.8,667.8 1534.8,664.2 1537.6,660.6 1540.3,656.9 1542.7,653.3 1545.1,649.6 1547.5,645.9 1549.8,642.2 1552.1,638.5 1552.2,638.4 1554.6,634.9 1557.1,631.3 1559.6,627.8 1562,624.2 1564.2,620.6 1566.3,616.9 1568.2,613.2 1569.9,609.5 1571.6,605.8 1573.2,602.1 1574.8,598.5 1574.8,598.4 1576.6,594.7 1578.4,591.1 1580.2,587.5 1582,583.9 1583.6,580.3 1585.2,576.7 1586.5,573 1587.6,569.3 1588.3,565.4 1588.2,564.3 1587.9,561.3 1586.2,557.6 1585.5,556.7 1582.6,553.5 1578.5,550.7 1578.4,550.7 1573.8,548.5 1569.1,546.6 1564.2,544.9 1559.3,543.4 1554.3,541.9 1549.3,540.6 1544.2,539.4 1539.1,538.3 1533.8,537.4 1528.4,536.7 1528.3,536.7 1522.6,536.8 1517.4,537.6 1516.1,538 1511.2,539.8 1508,541.8 1506.8,542.5 1503.4,545.6 1500.5,548.7 1497.8,551.9 1495.2,555.2 1492.8,558.6 1490.4,561.9 1488.1,565.3 1485.8,568.7 1483.4,572.1 1483.3,572.2 1480.9,575.5 1478.3,578.9 1475.8,582.3 1473.3,585.7 1470.9,589.2 1468.7,592.7 1466.7,596.3 1464.8,600 1462.9,603.7 1461.1,607.4 1459.3,611 1459.3,611.1 1457.2,614.8 1455.2,618.5 1453.2,622.2 1451.1,625.9 1449.2,629.7 1447.4,633.5 1445.7,637.4 1444.3,641.4 1443.3,645.5 1443.3,646.7 1443.5,650 1444.9,654.1 1445.5,655.1 1448.3,658.5Z"/><path fill="#31e189" d="M1465.4,665.6 1468.1,666.7 1473.2,668.4 1478.4,670.1 1483.7,671.6 1489.1,673.1 1492,673.7 1494.6,674.3 1500.2,675.3 1506.1,675.9 1512.3,675.8 1513.3,675.7 1519.6,674 1520.9,673.5 1525.7,670.4 1529.5,667.1 1530.3,666.1 1532.6,663.5 1535.4,659.9 1538.1,656.3 1540.6,652.6 1543,648.9 1545.3,645.2 1547.7,641.6 1550.2,638 1552.8,634.4 1555.4,630.8 1557.9,627.3 1560.3,623.7 1562.2,620.7 1562.6,620.1 1564.7,616.4 1565,615.8 1566.5,612.8 1568.2,609 1569.8,605.3 1571.4,601.5 1572.9,597.8 1574.6,594.2 1576.4,590.5 1578.1,586.9 1579.9,583.3 1581.5,579.7 1583,576.1 1584.4,572.4 1585.2,569.7 1585.4,568.6 1585.9,564.8 1585.3,560.6 1584.9,559.7 1582.1,555.7 1581.6,555.2 1577.5,552.3 1572.9,550 1568.2,548.1 1566,547.3 1563.4,546.3 1558.5,544.8 1553.5,543.3 1548.5,542 1543.4,540.8 1540.6,540.2 1538.2,539.7 1533,538.8 1527.5,538.3 1521.6,538.4 1520.7,538.6 1514.8,540.1 1513.7,540.5 1509.1,543.2 1505.6,546.2 1504.7,547 1502.6,549.3 1499.9,552.5 1497.3,555.8 1494.9,559.1 1492.5,562.5 1490.1,565.9 1487.7,569.3 1485.2,572.6 1482.6,576 1480,579.4 1477.4,582.7 1474.9,586.2 1472.9,589 1472.5,589.6 1470.3,593.2 1470,593.8 1468.3,596.8 1466.4,600.4 1464.7,604.2 1462.9,607.9 1461.1,611.6 1459.3,615.4 1457.3,619.1 1455.2,622.8 1453.3,626.5 1451.3,630.3 1449.5,634.1 1447.9,638 1446.9,640.9 1446.5,642 1445.8,646.2 1446,650.7 1446.4,651.7 1449,656.1 1449.5,656.7 1453.6,659.9 1458.2,662.5 1463.1,664.7Z"/><path fill="#41e579" d="M1454,657.7 1454.7,658.2 1459.3,660.8 1464.1,663 1469.1,665 1474.2,666.8 1479.4,668.4 1484.7,670 1490.1,671.4 1495.6,672.6 1501.2,673.5 1507.1,674.1 1508.1,674.1 1513.6,673.6 1517.7,672.5 1521.5,670.7 1523.2,669.6 1527,666.3 1530.2,662.8 1533.1,659.2 1535.8,655.6 1538.3,652 1538.4,652 1540.8,648.3 1543.2,644.6 1545.6,641 1548.3,637.4 1551,633.8 1553.6,630.3 1556.2,626.8 1558.6,623.2 1560.9,619.6 1562.9,615.9 1564.8,612.3 1566.5,608.5 1568.1,604.8 1569.6,601 1571,597.3 1572.6,593.6 1574.3,589.9 1576,586.3 1577.7,582.7 1577.8,582.6 1579.4,579.1 1580.8,575.4 1582.1,571.7 1583,568 1583.4,564.1 1583.2,562.7 1582.3,559.8 1580.5,557.2 1577.2,554.3 1576.5,553.9 1572,551.6 1567.3,549.6 1562.5,547.8 1557.6,546.2 1552.6,544.8 1547.6,543.5 1542.5,542.3 1537.3,541.2 1532,540.4 1526.5,539.9 1525.6,539.9 1520.4,540.3 1516.6,541.3 1513,543 1511.5,543.9 1507.9,546.8 1504.8,549.9 1502,553.1 1499.4,556.4 1497,559.7 1496.9,559.7 1494.5,563.1 1492.1,566.5 1489.7,569.8 1487.1,573.2 1484.4,576.5 1481.7,579.8 1479.1,583.2 1476.5,586.6 1474.2,590.1 1472,593.7 1470,597.3 1468.1,600.9 1466.3,604.7 1464.7,608.4 1463,612.2 1461.3,616 1459.3,619.7 1457.3,623.4 1455.4,627.2 1455.3,627.2 1453.5,630.9 1451.7,634.8 1450.2,638.7 1448.9,642.8 1448.2,647 1448.3,648.5 1449.1,651.7 1450.8,654.5Z"/><path fill="#52e96a" d="M1463.8,660.6 1465.2,661.3 1470.1,663.3 1475.2,665.1 1480.4,666.7 1485.7,668.3 1491.1,669.6 1496.6,670.8 1498.2,671.1 1502.3,671.7 1508.3,672 1514.2,671.4 1515,671.2 1520.2,668.7 1524.4,665.6 1524.5,665.6 1527.8,662.1 1530.7,658.5 1533.4,654.9 1536,651.2 1538.5,647.6 1541,643.9 1543.5,640.3 1546.3,636.8 1548.5,634.1 1549.1,633.3 1551.9,629.8 1554.4,626.3 1556.9,622.7 1559.2,619.1 1561.2,615.4 1563.1,611.8 1564.8,608 1566.4,604.3 1567.8,600.5 1568.1,599.7 1569.1,596.7 1570.5,593 1572.1,589.3 1573.8,585.7 1575.4,582.1 1577,578.4 1578.5,574.8 1579.7,571.1 1580.6,567.3 1580.6,567.2 1580.6,563.3 1579.3,559.3 1578.9,558.8 1575.4,555.8 1571.1,553.2 1567.8,551.7 1566.4,551.1 1561.6,549.4 1556.7,547.8 1551.7,546.3 1546.7,545 1541.6,543.8 1536.4,542.7 1534.9,542.5 1531,542 1525.4,541.8 1519.9,542.3 1519.1,542.5 1514.3,544.6 1510.3,547.4 1510.2,547.5 1507.1,550.6 1504.3,553.8 1501.6,557 1499.1,560.4 1496.7,563.7 1494.3,567.1 1491.7,570.4 1488.9,573.7 1486.7,576.3 1486.1,577 1483.3,580.3 1480.7,583.7 1478.2,587.1 1475.8,590.6 1473.6,594.1 1471.6,597.8 1469.8,601.4 1468,605.1 1466.4,608.9 1466.1,609.8 1464.9,612.7 1463.3,616.6 1461.5,620.3 1459.6,624.1 1457.7,627.8 1455.8,631.6 1454.1,635.5 1452.6,639.4 1451.4,643.5 1451.4,643.6 1451.1,647.8 1452.2,652.2 1452.6,652.7 1456,656.1 1460.4,658.9Z"/><path fill="#65eb5b" d="M1457.9,654.4 1461.7,656.8 1466.4,659.2 1471.3,661.3 1476.3,663.2 1481.5,664.9 1486.8,666.4 1492.2,667.7 1497.8,668.8 1503.5,669.6 1508.7,669.8 1509.6,669.7 1516.9,667.8 1517,667.8 1521.4,664.6 1525,661.3 1528.2,657.8 1530.6,654.8 1531.1,654.2 1533.7,650.5 1536.2,646.9 1538.7,643.3 1541.4,639.7 1544.3,636.2 1547.2,632.7 1550.1,629.3 1552.7,625.7 1555.2,622.2 1556.3,620.3 1557.5,618.6 1559.5,614.9 1560.4,613.1 1561.4,611.3 1563.1,607.5 1564.6,603.8 1565.9,600 1567.1,596.2 1568.4,592.4 1569.9,588.7 1571.5,585 1573.1,581.4 1574.7,577.8 1575,577.1 1576.1,574.1 1577.1,570.3 1577.7,566.5 1577.5,562.4 1574.3,557.8 1573.7,557.3 1570,555.1 1565.4,552.9 1560.6,551.1 1555.7,549.4 1550.8,547.9 1545.7,546.6 1540.6,545.5 1535.3,544.5 1529.9,543.9 1525,543.7 1524.2,543.8 1517.3,545.5 1513.1,548.3 1509.7,551.3 1506.7,554.5 1504.4,557.1 1503.9,557.7 1501.4,561 1498.9,564.3 1496.4,567.7 1493.8,571 1490.9,574.3 1488,577.5 1485.1,580.8 1482.4,584.2 1479.9,587.6 1478.6,589.4 1477.5,591.1 1475.3,594.6 1474.3,596.4 1473.3,598.2 1471.5,601.9 1469.8,605.7 1468.3,609.5 1466.9,613.3 1465.4,617.2 1463.7,621 1461.8,624.8 1460,628.5 1458.1,632.3 1457.8,633 1456.5,636.2 1455.2,640.2 1454.3,644.4 1454.2,648.8 1457.3,653.8Z"/><path fill="#77ec4d" d="M1468.4,657.5 1472.5,659.3 1477.5,661.2 1482.7,662.9 1488,664.4 1493.4,665.7 1498.1,666.6 1499,666.7 1505,667.1 1511.4,666.6 1512.3,666.4 1518.1,663.6 1520.3,662 1522.1,660.4 1525.3,656.9 1528.2,653.3 1530.9,649.7 1533.5,646.1 1536.3,642.5 1539.2,639.1 1540.1,638.1 1542.3,635.6 1545.3,632.2 1548.2,628.7 1550.9,625.2 1553.4,621.7 1555.7,618.1 1557.8,614.4 1559.6,610.7 1561.3,607 1562.7,603.2 1564,599.4 1565.2,595.6 1566,592.8 1566.3,591.8 1567.5,588 1568.9,584.3 1570.5,580.6 1571.9,577 1573.2,573.3 1574.2,569.5 1574.5,567.7 1574.4,565.6 1573.1,561.2 1572.7,560.6 1568.7,557.3 1564.3,554.8 1563.5,554.5 1559.5,552.9 1554.7,551.2 1549.7,549.8 1544.6,548.4 1539.5,547.3 1535.1,546.5 1534.2,546.4 1528.6,546.1 1522.5,546.5 1521.7,546.7 1516.3,549.2 1514.2,550.7 1512.5,552.1 1509.4,555.2 1506.6,558.5 1504,561.7 1501.4,565.1 1498.8,568.4 1495.8,571.6 1495,572.5 1492.8,574.8 1489.8,578.1 1486.9,581.3 1484.1,584.7 1481.6,588.1 1479.2,591.6 1477,595.1 1475,598.7 1473.2,602.4 1471.6,606.2 1470.2,610 1468.8,613.9 1467.8,616.7 1467.5,617.8 1466.1,621.7 1464.4,625.5 1462.6,629.3 1460.9,633.2 1459.4,637.1 1458.1,641.1 1457.7,643.1 1457.6,645.4 1458.8,650.2 1459.2,650.8 1463.1,654.4 1467.6,657.2Z"/><path fill="#87ec41" d="M1466.1,652.4 1469.3,654.4 1474,656.7 1479,658.7 1484.1,660.4 1489.4,661.9 1494.9,663.1 1500.6,663.9 1505,664.1 1506.7,664.1 1513.7,662.3 1514,662.1 1518.2,659.2 1521.9,655.9 1525.1,652.4 1527.2,650 1528,648.9 1530.7,645.3 1533.6,641.7 1536.7,638.3 1540.1,635 1543.3,631.6 1544.8,629.9 1546.3,628.2 1549.1,624.7 1551.6,621.2 1554,617.6 1556,613.9 1557.9,610.2 1559.5,606.5 1560.9,602.7 1561.5,600.8 1562,598.8 1562.9,595 1563.8,591.1 1564.8,587.2 1566.2,583.5 1567.7,579.9 1568.1,578.7 1569,576.1 1570,572.4 1570.5,568.5 1570.3,564.6 1570.3,564.4 1567.1,560 1566,559.2 1562.8,557.3 1558.2,555.2 1553.4,553.4 1548.4,551.9 1543.3,550.6 1538.1,549.6 1532.7,548.9 1528.6,548.7 1527,548.8 1520.4,550.3 1520.1,550.5 1516.1,553.1 1512.6,556.1 1509.5,559.3 1507.5,561.5 1506.7,562.5 1504.1,565.8 1501.3,569.1 1498.2,572.3 1494.9,575.4 1491.8,578.6 1490.2,580.2 1488.7,581.9 1485.9,585.2 1483.3,588.6 1480.9,592.1 1478.7,595.6 1476.8,599.2 1475,603 1473.4,606.7 1472.8,608.7 1472.1,610.6 1471,614.5 1469.9,618.5 1468.7,622.5 1467.2,626.3 1465.4,630.2 1464.9,631.3 1463.9,634.1 1462.7,638.1 1461.9,642.2 1461.8,646.4 1461.9,646.7 1464.9,651.4Z"/><path fill="#98ea36" d="M1468.6,648.7 1471.3,651.1 1475.8,653.7 1480.7,655.9 1485.8,657.6 1491.1,659 1496.7,660.1 1502.6,660.5 1506.9,660.2 1509.2,659.7 1513.5,657.8 1517.8,654.6 1518.9,653.6 1521.2,651.2 1524.2,647.7 1527.2,644.2 1530.5,640.8 1534.3,637.6 1534.4,637.5 1537.7,634.3 1541.1,630.9 1544.3,627.6 1547.3,624.2 1549.9,620.6 1551.8,617.7 1552.2,617.1 1554.3,613.4 1554.6,612.7 1556.1,609.7 1557.7,606 1558.9,602.1 1559.8,598.2 1560.6,594.3 1561.4,590.5 1561.4,590.4 1561.9,586.4 1562.8,582.5 1564,578.8 1565.2,575.1 1565.8,572.4 1566,571.2 1565.9,567.2 1564.8,564 1563.7,562.5 1561,560.4 1556.6,557.9 1551.8,556 1546.9,554.5 1541.8,553.2 1536.5,552.3 1530.9,551.9 1526.9,552.2 1524.6,552.6 1520.6,554.4 1516.5,557.2 1515.4,558.1 1513.2,560.3 1510.3,563.5 1507.4,566.8 1504.2,569.9 1500.6,573 1500.5,573 1497.2,576.1 1493.9,579.2 1490.7,582.4 1487.6,585.7 1485,589.1 1483,591.9 1482.6,592.6 1480.4,596.1 1480,596.8 1478.4,599.7 1476.7,603.5 1475.4,607.3 1474.3,611.2 1473.3,615.2 1472.4,619.1 1472.4,619.2 1471.7,623.4 1470.6,627.4 1469.2,631.3 1467.7,635.2 1466.9,638 1466.7,639.3 1466.6,643.7 1467.5,647.1Z"/><path fill="#a4e632" d="M1473.3,645.7 1474,646.6 1478.1,649.9 1482.8,652.3 1487.9,654.1 1493.3,655.4 1499,656.2 1505.2,656 1506.6,655.7 1512.4,653 1513.7,652.1 1516.3,649.8 1519.7,646.4 1523.1,643 1526.8,640.1 1527,639.8 1531.1,636.6 1535.1,633.5 1538,631.1 1538.9,630.3 1542.2,627 1545.5,623.6 1548.3,620.2 1550.8,616.7 1552.9,613 1554.6,609.3 1555.9,605.5 1556.8,601.5 1557.7,597.6 1557.8,596.6 1558.1,593.6 1558.3,589.5 1558.4,585.4 1558.5,585.1 1558.7,581.4 1559.5,577.5 1560.4,573.7 1560.8,570.9 1560.7,569.8 1559.3,565.3 1558.6,564.5 1554.5,561.4 1549.9,559.3 1545,557.7 1539.9,556.5 1534.4,555.8 1528.5,555.9 1527.2,556.2 1521.7,558.7 1520.5,559.5 1517.9,561.7 1514.7,564.8 1511.4,567.9 1507.9,570.6 1507.6,570.9 1503.6,573.8 1499.7,576.8 1496.8,579.1 1496,579.8 1492.7,583 1489.4,586.2 1486.5,589.5 1483.9,592.9 1481.7,596.5 1479.9,600.2 1478.5,604 1477.5,607.9 1476.4,611.9 1476.2,612.9 1475.8,616 1475.5,620.2 1475.1,624.4 1475,624.7 1474.6,628.6 1473.6,632.6 1472.6,636.7 1472.1,639.6 1472,640.9Z"/><path fill="#b0e130" d="M1480.6,643.5 1481.4,644.4 1485.7,647.4 1490.7,649.4 1496.1,650.5 1502.2,650.7 1503.7,650.4 1509.8,647.8 1510.2,647.5 1513.7,644.6 1517.8,641.4 1520.7,640 1522.9,638.6 1527.7,635.6 1530.2,634.2 1532.3,632.7 1536.4,629.6 1540.2,626.4 1541.4,625.2 1543.7,623.1 1546.8,619.7 1549.5,616.3 1551.6,612.6 1553.1,608.8 1554.1,604.9 1554.5,602.4 1554.8,600.9 1555.2,596.9 1555.3,592.8 1555.3,590.7 1555,588.5 1554.3,584.2 1554.2,582.2 1553.5,579.9 1553.8,575.9 1554.1,572.3 1554,571.9 1552.3,567.4 1551.6,566.5 1547.3,563.8 1542.5,562 1537.2,560.9 1531.4,560.8 1530,561.1 1524.2,563.4 1523.8,563.7 1520.4,566.4 1516.5,569.4 1513.7,570.7 1511.6,572 1506.9,574.8 1504.5,576.1 1502.4,577.6 1498.4,580.5 1494.6,583.6 1493.4,584.7 1491.2,586.7 1488,590 1485.2,593.3 1483.1,596.9 1481.4,600.6 1480.3,604.5 1479.7,607.1 1479.4,608.5 1478.8,612.6 1478.6,616.8 1478.5,618.9 1478.8,621.1 1479.2,625.6 1479.3,627.7 1479.9,630.1 1479.5,634.4 1479,638.2 1479,638.6Z"/><path fill="#bbdc2f" d="M1490.1,637.5 1490.8,638.9 1495.2,641.7 1501.2,642 1503.1,641.4 1508.2,640.5 1510.7,639.3 1515.8,638 1517.8,637.1 1523.8,634.6 1524,634.5 1529.2,631.7 1532.8,629.6 1533.9,628.8 1538.3,625.8 1542.1,622.6 1544.2,620.4 1545.3,619.3 1548.1,615.9 1550.2,612.2 1551.5,608.4 1551.8,607.1 1552.5,604.5 1553,600.4 1552.7,596.2 1552.7,595.1 1552.2,591.9 1551.3,587.5 1551.3,587.3 1549.4,582.8 1548.8,581.3 1546.6,577.9 1546,576 1543.4,572.9 1542.6,571.6 1538.3,569 1532.5,568.8 1530.7,569.3 1525.8,570.2 1523.4,571.3 1518.5,572.6 1516.5,573.4 1510.7,575.7 1510.5,575.8 1505.4,578.4 1501.9,580.5 1500.8,581.2 1496.4,584.1 1492.7,587.2 1490.6,589.3 1489.5,590.4 1486.6,593.7 1484.4,597.3 1482.9,601.1 1482.6,602.3 1481.8,605 1481.2,609 1481.3,613.3 1481.3,614.4 1481.6,617.7 1482.5,622.2 1482.5,622.4 1484.2,627.1 1484.7,628.7 1486.9,632.2 1487.4,634.3Z"/><path fill="#c7d431" d="M1490.9,629.1 1494.6,632.5 1499.4,634.7 1505,635.5 1511,635 1511.4,635 1518.3,633.6 1519.4,633.2 1526,630.8 1531.6,628.1 1534.6,626.5 1536.5,625.3 1540.8,622.2 1544,618.9 1546.8,615.5 1548.9,611.9 1550.3,608 1551.2,604.1 1551.1,599.9 1551,598.1 1550.5,595.5 1549.1,591 1546.8,586.2 1546.5,585.4 1543,581.1 1542.8,580.9 1539.1,577.7 1534.4,575.6 1528.9,574.8 1523.1,575.3 1522.7,575.3 1516,576.6 1514.9,577.1 1508.6,579.3 1508.5,579.4 1503,581.9 1500.1,583.4 1498.2,584.6 1494,587.5 1490.7,590.7 1487.9,594.1 1485.7,597.7 1484.2,601.4 1483.1,605.3 1483,609.6 1483.1,611.4 1483.6,614 1484.8,618.6 1486.9,623.6 1487.3,624.4 1490.7,628.9Z"/><path fill="#d1cc33" d="M1492.3,625.2 1492.6,625.6 1496.7,628.9 1501.6,631 1507.1,632 1513.3,631.7 1514,631.6 1520,630.7 1522.6,629.8 1527.4,628.4 1529.3,627.5 1534.8,624.8 1536,624.1 1539.4,621.9 1542.9,618.6 1545.7,615.2 1547.8,611.5 1549.1,607.7 1549.9,603.7 1549.6,600.5 1549.4,599.4 1548.2,594.9 1547.8,593.3 1545.7,590 1544.8,588.2 1541.5,584.7 1541.2,584.2 1537.1,581.1 1532.3,579.1 1526.9,578.2 1520.9,578.4 1520.2,578.6 1514.4,579.4 1511.8,580.3 1507.1,581.6 1505.2,582.5 1499.9,585.1 1498.7,585.8 1495.3,587.9 1491.8,591.1 1488.9,594.4 1486.8,598 1485.3,601.8 1484.4,605.7 1484.6,609 1484.8,610.1 1485.8,614.6 1486.2,616.2 1488.1,619.6 1489,621.5Z"/><path fill="#d9c435" d="M1491.8,620.7 1494,623.3 1498.3,626.3 1503.2,628.2 1508.6,629.3 1514.6,629.5 1518.9,628.7 1521.3,628.5 1527.1,626.8 1528.6,626.4 1533.1,624.3 1537.2,622.1 1538.1,621.5 1541.7,618.2 1544.6,614.8 1546.7,611.2 1548,607.4 1548.6,603.3 1548.5,602.5 1547.8,598.9 1546.6,595.3 1546,594.2 1543.6,590.3 1542.1,589 1539.9,586.4 1535.6,583.6 1530.7,581.7 1525.4,580.7 1519.6,580.6 1515.4,581.3 1513.1,581.5 1507.4,583.1 1505.9,583.6 1501.5,585.6 1497.5,587.7 1496.6,588.3 1493,591.4 1490,594.7 1487.9,598.3 1486.4,602.1 1485.7,606.1 1485.8,607 1486.3,610.5 1487.4,614.2 1488,615.3 1490.4,619.3Z"/><path fill="#e1ba35" d="M1496.3,622 1499.5,624.3 1504.3,626.4 1509.8,627.4 1514.3,627.3 1515.8,627.5 1522.3,626.8 1524.7,626.1 1529.6,624.7 1531.5,623.8 1536.7,621.1 1538.6,619.6 1540.5,617.9 1543.5,614.5 1545.6,610.9 1546.8,607 1547.1,604.9 1547.2,602.9 1546.2,598.5 1545.7,596.9 1543.7,593.6 1542.6,591.9 1538.8,588.3 1537.6,587.7 1534.5,585.5 1529.7,583.5 1524.3,582.6 1519.9,582.6 1518.4,582.5 1512.1,583.1 1509.7,583.8 1505,585.1 1503,586 1497.9,588.7 1496.1,590.1 1494.1,591.7 1491.1,595 1489,598.6 1487.6,602.4 1487.2,604.6 1487.1,606.5 1487.9,611 1488.4,612.6 1490.3,616 1491.3,617.7 1495.2,621.4Z"/><path fill="#e6b035" d="M1492.8,616.7 1496,620.1 1500.4,622.7 1505.4,624.6 1510.7,625.8 1516.6,626.1 1522.3,625.4 1523.2,625.3 1529.9,623.3 1530.5,623.1 1535.3,620.6 1539.4,617.6 1540.5,616.4 1542.4,614.2 1544.4,610.6 1545.2,608.1 1545.7,606.7 1545.8,602.5 1544.8,598.5 1544.6,598 1541.8,593.4 1541.2,592.9 1538,589.6 1533.6,587 1528.7,585.2 1523.4,584.1 1517.7,583.8 1512.1,584.5 1511.3,584.6 1504.6,586.5 1504,586.7 1499.3,589.1 1495.2,592 1494.1,593.2 1492.2,595.4 1490,598.9 1489.2,601.4 1488.7,602.7 1488.5,606.9 1489.4,611 1489.5,611.5 1492.3,616.2Z"/><path fill="#eaa331" d="M1495.6,617.5 1496.7,618.7 1501.1,621.6 1506,623.5 1511.4,624.6 1517.4,624.8 1519.4,624.6 1523.9,624 1528.1,622.8 1531.4,621.5 1533.9,620.2 1538.3,617.3 1541.3,613.9 1543.4,610.3 1544.6,606.4 1544.4,602.1 1543.9,600 1542.9,597.5 1541.1,594.6 1538.4,592.1 1537.3,590.9 1532.9,588.1 1528.1,586.3 1522.8,585.2 1516.9,585 1514.9,585.3 1510.5,585.8 1506.4,587 1503.1,588.2 1500.6,589.5 1496.2,592.4 1493.2,595.7 1491.1,599.2 1489.7,603.1 1489.8,607.3 1490.3,609.4 1491.3,612 1493,615Z"/><path fill="#eb972c" d="M1498.9,618.5 1501.8,620.5 1506.6,622.5 1512.1,623.5 1516.1,623.6 1518,623.7 1524.6,622.8 1526.4,622.3 1532.3,619.9 1532.5,619.8 1537.3,617 1540.4,613.6 1542.5,610 1543.6,606.1 1543,601.7 1543,601.6 1541.1,597 1540.4,595.8 1536.6,592 1535.2,591.1 1532.3,589.2 1527.5,587.3 1522.1,586.3 1518.1,586.2 1516.3,586.1 1509.8,587 1508.1,587.5 1502.2,589.8 1502,589.9 1497.3,592.7 1494.2,595.9 1492,599.5 1490.8,603.4 1491.2,607.7 1491.2,607.9 1493,612.5 1493.7,613.7 1497.4,617.6Z"/><path fill="#eb8a27" d="M1503.6,619.9 1507.3,621.4 1511.4,622.2 1512.7,622.5 1518.6,622.8 1524.6,621.8 1525.3,621.6 1531.3,619.5 1533.2,618.4 1536.2,616.6 1539.4,613.3 1541.5,609.7 1542.5,605.8 1542.1,603 1541.8,601.4 1539.7,596.9 1539.4,596.5 1536.1,592.8 1531.7,590.2 1530.5,589.8 1526.9,588.3 1522.8,587.6 1521.5,587.3 1515.8,587 1509.8,588 1509.1,588.1 1503.2,590.2 1501.3,591.2 1498.3,593 1495.1,596.2 1492.9,599.8 1491.9,603.7 1492.1,606.4 1492.4,608.1 1494.4,612.6 1494.8,613 1498,616.7 1502.4,619.4Z"/><path fill="#ea7c21" d="M1496.5,613.5 1498.5,615.8 1502.9,618.6 1507.8,620.5 1513.2,621.6 1519.1,621.9 1522.9,621.3 1525.9,620.6 1530,619.1 1534.1,617 1535.1,616.3 1538.4,613 1540.5,609.4 1541.4,605.5 1541.3,604.5 1540.6,601 1539.1,597.9 1537.6,596 1535.6,593.7 1531.2,591 1526.4,589.2 1521,588.1 1515.2,587.8 1511.5,588.5 1508.5,589.1 1504.4,590.6 1500.5,592.6 1499.4,593.3 1496,596.5 1493.9,600 1492.9,604 1493,605 1493.7,608.4 1495,611.5Z"/><path fill="#e76e1b" d="M1498.2,614 1499,614.9 1503.4,617.8 1508.3,619.7 1513.7,620.8 1519.6,621 1521.1,620.8 1526.5,619.6 1528.8,618.7 1533.9,616 1535.2,614.9 1537.5,612.8 1539.6,609.1 1540.1,606.5 1540.2,605.1 1539.3,600.7 1538.5,598.9 1535.9,595.5 1535.1,594.6 1530.7,591.8 1525.9,590 1520.5,588.9 1514.7,588.7 1513.2,589 1507.9,590.1 1505.6,590.9 1500.5,593.6 1499.3,594.6 1497,596.7 1494.8,600.3 1494.2,603 1494.1,604.3 1494.9,608.8 1495.7,610.5Z"/><path fill="#e36015" d="M1500.5,614.7 1503.9,616.9 1508.8,618.9 1514.2,620 1518.9,620.1 1520.2,620.1 1527.1,618.6 1527.6,618.4 1532.6,615.6 1536.5,612.5 1538.6,608.9 1538.9,604.7 1538.1,600.3 1537.9,599.9 1534.5,595.5 1533.7,594.8 1530.3,592.7 1525.4,590.8 1520.1,589.7 1515.5,589.6 1514.2,589.6 1507.3,591.1 1506.9,591.3 1501.9,594 1498,597 1495.8,600.6 1495.4,604.7 1496.1,609.1 1496.3,609.5 1499.6,614Z"/><path fill="#de530f" d="M1503.7,615.6 1504.4,616.1 1509.2,618.1 1514.7,619.1 1515.6,619.1 1520.8,619 1525.9,617.9 1528,617 1531.3,615.2 1535.2,612.1 1537.3,608.5 1537.6,604.3 1537.1,601.4 1536.5,599.8 1533.9,596.5 1530.5,593.9 1529.8,593.5 1524.9,591.6 1519.6,590.5 1518.6,590.5 1513.6,590.7 1508.5,591.7 1506.5,592.6 1503.2,594.4 1499.3,597.4 1497.1,601 1496.7,605.1 1497.2,608 1497.7,609.6 1500.2,613Z"/><path fill="#d8470c" d="M1499.5,610.2 1500.8,611.9 1504.9,615.2 1509.7,617.2 1515.2,618.2 1521.4,617.9 1524.1,617.4 1529,615.3 1529.9,614.8 1533.9,611.7 1536,608.1 1536.2,604 1536.1,603.1 1534.7,599.3 1533.3,597.6 1529.2,594.4 1524.5,592.4 1519.1,591.4 1512.9,591.7 1510.3,592.2 1505.5,594.2 1504.5,594.7 1500.6,597.8 1498.4,601.4 1498,605.5 1498.2,606.3Z"/><path fill="#d03b07" d="M1501.3,610.7 1501.5,610.9 1505.5,614.2 1510.3,616.3 1515.8,617.3 1522,616.9 1522.3,616.8 1528.5,614.4 1530.3,613.1 1532.5,611.3 1534.7,607.7 1534.8,605.3 1534.8,603.5 1532.9,598.8 1532.7,598.6 1528.7,595.3 1523.9,593.3 1518.5,592.3 1512.3,592.7 1512.1,592.8 1505.9,595.2 1504.1,596.4 1501.9,598.2 1499.7,601.7 1499.5,604.1 1499.5,605.9Z"/><path fill="#c73205" d="M1503.8,611.4 1506,613.3 1510.8,615.4 1516.3,616.3 1519.8,616.1 1522.8,615.6 1527,614 1531.2,610.9 1533.3,607.3 1533.3,603.1 1532,599.9 1530.4,598.1 1528.2,596.2 1523.4,594.2 1518,593.3 1514.5,593.5 1511.6,594 1507.4,595.6 1503.2,598.6 1501,602.1 1500.9,606.3 1502.2,609.6Z"/><path fill="#bf2903" d="M1506.4,612.2 1506.6,612.3 1511.4,614.5 1516.9,615.4 1517.2,615.3 1523.5,614.3 1525.5,613.5 1529.8,610.5 1531.9,606.9 1531.9,602.7 1531.2,601.2 1527.8,597.3 1527.6,597.2 1522.9,595.1 1517.4,594.2 1517.1,594.2 1510.8,595.2 1508.8,596 1504.6,599 1502.4,602.5 1502.4,606.8 1503,608.3Z"/><path fill="#b52101" d="M1504,607.2 1507.3,611.2 1511.9,613.5 1517.6,614.2 1523.9,613.1 1524.4,612.9 1528.3,610.1 1530.4,606.5 1530.4,602.6 1530.3,602.2 1526.9,598.3 1522.3,596 1516.7,595.4 1510.4,596.5 1510,596.7 1506,599.4 1503.9,603 1503.9,606.9Z"/><path fill="#a91a00" d="M1506.3,607.9 1508,609.9 1512.6,612.4 1518.3,613 1521.6,612.4 1525.8,610.4 1526.9,609.7 1529,606.1 1529,605 1528,601.6 1526.2,599.5 1521.6,597.1 1516,596.6 1512.7,597.1 1508.5,599 1507.4,599.8 1505.3,603.4 1505.3,604.5Z"/><path fill="#9d1300" d="M1508.6,608.6 1508.7,608.7 1513.3,611.3 1519,611.7 1519.3,611.7 1524.9,609.1 1527,605.5 1525.6,600.9 1525.5,600.7 1521,598.2 1515.3,597.8 1515,597.8 1509.4,600.4 1507.3,603.9Z"/><path fill="#8f0d00" d="M1513.9,610.1 1514,610.1 1520.4,609.4 1522.6,608.4 1524.7,604.8 1524.2,603 1520.4,599.4 1520.3,599.3 1513.9,600 1511.7,601 1509.6,604.6 1510.1,606.5Z"/>
<path d="M1240.5 755.7L1440.4 452.1" stroke="#b8860b" stroke-width="1.6" fill="none" /><path d="M1237.6 731.7L1440.3 428.4" stroke="#a55a2a" stroke-width="0.9" fill="none" /><path d="M1236.5 722.1L1440.2 418.9" stroke="#2e6e3e" stroke-width="0.9" fill="none" /><path d="M1236.1 719.0L1440.2 415.9" stroke="#1212f0" stroke-width="1.9" fill="none" /><path d="M1235.9 717.3L1440.2 414.2" stroke="#8a7a10" stroke-width="1" fill="none" /><path d="M1440.4 452.1L1772.6 542.8" stroke="#b8860b" stroke-width="1.6" fill="none" /><path d="M1440.3 428.4L1774.5 519.2" stroke="#a55a2a" stroke-width="0.9" fill="none" /><path d="M1440.2 418.9L1775.3 509.7" stroke="#2e6e3e" stroke-width="0.9" fill="none" /><path d="M1440.2 415.9L1775.6 506.7" stroke="#1212f0" stroke-width="1.9" fill="none" /><path d="M1440.2 414.2L1775.7 505.0" stroke="#8a7a10" stroke-width="1" fill="none" /><path d="M1240.5 755.7L1606.7 871.1" stroke="#b8860b" stroke-width="1.6" fill="none" /><path d="M1237.6 731.7L1607.2 846.9" stroke="#a55a2a" stroke-width="0.9" fill="none" /><path d="M1236.5 722.1L1607.4 837.2" stroke="#2e6e3e" stroke-width="0.9" fill="none" /><path d="M1236.1 719.0L1607.5 834.1" stroke="#1212f0" stroke-width="1.9" fill="none" /><path d="M1235.9 717.3L1607.5 832.4" stroke="#8a7a10" stroke-width="1" fill="none" /><path d="M1606.7 871.1L1772.6 542.8" stroke="#b8860b" stroke-width="1.6" fill="none" /><path d="M1607.2 846.9L1774.5 519.2" stroke="#a55a2a" stroke-width="0.9" fill="none" /><path d="M1607.4 837.2L1775.3 509.7" stroke="#2e6e3e" stroke-width="0.9" fill="none" /><path d="M1607.5 834.1L1775.6 506.7" stroke="#1212f0" stroke-width="1.9" fill="none" /><path d="M1607.5 832.4L1775.7 505.0" stroke="#8a7a10" stroke-width="1" fill="none" /><path d="M1236.5 722.1L1237.6 731.7" stroke="#a55a2a" stroke-width="0.9" fill="none" /><path d="M1237.6 731.7L1240.5 755.7" stroke="#b8860b" stroke-width="1.2" fill="none" /><path d="M1607.4 837.2L1607.2 846.9" stroke="#a55a2a" stroke-width="0.9" fill="none" /><path d="M1607.2 846.9L1606.7 871.1" stroke="#b8860b" stroke-width="1.2" fill="none" /><path d="M1775.3 509.7L1774.5 519.2" stroke="#a55a2a" stroke-width="0.9" fill="none" /><path d="M1774.5 519.2L1772.6 542.8" stroke="#b8860b" stroke-width="1.2" fill="none" /><path d="M1440.2 418.9L1440.3 428.4" stroke="#a55a2a" stroke-width="0.9" fill="none" /><path d="M1440.3 428.4L1440.4 452.1" stroke="#b8860b" stroke-width="1.2" fill="none" />
<polygon points="1531.1,520.5 1593.2,537.6 1612.8,567.8 1549.1,682.6 1501.9,696.8 1435.9,676.4 1418.3,642.9 1487.6,532.7" fill="none" stroke="#8e2a14" stroke-width="1.100" stroke-dasharray="1 4.500"/><path d="M1531.1 520.5L1435.9 676.4" stroke="#8e2a14" stroke-width="1" fill="none" /><path d="M1593.2 537.6L1501.9 696.8" stroke="#8e2a14" stroke-width="1" fill="none" /><path d="M1487.6 532.7L1612.8 567.8" stroke="#8e2a14" stroke-width="1" fill="none" /><path d="M1418.3 642.9L1549.1 682.6" stroke="#8e2a14" stroke-width="1" fill="none" /><polygon points="1537.7,609.2 1538.6,607.3 1539.2,605.3 1539.3,603.2 1539.1,601.2 1538.5,599.2 1537.6,597.3 1536.3,595.5 1534.7,593.8 1532.8,592.3 1530.6,590.9 1528.2,589.8 1525.6,588.9 1522.9,588.3 1520.0,587.9 1517.2,587.8 1514.3,587.9 1511.5,588.3 1508.8,588.9 1506.2,589.8 1503.8,590.9 1501.6,592.3 1499.7,593.8 1498.0,595.5 1496.7,597.3 1495.8,599.2 1495.2,601.2 1495.0,603.2 1495.1,605.2 1495.7,607.2 1496.6,609.2 1497.9,611.0 1499.5,612.7 1501.4,614.3 1503.5,615.6 1505.9,616.8 1508.6,617.7 1511.3,618.4 1514.2,618.8 1517.1,618.9 1520.0,618.8 1522.9,618.4 1525.7,617.7 1528.3,616.8 1530.7,615.7 1532.9,614.3 1534.8,612.8 1536.4,611.0" fill="none" stroke="#14148c" stroke-width="1"/><polygon points="1537.7,602.4 1538.6,600.5 1539.2,598.5 1539.3,596.4 1539.1,594.4 1538.5,592.4 1537.6,590.5 1536.3,588.7 1534.7,587.0 1532.8,585.5 1530.6,584.1 1528.2,583.0 1525.6,582.1 1522.9,581.5 1520.0,581.1 1517.2,581.0 1514.3,581.1 1511.5,581.5 1508.8,582.1 1506.2,583.0 1503.8,584.1 1501.6,585.5 1499.7,587.0 1498.0,588.7 1496.7,590.5 1495.8,592.4 1495.2,594.4 1495.0,596.4 1495.1,598.4 1495.7,600.4 1496.6,602.4 1497.9,604.2 1499.5,605.9 1501.4,607.5 1503.5,608.8 1505.9,610.0 1508.6,610.9 1511.3,611.6 1514.2,612.0 1517.1,612.1 1520.0,612.0 1522.9,611.6 1525.7,610.9 1528.3,610.0 1530.7,608.9 1532.9,607.5 1534.8,606.0 1536.4,604.2" fill="none" stroke="#14148c" stroke-width="1"/><path d="M1539.3 603.2L1539.3 596.4" stroke="#14148c" stroke-width="1" fill="none" /><path d="M1495.0 603.2L1495.0 596.4" stroke="#14148c" stroke-width="1" fill="none" /><path d="M1495.0 603.2L1495.0 596.4" stroke="#14148c" stroke-width="1" fill="none" /><path d="M1539.3 603.2L1539.3 596.4" stroke="#14148c" stroke-width="1" fill="none" />
<path d="M1235.9 717.3L1320.0 741.5" stroke="#f01010" stroke-width="1.4" fill="none" /><polygon points="1326.500,744 1314,745.500 1316.500,737.500" fill="#f01010"/><path d="M1236.4 717.3L1242.2 776.0" stroke="#0a7a1a" stroke-width="1.2" fill="none" /><polygon points="1242.500,782 1239.500,774.500 1245,774.500" fill="#0a7a1a"/><polygon points="1250,687.500 1257,689 1253.500,695" fill="#1212f0"/><polygon points="1273,653 1280,654 1277,660" fill="#1212f0"/><polygon points="1760.500,521.500 1768,523 1764,529.500" fill="#1212f0"/><g font-family="Liberation Sans, sans-serif" font-size="10"><text x="1337" y="749.500" fill="#f01010">X</text><text x="1243.500" y="793" fill="#0a7a1a">Z</text><text x="1285" y="640" fill="#1212f0">Y</text></g>
<g id="cube">
<path d="M1789 222.700L1805 226.500M1860 240L1879 244.200" stroke="#ff5a5a" stroke-width="1.400"/>
<path d="M1837.900 194V200" stroke="#5cc05c" stroke-width="1.600"/>
<polygon points="1820.500,195.500 1866,206 1852,231.500 1805,221.500" fill="#bcdcbc" stroke="#a9a9a9" stroke-width="0.800"/>
<polygon points="1805,221.500 1852,231.500 1847,271.500 1801.500,259.500" fill="#c2c6e6" stroke="#a9a9a9" stroke-width="0.800"/>
<polygon points="1852,231.500 1866,206 1863.500,241 1847,271.500" fill="#cfa8a8" stroke="#a9a9a9" stroke-width="0.800"/>
<path d="M1805 221.500L1852 231.500L1866 206" stroke="#9a8a9a" stroke-width="1.400" fill="none"/>
<path d="M1837.500 200L1836 229" stroke="#9fd09f" stroke-width="1.600"/>
<path d="M1805 226.500L1860 240" stroke="#e8b0c8" stroke-width="1.400" opacity="0.700"/>
<path d="M1827.500 246.500L1820 259.500" stroke="#5a5af0" stroke-width="1.400"/><path d="M1836 229L1827.500 246.500" stroke="#9a9ae8" stroke-width="1.300" opacity="0.750"/>
<path d="M1836 229L1846 212" stroke="#a8c0e0" stroke-width="1.200" opacity="0.700"/>
<path d="M1830.500 268V273" stroke="#5cc05c" stroke-width="1.600"/>
<text transform="matrix(0.98,0.21,-0.12,0.99,1807.500,247)" font-family="Liberation Mono, monospace" font-size="12.500" fill="#5a5a66">Front</text>
<text transform="matrix(0.95,0.22,-0.55,0.65,1826,210)" font-family="Liberation Mono, monospace" font-size="11.500" fill="#66766a">Top</text>
<g font-family="Liberation Sans, sans-serif" font-size="10"><text x="1887.500" y="246.500" fill="#ff5a5a">X</text><text x="1850" y="202.500" fill="#5a5af0">Y</text><text x="1828.500" y="279" fill="#5cc05c">Z</text></g>
</g>
</svg>
<div class="a" style="left:309px;top:1092px;width:1606px;height:42px;background:#f0f0f0;border-top:1px solid #000;border-bottom:1px solid #a0a0a0"></div>
<div class="a" style="left:309.5px;top:1093px;width:20.5px;height:17.500px;background:#f0f0f0;border-left:1px solid #fff;border-top:1px solid #fff;border-right:2px solid #a0a0a0;border-bottom:2px solid #a0a0a0"></div><div class="a" style="left:330.0px;top:1093px;width:20.5px;height:17.500px;background:#f0f0f0;border-left:1px solid #fff;border-top:1px solid #fff;border-right:2px solid #a0a0a0;border-bottom:2px solid #a0a0a0"></div><div class="a" style="left:350.8px;top:1093px;width:20.5px;height:17.500px;background:#f0f0f0;border-left:1px solid #fff;border-top:1px solid #fff;border-right:2px solid #a0a0a0;border-bottom:2px solid #a0a0a0"></div><div class="a" style="left:371.8px;top:1093px;width:20.5px;height:17.500px;background:#f0f0f0;border-left:1px solid #fff;border-top:1px solid #fff;border-right:2px solid #a0a0a0;border-bottom:2px solid #a0a0a0"></div><div class="a" style="left:392.8px;top:1093px;width:20.5px;height:17.500px;background:#f0f0f0;border-left:1px solid #fff;border-top:1px solid #fff;border-right:2px solid #a0a0a0;border-bottom:2px solid #a0a0a0"></div>
<svg style="left:309px;top:1093px" width="105" height="18" viewBox="0 0 105 18"><rect x="5" y="4" width="1.500" height="9" fill="#000"/><path d="M12.500 4v9l-5.500-4.500z" fill="#000"/><path d="M33 4v9l-5.500-4.500z" fill="#000"/><path d="M69.500 4v9l5.500-4.500z" fill="#8c8c8c"/><path d="M91 4v9l5.500-4.500z" fill="#000"/><rect x="97" y="4" width="1.500" height="9" fill="#000"/><text x="48" y="14" font-family="Liberation Sans, sans-serif" font-weight="bold" font-size="12" fill="#000">#</text></svg>
<svg style="left:0;top:0" width="1920" height="1160" viewBox="0 0 1920 1160"><polygon points="1732.1,1093 1872.4,1093 1865.4,1109.500 1739.1,1109.500" fill="#fff"/><path d="M424.8 1093L431.8 1109.500M428.3 1101.200L424.8 1109.500M532.8 1093L539.8 1109.500M536.3 1101.200L532.8 1109.500M648.5 1093L655.5 1109.500M652.0 1101.200L648.5 1109.500M764.5 1093L771.5 1109.500M768.0 1101.200L764.5 1109.500M879.8 1093L886.8 1109.500M883.3 1101.200L879.8 1109.500M996.5 1093L1003.5 1109.500M1000.0 1101.200L996.5 1109.500M1113.5 1093L1120.5 1109.500M1117.0 1101.200L1113.5 1109.500M1228.9 1093L1235.9 1109.500M1232.4 1101.200L1228.9 1109.500M1344.2 1093L1351.2 1109.500M1347.7 1101.200L1344.2 1109.500M1468.1 1093L1475.1 1109.500M1471.6 1101.200L1468.1 1109.500M1600.5 1093L1607.5 1109.500M1604.0 1101.200L1600.5 1109.500M1732.1 1093L1739.1 1109.500M1735.6 1101.200L1732.1 1109.500M1872.4 1093L1865.4 1109.500" stroke="#000" stroke-width="1.100" fill="none"/><path d="M414 1109.500H424.8M431.8 1109.500H532.8M539.8 1109.500H648.5M655.5 1109.500H764.5M771.5 1109.500H879.8M886.8 1109.500H996.5M1003.5 1109.500H1113.5M1120.5 1109.500H1228.9M1235.9 1109.500H1344.2M1351.2 1109.500H1468.1M1475.1 1109.500H1600.5M1607.5 1109.500H1732.1M1739.1 1109.500H1865.4" stroke="#9a9a9a" stroke-width="1" fill="none"/></svg>
<div class="stab" style="left:428.3px;width:108.0px;text-align:center">Stage 2 = 30 d</div><div class="stab" style="left:536.3px;width:115.7px;text-align:center">Stage 3 = 150 d</div><div class="stab" style="left:652.0px;width:116.0px;text-align:center">Stage 4 = 180 d</div><div class="stab" style="left:768.0px;width:115.3px;text-align:center">Stage 5 = 280 d</div><div class="stab" style="left:883.3px;width:116.7px;text-align:center">Stage 6 = 460 d</div><div class="stab" style="left:1000.0px;width:117.0px;text-align:center">Stage 7 = 690 d</div><div class="stab" style="left:1117.0px;width:115.4px;text-align:center">Stage 8 = 790 d</div><div class="stab" style="left:1232.4px;width:115.3px;text-align:center">Stage 9 = 850 d</div><div class="stab" style="left:1347.7px;width:123.9px;text-align:center">Stage 10 = 990 d</div><div class="stab" style="left:1471.6px;width:132.4px;text-align:center">Stage 11 = 1070 d</div><div class="stab" style="left:1604.0px;width:131.6px;text-align:center">Stage 12 = 1110 d</div><div class="stab" style="left:1735.6px;width:133.3px;text-align:center;font-weight:bold">Stage 13 = 1530 d</div><div class="stab" style="left:414.500px;width:5px;overflow:hidden"><span style="margin-left:-3.500px">d</span></div>
<div class="a" style="left:1760px;top:1113px;width:133px;height:20px;background:#fff;border:1px solid #000"></div>
<div class="a" style="left:0;top:1140px;width:1920px;height:20px;background:#fff"></div>
<div class="t" style="left:3.500px;top:1144px;font-size:11.500px;color:#222" id="rdy">Ready</div>
<div class="a" style="left:1531.5px;top:1142.500px;width:97.5px;height:18px;background:#cce4f7;text-align:center;font-size:11.300px;line-height:17px;color:#111">MAX DATATIPS</div><div class="a" style="left:1631.0px;top:1142.500px;width:36.0px;height:18px;background:#cce4f7;text-align:center;font-size:11.300px;line-height:17px;color:#111">SNAP</div><div class="a" style="left:1667.0px;top:1142.500px;width:31.0px;height:18px;text-align:center;font-size:11.300px;line-height:17px;color:#a6a6a6">GRID</div><div class="a" style="left:1699.0px;top:1142.500px;width:46.0px;height:18px;background:#cce4f7;text-align:center;font-size:11.300px;line-height:17px;color:#111">ORTHO</div><div class="a" style="left:1745.0px;top:1142.500px;width:45.0px;height:18px;text-align:center;font-size:11.300px;line-height:17px;color:#a6a6a6">OSNAP</div>
</body></html>
